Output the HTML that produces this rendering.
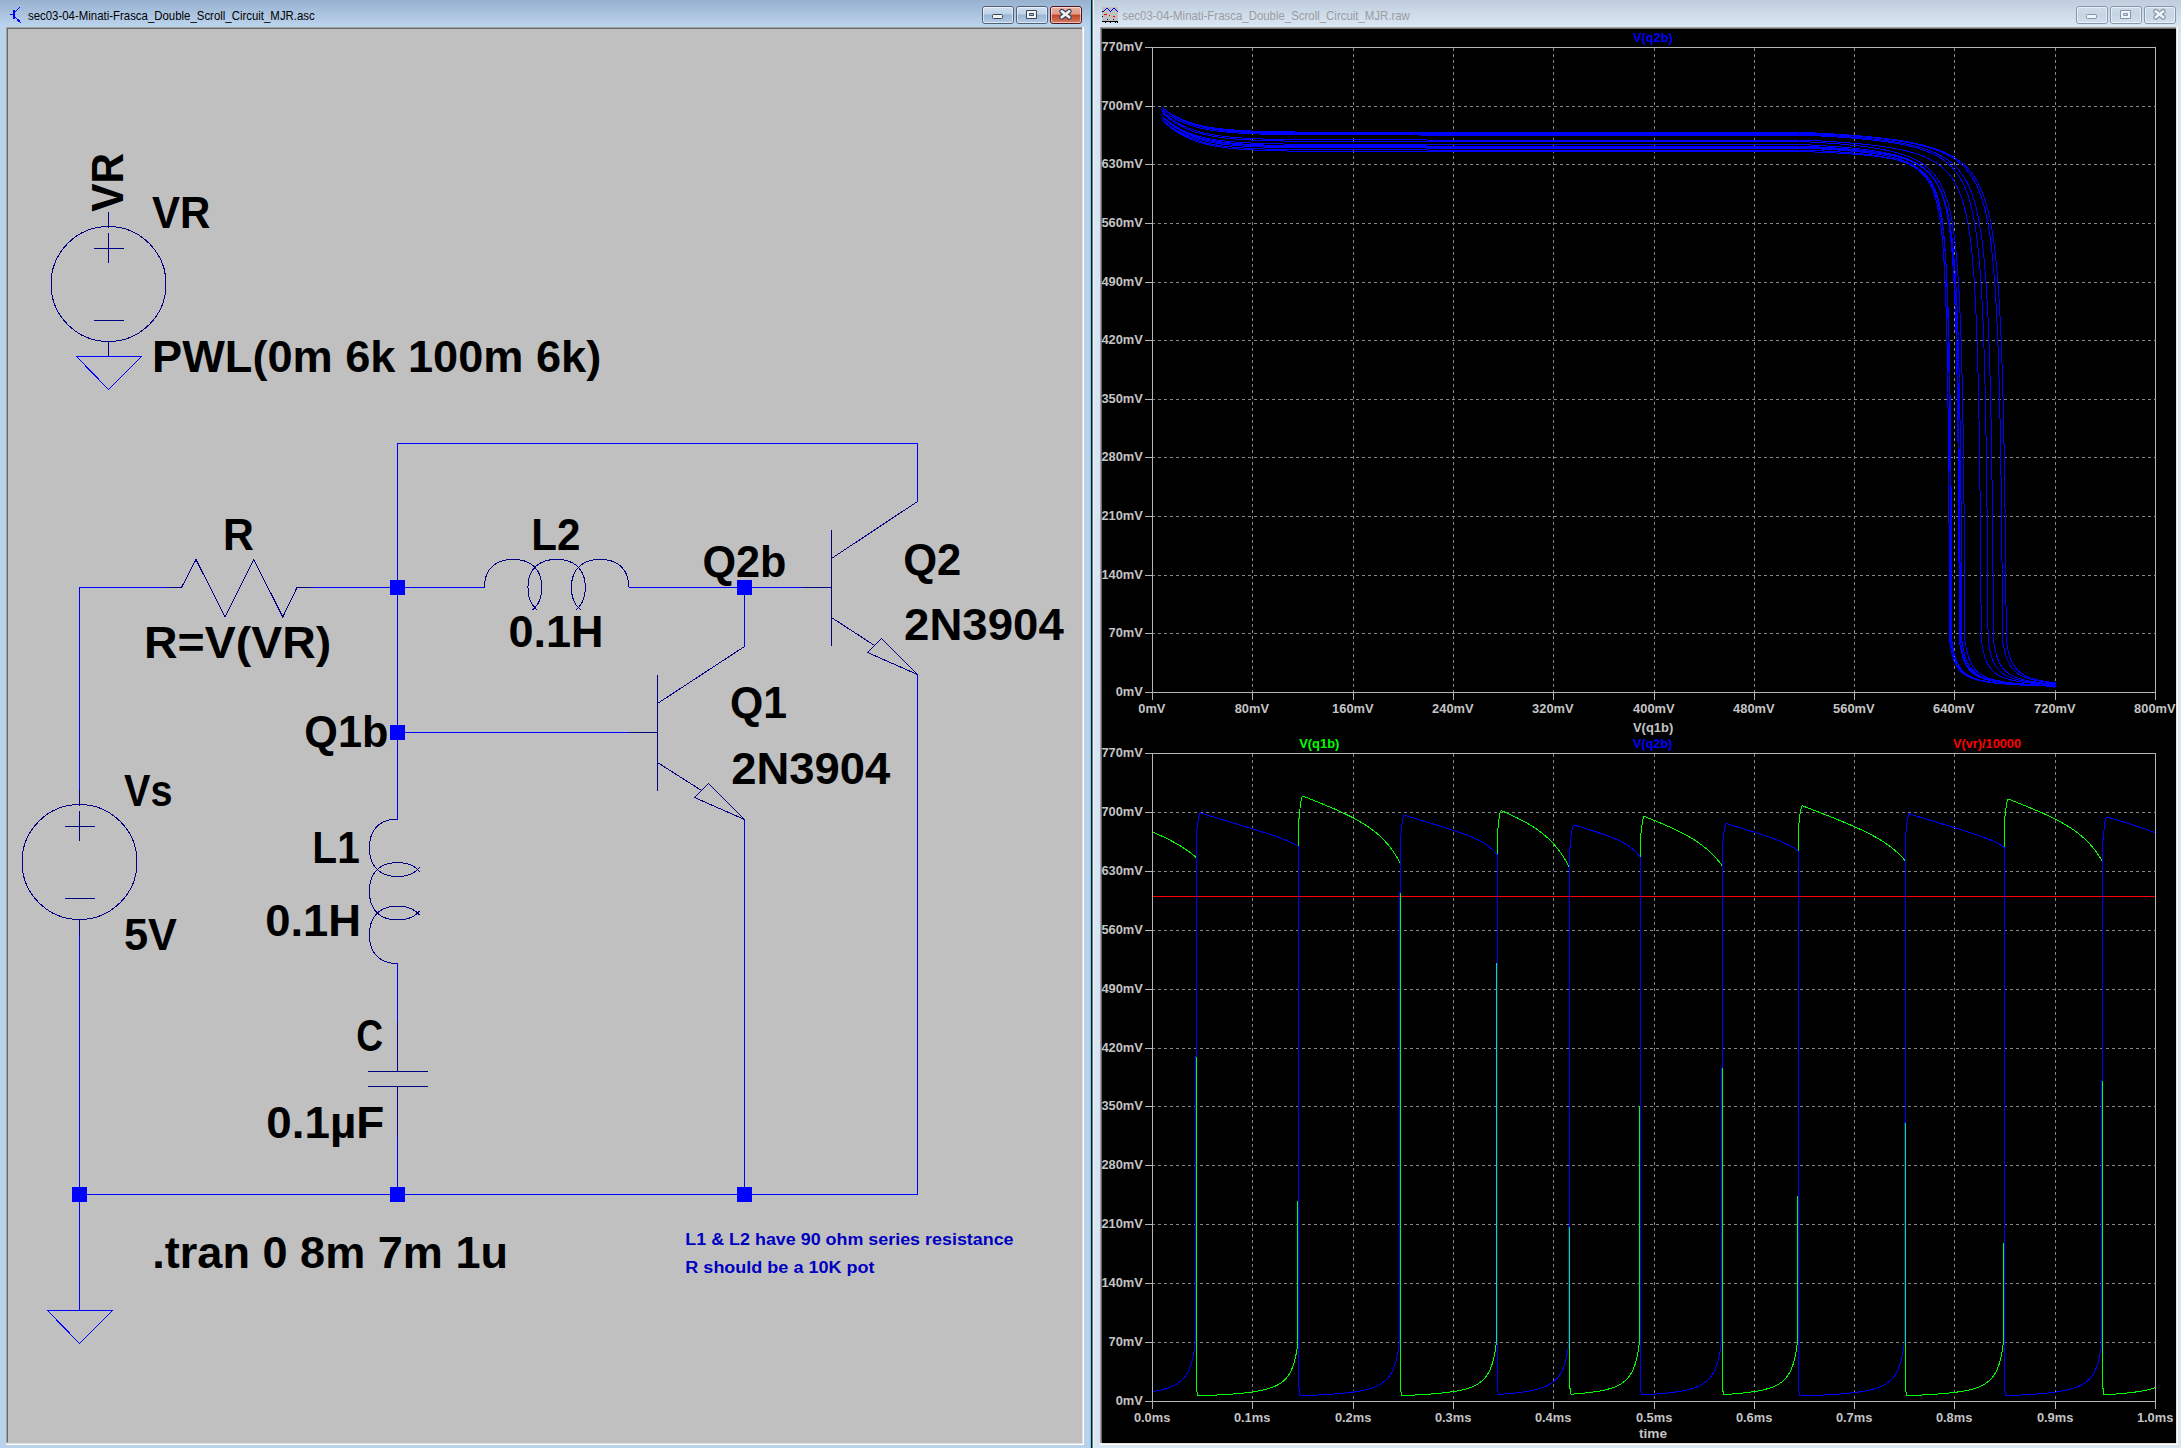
<!DOCTYPE html><html><head><meta charset='utf-8'><style>html,body{margin:0;padding:0;background:#bad2ea;overflow:hidden}svg{display:block}text{font-family:'Liberation Sans',sans-serif}</style></head><body>
<svg width='2181' height='1448' viewBox='0 0 2181 1448'>
<defs>
<linearGradient id='tgA' x1='0' y1='0' x2='0' y2='1'><stop offset='0' stop-color='#97b1cf'/><stop offset='1' stop-color='#bdd4ee'/></linearGradient>
<linearGradient id='tgI' x1='0' y1='0' x2='0' y2='1'><stop offset='0' stop-color='#bfcddc'/><stop offset='1' stop-color='#dbe7f4'/></linearGradient>
<linearGradient id='btnA' x1='0' y1='0' x2='0' y2='1'><stop offset='0' stop-color='#d3e1f1'/><stop offset='0.45' stop-color='#bcd0e7'/><stop offset='0.5' stop-color='#9ab5d3'/><stop offset='1' stop-color='#b5cce6'/></linearGradient>
<linearGradient id='btnC' x1='0' y1='0' x2='0' y2='1'><stop offset='0' stop-color='#eab1a2'/><stop offset='0.45' stop-color='#de9b86'/><stop offset='0.5' stop-color='#c14424'/><stop offset='1' stop-color='#d8806a'/></linearGradient>
<linearGradient id='btnI' x1='0' y1='0' x2='0' y2='1'><stop offset='0' stop-color='#cfdbe8'/><stop offset='0.5' stop-color='#c6d4e4'/><stop offset='1' stop-color='#d3e0ee'/></linearGradient>
</defs>
<rect x='0' y='0' width='1090' height='1448' fill='#bad2ea'/>
<rect x='0' y='0' width='1090' height='27' fill='url(#tgA)'/>
<rect x='1092' y='0' width='1089' height='1448' fill='#d8e5f2'/>
<rect x='1092' y='0' width='1089' height='27' fill='url(#tgI)'/>
<rect x='1093' y='0' width='1' height='1448' fill='#eef4fb'/>
<rect x='1090' y='0' width='1' height='1448' fill='#55d5fb'/>
<rect x='1091' y='0' width='1' height='1448' fill='#151515'/>
<rect x='1092' y='0' width='1' height='1448' fill='#7a7a7a'/>
<rect x='6' y='27' width='1078' height='1418' fill='#ffffff'/>
<rect x='6' y='27' width='1077' height='1417' fill='#e3e3e3'/>
<rect x='6' y='27' width='1076' height='1416' fill='#a0a0a0'/>
<rect x='7' y='28' width='1075' height='1414' fill='#696969'/>
<rect x='8' y='29' width='1074' height='1414' fill='#c0c0c0'/>
<rect x='1100' y='27' width='1078' height='1418' fill='#ffffff'/>
<rect x='1100' y='27' width='1077' height='1417' fill='#e3e3e3'/>
<rect x='1100' y='27' width='1076' height='1416' fill='#a0a0a0'/>
<rect x='1101' y='28' width='1075' height='1414' fill='#696969'/>
<rect x='1102' y='29' width='1074' height='1414' fill='#000000'/>
<rect x='982.5' y='6.5' width='31' height='17' rx='2.5' fill='url(#btnA)' stroke='#4f6078' stroke-width='1'/><rect x='983.5' y='7.5' width='29' height='15' rx='1.5' fill='none' stroke='#ffffff' stroke-opacity='0.55' stroke-width='1'/><rect x='992.5' y='14.5' width='10' height='4' rx='1' fill='#f4f4f4' stroke='#3a4658' stroke-width='1'/>
<rect x='1016.5' y='6.5' width='31' height='17' rx='2.5' fill='url(#btnA)' stroke='#4f6078' stroke-width='1'/><rect x='1017.5' y='7.5' width='29' height='15' rx='1.5' fill='none' stroke='#ffffff' stroke-opacity='0.55' stroke-width='1'/><path d='M1026.5 10.5h10v8h-10z M1029.5 13.5v2h4v-2z' fill='#f4f4f4' fill-rule='evenodd' stroke='#3a4658' stroke-width='1'/>
<rect x='1050.5' y='6.5' width='31' height='17' rx='2.5' fill='url(#btnC)' stroke='#4b1622' stroke-width='1'/><rect x='1051.5' y='7.5' width='29' height='15' rx='1.5' fill='none' stroke='#ffffff' stroke-opacity='0.55' stroke-width='1'/><path d='M1061.7 11.3 L1069.3 17.3 M1069.3 11.3 L1061.7 17.3' stroke='#3a4658' stroke-width='5' stroke-linecap='round'/><path d='M1061.7 11.3 L1069.3 17.3 M1069.3 11.3 L1061.7 17.3' stroke='#f4f4f4' stroke-width='2.6' stroke-linecap='round'/>
<rect x='2076.5' y='6.5' width='31' height='17' rx='2.5' fill='url(#btnI)' stroke='#8797b0' stroke-width='1'/><rect x='2077.5' y='7.5' width='29' height='15' rx='1.5' fill='none' stroke='#ffffff' stroke-opacity='0.55' stroke-width='1'/><rect x='2086.5' y='14.5' width='10' height='4' rx='1' fill='#f0f3f7' stroke='#8794a8' stroke-width='1'/>
<rect x='2110.5' y='6.5' width='31' height='17' rx='2.5' fill='url(#btnI)' stroke='#8797b0' stroke-width='1'/><rect x='2111.5' y='7.5' width='29' height='15' rx='1.5' fill='none' stroke='#ffffff' stroke-opacity='0.55' stroke-width='1'/><path d='M2120.5 10.5h10v8h-10z M2123.5 13.5v2h4v-2z' fill='#f0f3f7' fill-rule='evenodd' stroke='#8794a8' stroke-width='1'/>
<rect x='2144.5' y='6.5' width='31' height='17' rx='2.5' fill='url(#btnI)' stroke='#8797b0' stroke-width='1'/><rect x='2145.5' y='7.5' width='29' height='15' rx='1.5' fill='none' stroke='#ffffff' stroke-opacity='0.55' stroke-width='1'/><path d='M2155.7 11.3 L2163.3 17.3 M2163.3 11.3 L2155.7 17.3' stroke='#8794a8' stroke-width='5' stroke-linecap='round'/><path d='M2155.7 11.3 L2163.3 17.3 M2163.3 11.3 L2155.7 17.3' stroke='#f0f3f7' stroke-width='2.6' stroke-linecap='round'/>
<rect x='10' y='14' width='1' height='1' fill='#0000ff'/><rect x='11' y='14' width='1' height='1' fill='#0000ff'/><rect x='12' y='14' width='1' height='1' fill='#0000ff'/><rect x='13' y='10' width='1' height='1' fill='#0000ff'/><rect x='13' y='11' width='1' height='1' fill='#0000ff'/><rect x='13' y='12' width='1' height='1' fill='#0000ff'/><rect x='13' y='13' width='1' height='1' fill='#0000ff'/><rect x='13' y='14' width='1' height='1' fill='#0000ff'/><rect x='13' y='15' width='1' height='1' fill='#0000ff'/><rect x='13' y='16' width='1' height='1' fill='#0000ff'/><rect x='13' y='17' width='1' height='1' fill='#0000ff'/><rect x='13' y='18' width='1' height='1' fill='#0000ff'/><rect x='14' y='10' width='1' height='1' fill='#0000ff'/><rect x='14' y='11' width='1' height='1' fill='#0000ff'/><rect x='14' y='12' width='1' height='1' fill='#0000ff'/><rect x='14' y='13' width='1' height='1' fill='#0000ff'/><rect x='14' y='14' width='1' height='1' fill='#0000ff'/><rect x='14' y='15' width='1' height='1' fill='#0000ff'/><rect x='14' y='16' width='1' height='1' fill='#0000ff'/><rect x='14' y='17' width='1' height='1' fill='#0000ff'/><rect x='14' y='18' width='1' height='1' fill='#0000ff'/><rect x='15' y='11' width='1' height='1' fill='#0000ff'/><rect x='16' y='10' width='1' height='1' fill='#0000ff'/><rect x='17' y='9' width='1' height='1' fill='#0000ff'/><rect x='18' y='8' width='1' height='1' fill='#0000ff'/><rect x='19' y='7' width='1' height='1' fill='#0000ff'/><rect x='15' y='17' width='1' height='1' fill='#0000ff'/><rect x='16' y='18' width='1' height='1' fill='#0000ff'/><rect x='17' y='19' width='1' height='1' fill='#0000ff'/><rect x='18' y='20' width='1' height='1' fill='#0000ff'/><rect x='19' y='21' width='1' height='1' fill='#0000ff'/><rect x='20' y='22' width='1' height='1' fill='#0000ff'/><rect x='17' y='20' width='1' height='1' fill='#0000ff'/><rect x='18' y='19' width='1' height='1' fill='#0000ff'/><rect x='18' y='21' width='1' height='1' fill='#0000ff'/><rect x='19' y='20' width='1' height='1' fill='#0000ff'/>
<rect x='1102' y='7' width='16' height='14' fill='#c0c0c0'/><rect x='1103' y='11' width='1' height='1' fill='#0000ff'/><rect x='1104' y='10' width='1' height='1' fill='#0000ff'/><rect x='1105' y='9' width='1' height='1' fill='#0000ff'/><rect x='1106' y='8' width='1' height='1' fill='#0000ff'/><rect x='1107' y='8' width='1' height='1' fill='#0000ff'/><rect x='1108' y='9' width='1' height='1' fill='#0000ff'/><rect x='1109' y='10' width='1' height='1' fill='#0000ff'/><rect x='1110' y='11' width='1' height='1' fill='#0000ff'/><rect x='1111' y='10' width='1' height='1' fill='#0000ff'/><rect x='1112' y='9' width='1' height='1' fill='#0000ff'/><rect x='1113' y='8' width='1' height='1' fill='#0000ff'/><rect x='1114' y='8' width='1' height='1' fill='#0000ff'/><rect x='1115' y='9' width='1' height='1' fill='#0000ff'/><rect x='1116' y='10' width='1' height='1' fill='#0000ff'/><rect x='1117' y='11' width='1' height='1' fill='#0000ff'/><rect x='1102' y='11' width='1' height='1' fill='#000000'/><rect x='1102' y='16' width='1' height='1' fill='#000000'/><rect x='1102' y='21' width='1' height='1' fill='#000000'/><rect x='1103' y='21' width='1' height='1' fill='#000000'/><rect x='1104' y='21' width='1' height='1' fill='#000000'/><rect x='1105' y='21' width='1' height='1' fill='#000000'/><rect x='1106' y='21' width='1' height='1' fill='#000000'/><rect x='1107' y='21' width='1' height='1' fill='#000000'/><rect x='1108' y='21' width='1' height='1' fill='#000000'/><rect x='1109' y='21' width='1' height='1' fill='#000000'/><rect x='1110' y='21' width='1' height='1' fill='#000000'/><rect x='1111' y='21' width='1' height='1' fill='#000000'/><rect x='1112' y='21' width='1' height='1' fill='#000000'/><rect x='1113' y='21' width='1' height='1' fill='#000000'/><rect x='1114' y='21' width='1' height='1' fill='#000000'/><rect x='1115' y='21' width='1' height='1' fill='#000000'/><rect x='1116' y='21' width='1' height='1' fill='#000000'/><rect x='1117' y='21' width='1' height='1' fill='#000000'/><rect x='1105' y='22' width='1' height='1' fill='#000000'/><rect x='1110' y='22' width='1' height='1' fill='#000000'/><rect x='1115' y='22' width='1' height='1' fill='#000000'/><rect x='1117' y='22' width='1' height='1' fill='#000000'/><rect x='1104' y='14' width='1' height='1' fill='#ff0000'/><rect x='1105' y='14' width='1' height='1' fill='#ff0000'/><rect x='1106' y='14' width='1' height='1' fill='#ff0000'/><rect x='1109' y='15' width='1' height='1' fill='#ff0000'/><rect x='1113' y='16' width='1' height='1' fill='#ff0000'/><rect x='1114' y='16' width='1' height='1' fill='#ff0000'/><rect x='1107' y='19' width='1' height='1' fill='#000080'/><rect x='1113' y='19' width='1' height='1' fill='#000080'/>
<rect x='397' y='443' width='521' height='1' fill='#0000ff'/>
<rect x='397' y='443' width='1' height='377' fill='#0000ff'/>
<rect x='917' y='443' width='1' height='59' fill='#0000ff'/>
<rect x='79' y='587' width='1' height='205' fill='#0000ff'/>
<rect x='79' y='587' width='89' height='1' fill='#0000ff'/>
<rect x='311' y='587' width='174' height='1' fill='#0000ff'/>
<rect x='629' y='587' width='175' height='1' fill='#0000ff'/>
<rect x='744' y='587' width='1' height='60' fill='#0000ff'/>
<rect x='397' y='732' width='233' height='1' fill='#0000ff'/>
<rect x='79' y='933' width='1' height='378' fill='#0000ff'/>
<rect x='397' y='963' width='1' height='60' fill='#0000ff'/>
<rect x='397' y='1136' width='1' height='59' fill='#0000ff'/>
<rect x='744' y='819' width='1' height='376' fill='#0000ff'/>
<rect x='917' y='674' width='1' height='521' fill='#0000ff'/>
<rect x='79' y='1194' width='839' height='1' fill='#0000ff'/>
<rect x='390' y='580' width='15' height='15' fill='#0000ff'/>
<rect x='737' y='580' width='15' height='15' fill='#0000ff'/>
<rect x='390' y='725' width='15' height='15' fill='#0000ff'/>
<rect x='72' y='1187' width='15' height='15' fill='#0000ff'/>
<rect x='390' y='1187' width='15' height='15' fill='#0000ff'/>
<rect x='737' y='1187' width='15' height='15' fill='#0000ff'/>
<circle cx='108.5' cy='284' r='57.5' stroke='#000080' stroke-width='1' fill='none' shape-rendering='crispEdges'/>
<rect x='108' y='212' width='1' height='16' fill='#000080'/>
<rect x='108' y='341' width='1' height='16' fill='#000080'/>
<rect x='94' y='248' width='30' height='1' fill='#000080'/>
<rect x='108' y='233' width='1' height='30' fill='#000080'/>
<rect x='94' y='320' width='30' height='1' fill='#000080'/>
<circle cx='79.5' cy='862' r='57.5' stroke='#000080' stroke-width='1' fill='none' shape-rendering='crispEdges'/>
<rect x='79' y='790' width='1' height='16' fill='#000080'/>
<rect x='79' y='919' width='1' height='16' fill='#000080'/>
<rect x='65' y='826' width='30' height='1' fill='#000080'/>
<rect x='79' y='811' width='1' height='30' fill='#000080'/>
<rect x='65' y='898' width='30' height='1' fill='#000080'/>
<path d='M76.50 356.50 L141.50 356.50 L108.50 389.50 Z' stroke='#0000ff' stroke-width='1' fill='none' shape-rendering='crispEdges'/>
<path d='M47.50 1310.50 L112.50 1310.50 L79.50 1343.50 Z' stroke='#0000ff' stroke-width='1' fill='none' shape-rendering='crispEdges'/>
<rect x='167' y='587' width='15' height='1' fill='#000080'/>
<path d='M181.50 587.50 L196.00 559.50 L225.00 617.00 L253.80 559.50 L282.80 617.00 L297.00 587.50' stroke='#000080' stroke-width='1' fill='none' shape-rendering='crispEdges'/>
<rect x='296' y='587' width='16' height='1' fill='#000080'/>
<path d='M484.50 587.50 L484.52 585.63 L484.60 584.08 L484.72 582.64 L484.90 581.27 L485.12 579.96 L485.39 578.69 L485.71 577.47 L486.07 576.28 L486.49 575.13 L486.95 574.02 L487.46 572.95 L488.01 571.91 L488.61 570.91 L489.26 569.94 L489.94 569.02 L490.68 568.13 L491.45 567.28 L492.27 566.47 L493.12 565.71 L494.02 564.98 L494.96 564.30 L495.93 563.66 L496.95 563.06 L498.00 562.51 L499.09 562.00 L500.22 561.54 L501.38 561.12 L502.59 560.76 L503.83 560.43 L505.11 560.16 L506.44 559.93 L507.83 559.75 L509.28 559.62 L510.83 559.54 L512.59 559.50 L514.65 559.51 L516.26 559.58 L517.75 559.69 L519.16 559.85 L520.51 560.05 L521.82 560.31 L523.08 560.61 L524.30 560.96 L525.48 561.35 L526.62 561.80 L527.73 562.28 L528.80 562.82 L529.83 563.39 L530.82 564.01 L531.78 564.68 L532.69 565.39 L533.57 566.14 L534.40 566.93 L535.19 567.76 L535.94 568.63 L536.65 569.54 L537.31 570.48 L537.93 571.47 L538.51 572.49 L539.04 573.55 L539.52 574.64 L539.95 575.78 L540.34 576.95 L540.68 578.15 L540.97 579.40 L541.21 580.70 L541.41 582.04 L541.55 583.44 L541.65 584.94 L541.70 586.59 L541.69 588.64 L541.64 590.26 L541.54 591.74 L541.39 593.14 L541.19 594.47 L540.94 595.76 L540.64 597.00 L540.29 598.21 L539.90 599.37 L539.46 600.50 L538.97 601.59 L538.44 602.64 L537.86 603.66 L537.23 604.64 L536.56 605.58 L535.85 606.49 L535.09 607.35 L534.29 608.18 L533.46 608.96 L532.58 609.71 M537.12 609.71 L536.06 608.80 L535.05 607.83 L534.11 606.79 L533.23 605.70 L532.41 604.56 L531.66 603.36 L530.98 602.10 L530.37 600.79 L529.82 599.42 L529.34 598.00 L528.94 596.52 L528.61 594.98 L528.35 593.37 L528.16 591.68 L528.04 589.86 L528.00 587.72 L528.03 585.42 L528.14 583.57 L528.31 581.86 L528.56 580.24 L528.89 578.69 L529.28 577.21 L529.75 575.78 L530.28 574.40 L530.89 573.08 L531.56 571.82 L532.30 570.61 L533.11 569.45 L533.98 568.36 L534.92 567.32 L535.91 566.34 L536.97 565.42 L538.09 564.56 L539.26 563.77 L540.49 563.04 L541.78 562.37 L543.13 561.78 L544.52 561.25 L545.98 560.79 L547.49 560.39 L549.07 560.07 L550.72 559.82 L552.46 559.64 L554.33 559.54 L556.60 559.50 L558.87 559.54 L560.74 559.64 L562.48 559.82 L564.13 560.07 L565.71 560.39 L567.22 560.79 L568.68 561.25 L570.07 561.78 L571.42 562.37 L572.71 563.04 L573.94 563.77 L575.11 564.56 L576.23 565.42 L577.29 566.34 L578.28 567.32 L579.22 568.36 L580.09 569.45 L580.90 570.61 L581.64 571.82 L582.31 573.08 L582.92 574.40 L583.45 575.78 L583.92 577.21 L584.31 578.69 L584.64 580.24 L584.89 581.86 L585.06 583.57 L585.17 585.42 L585.20 587.72 L585.16 589.86 L585.04 591.68 L584.85 593.37 L584.59 594.98 L584.26 596.52 L583.86 598.00 L583.38 599.42 L582.83 600.79 L582.22 602.10 L581.54 603.36 L580.79 604.56 L579.97 605.70 L579.09 606.79 L578.15 607.83 L577.14 608.80 L576.08 609.71 M580.62 609.71 L579.74 608.96 L578.91 608.18 L578.11 607.35 L577.35 606.49 L576.64 605.58 L575.97 604.64 L575.34 603.66 L574.76 602.64 L574.23 601.59 L573.74 600.50 L573.30 599.37 L572.91 598.21 L572.56 597.00 L572.26 595.76 L572.01 594.47 L571.81 593.14 L571.66 591.74 L571.56 590.26 L571.51 588.64 L571.50 586.59 L571.55 584.94 L571.65 583.44 L571.79 582.04 L571.99 580.70 L572.23 579.40 L572.52 578.15 L572.86 576.95 L573.25 575.78 L573.68 574.64 L574.16 573.55 L574.69 572.49 L575.27 571.47 L575.89 570.48 L576.55 569.54 L577.26 568.63 L578.01 567.76 L578.80 566.93 L579.63 566.14 L580.51 565.39 L581.42 564.68 L582.38 564.01 L583.37 563.39 L584.40 562.82 L585.47 562.28 L586.58 561.80 L587.72 561.35 L588.90 560.96 L590.12 560.61 L591.38 560.31 L592.69 560.05 L594.04 559.85 L595.45 559.69 L596.94 559.58 L598.55 559.51 L600.61 559.50 L602.37 559.54 L603.92 559.62 L605.37 559.75 L606.76 559.93 L608.09 560.16 L609.37 560.43 L610.61 560.76 L611.82 561.12 L612.98 561.54 L614.11 562.00 L615.20 562.51 L616.25 563.06 L617.27 563.66 L618.24 564.30 L619.18 564.98 L620.08 565.71 L620.93 566.47 L621.75 567.28 L622.52 568.13 L623.26 569.02 L623.94 569.94 L624.59 570.91 L625.19 571.91 L625.74 572.95 L626.25 574.02 L626.71 575.13 L627.13 576.28 L627.49 577.47 L627.81 578.69 L628.08 579.96 L628.30 581.27 L628.48 582.64 L628.60 584.08 L628.68 585.63 L628.70 587.50 ' stroke='#000080' stroke-width='1' fill='none' shape-rendering='crispEdges'/>
<path d='M397.50 819.20 L395.63 819.22 L394.08 819.30 L392.64 819.42 L391.27 819.60 L389.96 819.82 L388.69 820.09 L387.47 820.41 L386.28 820.77 L385.13 821.19 L384.02 821.65 L382.95 822.16 L381.91 822.71 L380.91 823.31 L379.94 823.96 L379.02 824.64 L378.13 825.38 L377.28 826.15 L376.47 826.97 L375.71 827.82 L374.98 828.72 L374.30 829.66 L373.66 830.63 L373.06 831.65 L372.51 832.70 L372.00 833.79 L371.54 834.92 L371.12 836.08 L370.76 837.29 L370.43 838.53 L370.16 839.81 L369.93 841.14 L369.75 842.53 L369.62 843.98 L369.54 845.53 L369.50 847.29 L369.51 849.35 L369.58 850.96 L369.69 852.45 L369.85 853.86 L370.05 855.21 L370.31 856.52 L370.61 857.78 L370.96 859.00 L371.35 860.18 L371.80 861.32 L372.28 862.43 L372.82 863.50 L373.39 864.53 L374.01 865.52 L374.68 866.48 L375.39 867.39 L376.14 868.27 L376.93 869.10 L377.76 869.89 L378.63 870.64 L379.54 871.35 L380.48 872.01 L381.47 872.63 L382.49 873.21 L383.55 873.74 L384.64 874.22 L385.78 874.65 L386.95 875.04 L388.15 875.38 L389.40 875.67 L390.70 875.91 L392.04 876.11 L393.44 876.25 L394.94 876.35 L396.59 876.40 L398.64 876.39 L400.26 876.34 L401.74 876.24 L403.14 876.09 L404.47 875.89 L405.76 875.64 L407.00 875.34 L408.21 874.99 L409.37 874.60 L410.50 874.16 L411.59 873.67 L412.64 873.14 L413.66 872.56 L414.64 871.93 L415.58 871.26 L416.49 870.55 L417.35 869.79 L418.18 868.99 L418.96 868.16 L419.71 867.28 M419.71 871.82 L418.80 870.76 L417.83 869.75 L416.79 868.81 L415.70 867.93 L414.56 867.11 L413.36 866.36 L412.10 865.68 L410.79 865.07 L409.42 864.52 L408.00 864.04 L406.52 863.64 L404.98 863.31 L403.37 863.05 L401.68 862.86 L399.86 862.74 L397.72 862.70 L395.42 862.73 L393.57 862.84 L391.86 863.01 L390.24 863.26 L388.69 863.59 L387.21 863.98 L385.78 864.45 L384.40 864.98 L383.08 865.59 L381.82 866.26 L380.61 867.00 L379.45 867.81 L378.36 868.68 L377.32 869.62 L376.34 870.61 L375.42 871.67 L374.56 872.79 L373.77 873.96 L373.04 875.19 L372.37 876.48 L371.78 877.83 L371.25 879.22 L370.79 880.68 L370.39 882.19 L370.07 883.77 L369.82 885.42 L369.64 887.16 L369.54 889.03 L369.50 891.30 L369.54 893.57 L369.64 895.44 L369.82 897.18 L370.07 898.83 L370.39 900.41 L370.79 901.92 L371.25 903.38 L371.78 904.77 L372.37 906.12 L373.04 907.41 L373.77 908.64 L374.56 909.81 L375.42 910.93 L376.34 911.99 L377.32 912.98 L378.36 913.92 L379.45 914.79 L380.61 915.60 L381.82 916.34 L383.08 917.01 L384.40 917.62 L385.78 918.15 L387.21 918.62 L388.69 919.01 L390.24 919.34 L391.86 919.59 L393.57 919.76 L395.42 919.87 L397.72 919.90 L399.86 919.86 L401.68 919.74 L403.37 919.55 L404.98 919.29 L406.52 918.96 L408.00 918.56 L409.42 918.08 L410.79 917.53 L412.10 916.92 L413.36 916.24 L414.56 915.49 L415.70 914.67 L416.79 913.79 L417.83 912.85 L418.80 911.84 L419.71 910.78 M419.71 915.32 L418.96 914.44 L418.18 913.61 L417.35 912.81 L416.49 912.05 L415.58 911.34 L414.64 910.67 L413.66 910.04 L412.64 909.46 L411.59 908.93 L410.50 908.44 L409.37 908.00 L408.21 907.61 L407.00 907.26 L405.76 906.96 L404.47 906.71 L403.14 906.51 L401.74 906.36 L400.26 906.26 L398.64 906.21 L396.59 906.20 L394.94 906.25 L393.44 906.35 L392.04 906.49 L390.70 906.69 L389.40 906.93 L388.15 907.22 L386.95 907.56 L385.78 907.95 L384.64 908.38 L383.55 908.86 L382.49 909.39 L381.47 909.97 L380.48 910.59 L379.54 911.25 L378.63 911.96 L377.76 912.71 L376.93 913.50 L376.14 914.33 L375.39 915.21 L374.68 916.12 L374.01 917.08 L373.39 918.07 L372.82 919.10 L372.28 920.17 L371.80 921.28 L371.35 922.42 L370.96 923.60 L370.61 924.82 L370.31 926.08 L370.05 927.39 L369.85 928.74 L369.69 930.15 L369.58 931.64 L369.51 933.25 L369.50 935.31 L369.54 937.07 L369.62 938.62 L369.75 940.07 L369.93 941.46 L370.16 942.79 L370.43 944.07 L370.76 945.31 L371.12 946.52 L371.54 947.68 L372.00 948.81 L372.51 949.90 L373.06 950.95 L373.66 951.97 L374.30 952.94 L374.98 953.88 L375.71 954.78 L376.47 955.63 L377.28 956.45 L378.13 957.22 L379.02 957.96 L379.94 958.64 L380.91 959.29 L381.91 959.89 L382.95 960.44 L384.02 960.95 L385.13 961.41 L386.28 961.83 L387.47 962.19 L388.69 962.51 L389.96 962.78 L391.27 963.00 L392.64 963.18 L394.08 963.30 L395.63 963.38 L397.50 963.40 ' stroke='#000080' stroke-width='1' fill='none' shape-rendering='crispEdges'/>
<rect x='397' y='1022' width='1' height='50' fill='#000080'/>
<rect x='368' y='1071' width='60' height='1' fill='#000080'/>
<rect x='368' y='1086' width='60' height='1' fill='#000080'/>
<rect x='397' y='1086' width='1' height='51' fill='#000080'/>
<rect x='831' y='530' width='1' height='116' fill='#000080'/>
<rect x='802' y='587' width='30' height='1' fill='#000080'/>
<line x1='831.5' y1='558.5' x2='917.5' y2='501.5' stroke='#000080' stroke-width='1' shape-rendering='crispEdges'/>
<line x1='831.5' y1='617.5' x2='874.5' y2='645.5' stroke='#000080' stroke-width='1' shape-rendering='crispEdges'/>
<path d='M881.50 638.50 L867.50 652.50 L917.50 674.50 Z' stroke='#000080' stroke-width='1' fill='none' shape-rendering='crispEdges'/>
<rect x='657' y='675' width='1' height='116' fill='#000080'/>
<rect x='629' y='732' width='29' height='1' fill='#000080'/>
<line x1='657.5' y1='703.5' x2='744.5' y2='646.5' stroke='#000080' stroke-width='1' shape-rendering='crispEdges'/>
<line x1='657.5' y1='762.5' x2='701.5' y2='790.5' stroke='#000080' stroke-width='1' shape-rendering='crispEdges'/>
<path d='M708.50 783.50 L694.50 797.50 L744.50 819.50 Z' stroke='#000080' stroke-width='1' fill='none' shape-rendering='crispEdges'/>
<line x1='1252.5' y1='48' x2='1252.5' y2='692' stroke='#858585' stroke-width='1' stroke-dasharray='3 3'/>
<line x1='1353.5' y1='48' x2='1353.5' y2='692' stroke='#858585' stroke-width='1' stroke-dasharray='3 3'/>
<line x1='1453.5' y1='48' x2='1453.5' y2='692' stroke='#858585' stroke-width='1' stroke-dasharray='3 3'/>
<line x1='1553.5' y1='48' x2='1553.5' y2='692' stroke='#858585' stroke-width='1' stroke-dasharray='3 3'/>
<line x1='1654.5' y1='48' x2='1654.5' y2='692' stroke='#858585' stroke-width='1' stroke-dasharray='3 3'/>
<line x1='1754.5' y1='48' x2='1754.5' y2='692' stroke='#858585' stroke-width='1' stroke-dasharray='3 3'/>
<line x1='1854.5' y1='48' x2='1854.5' y2='692' stroke='#858585' stroke-width='1' stroke-dasharray='3 3'/>
<line x1='1954.5' y1='48' x2='1954.5' y2='692' stroke='#858585' stroke-width='1' stroke-dasharray='3 3'/>
<line x1='2055.5' y1='48' x2='2055.5' y2='692' stroke='#858585' stroke-width='1' stroke-dasharray='3 3'/>
<line x1='1152' y1='106.5' x2='2155' y2='106.5' stroke='#858585' stroke-width='1' stroke-dasharray='3 3'/>
<line x1='1152' y1='164.5' x2='2155' y2='164.5' stroke='#858585' stroke-width='1' stroke-dasharray='3 3'/>
<line x1='1152' y1='223.5' x2='2155' y2='223.5' stroke='#858585' stroke-width='1' stroke-dasharray='3 3'/>
<line x1='1152' y1='282.5' x2='2155' y2='282.5' stroke='#858585' stroke-width='1' stroke-dasharray='3 3'/>
<line x1='1152' y1='340.5' x2='2155' y2='340.5' stroke='#858585' stroke-width='1' stroke-dasharray='3 3'/>
<line x1='1152' y1='399.5' x2='2155' y2='399.5' stroke='#858585' stroke-width='1' stroke-dasharray='3 3'/>
<line x1='1152' y1='457.5' x2='2155' y2='457.5' stroke='#858585' stroke-width='1' stroke-dasharray='3 3'/>
<line x1='1152' y1='516.5' x2='2155' y2='516.5' stroke='#858585' stroke-width='1' stroke-dasharray='3 3'/>
<line x1='1152' y1='575.5' x2='2155' y2='575.5' stroke='#858585' stroke-width='1' stroke-dasharray='3 3'/>
<line x1='1152' y1='633.5' x2='2155' y2='633.5' stroke='#858585' stroke-width='1' stroke-dasharray='3 3'/>
<rect x='1152' y='47' width='1004' height='1' fill='#b4b4b4'/>
<rect x='1152' y='692' width='1004' height='1' fill='#b4b4b4'/>
<rect x='1152' y='47' width='1' height='646' fill='#b4b4b4'/>
<rect x='2155' y='47' width='1' height='646' fill='#b4b4b4'/>
<rect x='1145' y='47' width='7' height='1' fill='#b4b4b4'/>
<rect x='1145' y='106' width='7' height='1' fill='#b4b4b4'/>
<rect x='1145' y='164' width='7' height='1' fill='#b4b4b4'/>
<rect x='1145' y='223' width='7' height='1' fill='#b4b4b4'/>
<rect x='1145' y='282' width='7' height='1' fill='#b4b4b4'/>
<rect x='1145' y='340' width='7' height='1' fill='#b4b4b4'/>
<rect x='1145' y='399' width='7' height='1' fill='#b4b4b4'/>
<rect x='1145' y='457' width='7' height='1' fill='#b4b4b4'/>
<rect x='1145' y='516' width='7' height='1' fill='#b4b4b4'/>
<rect x='1145' y='575' width='7' height='1' fill='#b4b4b4'/>
<rect x='1145' y='633' width='7' height='1' fill='#b4b4b4'/>
<rect x='1145' y='692' width='7' height='1' fill='#b4b4b4'/>
<rect x='1152' y='692' width='1' height='8' fill='#b4b4b4'/>
<rect x='1252' y='692' width='1' height='8' fill='#b4b4b4'/>
<rect x='1353' y='692' width='1' height='8' fill='#b4b4b4'/>
<rect x='1453' y='692' width='1' height='8' fill='#b4b4b4'/>
<rect x='1553' y='692' width='1' height='8' fill='#b4b4b4'/>
<rect x='1654' y='692' width='1' height='8' fill='#b4b4b4'/>
<rect x='1754' y='692' width='1' height='8' fill='#b4b4b4'/>
<rect x='1854' y='692' width='1' height='8' fill='#b4b4b4'/>
<rect x='1954' y='692' width='1' height='8' fill='#b4b4b4'/>
<rect x='2055' y='692' width='1' height='8' fill='#b4b4b4'/>
<rect x='2155' y='692' width='1' height='8' fill='#b4b4b4'/>
<line x1='1252.5' y1='754' x2='1252.5' y2='1401' stroke='#858585' stroke-width='1' stroke-dasharray='3 3'/>
<line x1='1353.5' y1='754' x2='1353.5' y2='1401' stroke='#858585' stroke-width='1' stroke-dasharray='3 3'/>
<line x1='1453.5' y1='754' x2='1453.5' y2='1401' stroke='#858585' stroke-width='1' stroke-dasharray='3 3'/>
<line x1='1553.5' y1='754' x2='1553.5' y2='1401' stroke='#858585' stroke-width='1' stroke-dasharray='3 3'/>
<line x1='1654.5' y1='754' x2='1654.5' y2='1401' stroke='#858585' stroke-width='1' stroke-dasharray='3 3'/>
<line x1='1754.5' y1='754' x2='1754.5' y2='1401' stroke='#858585' stroke-width='1' stroke-dasharray='3 3'/>
<line x1='1854.5' y1='754' x2='1854.5' y2='1401' stroke='#858585' stroke-width='1' stroke-dasharray='3 3'/>
<line x1='1954.5' y1='754' x2='1954.5' y2='1401' stroke='#858585' stroke-width='1' stroke-dasharray='3 3'/>
<line x1='2055.5' y1='754' x2='2055.5' y2='1401' stroke='#858585' stroke-width='1' stroke-dasharray='3 3'/>
<line x1='1152' y1='812.5' x2='2155' y2='812.5' stroke='#858585' stroke-width='1' stroke-dasharray='3 3'/>
<line x1='1152' y1='871.5' x2='2155' y2='871.5' stroke='#858585' stroke-width='1' stroke-dasharray='3 3'/>
<line x1='1152' y1='930.5' x2='2155' y2='930.5' stroke='#858585' stroke-width='1' stroke-dasharray='3 3'/>
<line x1='1152' y1='989.5' x2='2155' y2='989.5' stroke='#858585' stroke-width='1' stroke-dasharray='3 3'/>
<line x1='1152' y1='1048.5' x2='2155' y2='1048.5' stroke='#858585' stroke-width='1' stroke-dasharray='3 3'/>
<line x1='1152' y1='1106.5' x2='2155' y2='1106.5' stroke='#858585' stroke-width='1' stroke-dasharray='3 3'/>
<line x1='1152' y1='1165.5' x2='2155' y2='1165.5' stroke='#858585' stroke-width='1' stroke-dasharray='3 3'/>
<line x1='1152' y1='1224.5' x2='2155' y2='1224.5' stroke='#858585' stroke-width='1' stroke-dasharray='3 3'/>
<line x1='1152' y1='1283.5' x2='2155' y2='1283.5' stroke='#858585' stroke-width='1' stroke-dasharray='3 3'/>
<line x1='1152' y1='1342.5' x2='2155' y2='1342.5' stroke='#858585' stroke-width='1' stroke-dasharray='3 3'/>
<rect x='1152' y='753' width='1004' height='1' fill='#b4b4b4'/>
<rect x='1152' y='1401' width='1004' height='1' fill='#b4b4b4'/>
<rect x='1152' y='753' width='1' height='649' fill='#b4b4b4'/>
<rect x='2155' y='753' width='1' height='649' fill='#b4b4b4'/>
<rect x='1145' y='753' width='7' height='1' fill='#b4b4b4'/>
<rect x='1145' y='812' width='7' height='1' fill='#b4b4b4'/>
<rect x='1145' y='871' width='7' height='1' fill='#b4b4b4'/>
<rect x='1145' y='930' width='7' height='1' fill='#b4b4b4'/>
<rect x='1145' y='989' width='7' height='1' fill='#b4b4b4'/>
<rect x='1145' y='1048' width='7' height='1' fill='#b4b4b4'/>
<rect x='1145' y='1106' width='7' height='1' fill='#b4b4b4'/>
<rect x='1145' y='1165' width='7' height='1' fill='#b4b4b4'/>
<rect x='1145' y='1224' width='7' height='1' fill='#b4b4b4'/>
<rect x='1145' y='1283' width='7' height='1' fill='#b4b4b4'/>
<rect x='1145' y='1342' width='7' height='1' fill='#b4b4b4'/>
<rect x='1145' y='1401' width='7' height='1' fill='#b4b4b4'/>
<rect x='1152' y='1401' width='1' height='8' fill='#b4b4b4'/>
<rect x='1252' y='1401' width='1' height='8' fill='#b4b4b4'/>
<rect x='1353' y='1401' width='1' height='8' fill='#b4b4b4'/>
<rect x='1453' y='1401' width='1' height='8' fill='#b4b4b4'/>
<rect x='1553' y='1401' width='1' height='8' fill='#b4b4b4'/>
<rect x='1654' y='1401' width='1' height='8' fill='#b4b4b4'/>
<rect x='1754' y='1401' width='1' height='8' fill='#b4b4b4'/>
<rect x='1854' y='1401' width='1' height='8' fill='#b4b4b4'/>
<rect x='1954' y='1401' width='1' height='8' fill='#b4b4b4'/>
<rect x='2055' y='1401' width='1' height='8' fill='#b4b4b4'/>
<rect x='2155' y='1401' width='1' height='8' fill='#b4b4b4'/>
<rect x='1153' y='896' width='1002' height='1' fill='#ff0000'/>
<rect x='1196' y='857' width='1' height='532' fill='#00ff00'/>
<rect x='1297' y='1201' width='1' height='141' fill='#00ff00'/>
<rect x='1298' y='818' width='1' height='384' fill='#00ff00'/>
<rect x='1400' y='863' width='1' height='526' fill='#00ff00'/>
<rect x='1496' y='963' width='1' height='379' fill='#00ff00'/>
<rect x='1497' y='833' width='1' height='131' fill='#00ff00'/>
<rect x='1569' y='868' width='1' height='521' fill='#00ff00'/>
<rect x='1639' y='1106' width='1' height='236' fill='#00ff00'/>
<rect x='1640' y='839' width='1' height='268' fill='#00ff00'/>
<rect x='1722' y='866' width='1' height='523' fill='#00ff00'/>
<rect x='1797' y='1196' width='1' height='146' fill='#00ff00'/>
<rect x='1798' y='828' width='1' height='369' fill='#00ff00'/>
<rect x='1905' y='861' width='1' height='528' fill='#00ff00'/>
<rect x='2003' y='1243' width='1' height='99' fill='#00ff00'/>
<rect x='2004' y='821' width='1' height='423' fill='#00ff00'/>
<rect x='2102' y='862' width='1' height='527' fill='#00ff00'/>
<path d='M1153.00 832.15 L1153.50 832.37 L1154.00 832.59 L1154.50 832.81 L1155.00 833.03 L1155.50 833.26 L1156.00 833.48 L1156.50 833.70 L1157.00 833.93 L1157.50 834.15 L1158.00 834.38 L1158.50 834.61 L1159.00 834.84 L1159.50 835.07 L1160.00 835.30 L1160.50 835.53 L1161.00 835.76 L1161.50 835.99 L1162.00 836.23 L1162.50 836.47 L1163.00 836.70 L1163.50 836.94 L1164.00 837.18 L1164.50 837.42 L1165.00 837.66 L1165.50 837.91 L1166.00 838.15 L1166.50 838.40 L1167.00 838.65 L1167.50 838.90 L1168.00 839.15 L1168.50 839.40 L1169.00 839.65 L1169.50 839.91 L1170.00 840.16 L1170.50 840.42 L1171.00 840.68 L1171.50 840.95 L1172.00 841.21 L1172.50 841.48 L1173.00 841.75 L1173.50 842.02 L1174.00 842.29 L1174.50 842.56 L1175.00 842.84 L1175.50 843.12 L1176.00 843.40 L1176.50 843.68 L1177.00 843.97 L1177.50 844.25 L1178.00 844.55 L1178.50 844.84 L1179.00 845.13 L1179.50 845.43 L1180.00 845.73 L1180.50 846.04 L1181.00 846.34 L1181.50 846.65 L1182.00 846.97 L1182.50 847.28 L1183.00 847.60 L1183.50 847.92 L1184.00 848.25 L1184.50 848.58 L1185.00 848.91 L1185.50 849.25 L1186.00 849.59 L1186.50 849.93 L1187.00 850.28 L1187.50 850.63 L1188.00 850.99 L1188.50 851.35 L1189.00 851.71 L1189.50 852.08 L1190.00 852.46 L1190.50 852.84 L1191.00 853.22 L1191.50 853.61 L1192.00 854.00 L1192.50 854.40 L1193.00 854.80 L1193.50 855.21 L1194.00 855.62 L1194.50 856.05 L1195.00 856.47 L1195.50 856.90 L1196.00 857.34 L1196.50 857.79' stroke='#00ff00' stroke-width='1' fill='none' shape-rendering='crispEdges'/>
<path d='M1196.50 1388.13 L1197.50 1395.81 L1198.00 1395.79 L1198.49 1395.77 L1198.99 1395.76 L1199.48 1395.74 L1199.98 1395.72 L1200.47 1395.70 L1200.97 1395.69 L1201.46 1395.67 L1201.96 1395.65 L1202.45 1395.63 L1202.95 1395.61 L1203.44 1395.59 L1203.94 1395.57 L1204.43 1395.55 L1204.93 1395.53 L1205.42 1395.51 L1205.92 1395.49 L1206.41 1395.47 L1206.91 1395.45 L1207.40 1395.43 L1207.90 1395.41 L1208.39 1395.39 L1208.89 1395.37 L1209.38 1395.35 L1209.88 1395.33 L1210.37 1395.31 L1210.87 1395.28 L1211.36 1395.26 L1211.86 1395.24 L1212.35 1395.22 L1212.85 1395.19 L1213.34 1395.17 L1213.84 1395.15 L1214.33 1395.12 L1214.83 1395.10 L1215.32 1395.07 L1215.82 1395.05 L1216.31 1395.02 L1216.81 1395.00 L1217.30 1394.97 L1217.80 1394.95 L1218.29 1394.92 L1218.79 1394.90 L1219.28 1394.87 L1219.78 1394.84 L1220.27 1394.81 L1220.77 1394.79 L1221.26 1394.76 L1221.76 1394.73 L1222.25 1394.70 L1222.75 1394.67 L1223.24 1394.64 L1223.74 1394.61 L1224.23 1394.58 L1224.73 1394.55 L1225.22 1394.52 L1225.72 1394.49 L1226.21 1394.46 L1226.71 1394.43 L1227.20 1394.40 L1227.70 1394.36 L1228.19 1394.33 L1228.69 1394.30 L1229.18 1394.26 L1229.68 1394.23 L1230.17 1394.19 L1230.67 1394.16 L1231.17 1394.12 L1231.66 1394.09 L1232.16 1394.05 L1232.65 1394.01 L1233.15 1393.97 L1233.64 1393.94 L1234.14 1393.90 L1234.63 1393.86 L1235.13 1393.82 L1235.62 1393.78 L1236.12 1393.73 L1236.61 1393.69 L1237.11 1393.65 L1237.60 1393.61 L1238.10 1393.56 L1238.59 1393.52 L1239.09 1393.47 L1239.58 1393.43 L1240.08 1393.38 L1240.57 1393.34 L1241.07 1393.29 L1241.56 1393.24 L1242.06 1393.19 L1242.55 1393.14 L1243.05 1393.09 L1243.54 1393.04 L1244.04 1392.98 L1244.53 1392.93 L1245.03 1392.88 L1245.52 1392.82 L1246.02 1392.76 L1246.51 1392.71 L1247.01 1392.65 L1247.50 1392.59 L1248.00 1392.53 L1248.49 1392.47 L1248.99 1392.41 L1249.48 1392.34 L1249.98 1392.28 L1250.47 1392.21 L1250.97 1392.15 L1251.46 1392.08 L1251.96 1392.01 L1252.45 1391.94 L1252.95 1391.86 L1253.44 1391.79 L1253.94 1391.72 L1254.43 1391.64 L1254.93 1391.56 L1255.42 1391.48 L1255.92 1391.40 L1256.41 1391.32 L1256.91 1391.23 L1257.40 1391.15 L1257.90 1391.06 L1258.39 1390.97 L1258.89 1390.88 L1259.38 1390.78 L1259.88 1390.69 L1260.37 1390.59 L1260.87 1390.49 L1261.36 1390.39 L1261.86 1390.28 L1262.35 1390.17 L1262.85 1390.06 L1263.34 1389.95 L1263.84 1389.84 L1264.33 1389.72 L1264.83 1389.60 L1265.33 1389.47 L1265.82 1389.35 L1266.32 1389.21 L1266.81 1389.08 L1267.31 1388.94 L1267.80 1388.80 L1268.30 1388.66 L1268.79 1388.51 L1269.29 1388.35 L1269.78 1388.20 L1270.28 1388.04 L1270.77 1387.87 L1271.27 1387.70 L1271.76 1387.52 L1272.26 1387.34 L1272.75 1387.15 L1273.25 1386.96 L1273.74 1386.76 L1274.24 1386.55 L1274.73 1386.34 L1275.23 1386.12 L1275.72 1385.89 L1276.22 1385.65 L1276.71 1385.41 L1277.21 1385.16 L1277.70 1384.89 L1278.20 1384.62 L1278.69 1384.34 L1279.19 1384.05 L1279.68 1383.74 L1280.18 1383.43 L1280.67 1383.10 L1281.17 1382.75 L1281.66 1382.40 L1282.16 1382.02 L1282.65 1381.63 L1283.15 1381.22 L1283.64 1380.79 L1284.14 1380.35 L1284.63 1379.88 L1285.13 1379.38 L1285.62 1378.86 L1286.12 1378.32 L1286.61 1377.74 L1287.11 1377.13 L1287.60 1376.49 L1288.10 1375.81 L1288.59 1375.08 L1289.09 1374.31 L1289.58 1373.49 L1290.08 1372.62 L1290.57 1371.68 L1291.07 1370.68 L1291.56 1369.60 L1292.06 1368.44 L1292.55 1367.19 L1293.05 1365.82 L1293.54 1364.34 L1294.04 1362.73 L1294.53 1360.95 L1295.03 1359.00 L1295.52 1356.84 L1296.02 1354.43 L1296.51 1351.74 L1297.01 1348.71 L1297.50 1345.26 L1298.00 1341.31' stroke='#00ff00' stroke-width='1' fill='none' shape-rendering='crispEdges'/>
<path d='M1298.00 1201.25 L1299.00 1201.25' stroke='#00ff00' stroke-width='1' fill='none' shape-rendering='crispEdges'/>
<path d='M1299.00 818.89 L1299.50 813.41 L1300.00 808.68 L1300.50 804.70 L1301.00 801.49 L1301.50 799.03 L1302.00 797.33 L1302.50 796.39 L1303.00 796.21 L1303.50 796.40 L1304.00 796.60 L1304.50 796.79 L1305.00 796.99 L1305.50 797.19 L1306.00 797.38 L1306.50 797.58 L1307.00 797.77 L1307.50 797.97 L1308.00 798.17 L1308.50 798.36 L1309.00 798.56 L1309.50 798.76 L1310.00 798.96 L1310.50 799.15 L1311.00 799.35 L1311.50 799.55 L1312.00 799.75 L1312.50 799.95 L1313.00 800.15 L1313.50 800.35 L1314.00 800.55 L1314.50 800.75 L1315.00 800.95 L1315.50 801.15 L1316.00 801.35 L1316.50 801.55 L1317.00 801.75 L1317.50 801.95 L1318.00 802.15 L1318.50 802.35 L1319.00 802.56 L1319.50 802.76 L1320.00 802.96 L1320.50 803.16 L1321.00 803.37 L1321.50 803.57 L1322.00 803.78 L1322.50 803.98 L1323.00 804.19 L1323.50 804.39 L1324.00 804.60 L1324.50 804.80 L1325.00 805.01 L1325.50 805.22 L1326.00 805.43 L1326.50 805.64 L1327.00 805.84 L1327.50 806.05 L1328.00 806.26 L1328.50 806.47 L1329.00 806.68 L1329.50 806.89 L1330.00 807.11 L1330.50 807.32 L1331.00 807.53 L1331.50 807.75 L1332.00 807.96 L1332.50 808.17 L1333.00 808.39 L1333.50 808.61 L1334.00 808.82 L1334.50 809.04 L1335.00 809.26 L1335.50 809.48 L1336.00 809.70 L1336.50 809.92 L1337.00 810.14 L1337.50 810.36 L1338.00 810.58 L1338.50 810.81 L1339.00 811.03 L1339.50 811.26 L1340.00 811.48 L1340.50 811.71 L1341.00 811.94 L1341.50 812.17 L1342.00 812.40 L1342.50 812.63 L1343.00 812.86 L1343.50 813.09 L1344.00 813.33 L1344.50 813.56 L1345.00 813.80 L1345.50 814.04 L1346.00 814.28 L1346.50 814.52 L1347.00 814.76 L1347.50 815.00 L1348.00 815.25 L1348.50 815.49 L1349.00 815.74 L1349.50 815.99 L1350.00 816.24 L1350.50 816.49 L1351.00 816.75 L1351.50 817.00 L1352.00 817.26 L1352.50 817.52 L1353.00 817.78 L1353.50 818.04 L1354.00 818.30 L1354.50 818.57 L1355.00 818.83 L1355.50 819.10 L1356.00 819.37 L1356.50 819.65 L1357.00 819.92 L1357.50 820.20 L1358.00 820.48 L1358.50 820.76 L1359.00 821.05 L1359.50 821.34 L1360.00 821.63 L1360.50 821.92 L1361.00 822.21 L1361.50 822.51 L1362.00 822.81 L1362.50 823.11 L1363.00 823.42 L1363.50 823.73 L1364.00 824.04 L1364.50 824.36 L1365.00 824.67 L1365.50 825.00 L1366.00 825.32 L1366.50 825.65 L1367.00 825.98 L1367.50 826.32 L1368.00 826.65 L1368.50 827.00 L1369.00 827.34 L1369.50 827.69 L1370.00 828.05 L1370.50 828.41 L1371.00 828.77 L1371.50 829.14 L1372.00 829.51 L1372.50 829.89 L1373.00 830.27 L1373.50 830.66 L1374.00 831.05 L1374.50 831.44 L1375.00 831.85 L1375.50 832.25 L1376.00 832.67 L1376.50 833.08 L1377.00 833.51 L1377.50 833.94 L1378.00 834.37 L1378.50 834.82 L1379.00 835.26 L1379.50 835.72 L1380.00 836.18 L1380.50 836.65 L1381.00 837.13 L1381.50 837.61 L1382.00 838.10 L1382.50 838.60 L1383.00 839.10 L1383.50 839.62 L1384.00 840.14 L1384.50 840.67 L1385.00 841.21 L1385.50 841.76 L1386.00 842.32 L1386.50 842.88 L1387.00 843.46 L1387.50 844.05 L1388.00 844.64 L1388.50 845.25 L1389.00 845.87 L1389.50 846.49 L1390.00 847.13 L1390.50 847.78 L1391.00 848.44 L1391.50 849.12 L1392.00 849.80 L1392.50 850.50 L1393.00 851.21 L1393.50 851.94 L1394.00 852.68 L1394.50 853.43 L1395.00 854.20 L1395.50 854.98 L1396.00 855.77 L1396.50 856.59 L1397.00 857.41 L1397.50 858.26 L1398.00 859.12 L1398.50 859.99 L1399.00 860.89 L1399.50 861.80 L1400.00 862.73 L1400.50 863.68' stroke='#00ff00' stroke-width='1' fill='none' shape-rendering='crispEdges'/>
<path d='M1400.50 1388.13 L1401.50 1395.61 L1401.99 1395.59 L1402.49 1395.57 L1402.98 1395.55 L1403.48 1395.53 L1403.97 1395.51 L1404.47 1395.49 L1404.96 1395.47 L1405.46 1395.45 L1405.95 1395.43 L1406.45 1395.41 L1406.94 1395.39 L1407.44 1395.37 L1407.93 1395.35 L1408.43 1395.33 L1408.92 1395.30 L1409.42 1395.28 L1409.91 1395.26 L1410.41 1395.24 L1410.90 1395.21 L1411.40 1395.19 L1411.89 1395.17 L1412.39 1395.14 L1412.88 1395.12 L1413.38 1395.10 L1413.87 1395.07 L1414.36 1395.05 L1414.86 1395.02 L1415.35 1395.00 L1415.85 1394.97 L1416.34 1394.95 L1416.84 1394.92 L1417.33 1394.89 L1417.83 1394.87 L1418.32 1394.84 L1418.82 1394.81 L1419.31 1394.78 L1419.81 1394.76 L1420.30 1394.73 L1420.80 1394.70 L1421.29 1394.67 L1421.79 1394.64 L1422.28 1394.61 L1422.78 1394.58 L1423.27 1394.55 L1423.77 1394.52 L1424.26 1394.49 L1424.76 1394.46 L1425.25 1394.43 L1425.74 1394.39 L1426.24 1394.36 L1426.73 1394.33 L1427.23 1394.29 L1427.72 1394.26 L1428.22 1394.23 L1428.71 1394.19 L1429.21 1394.16 L1429.70 1394.12 L1430.20 1394.08 L1430.69 1394.05 L1431.19 1394.01 L1431.68 1393.97 L1432.18 1393.93 L1432.67 1393.89 L1433.17 1393.85 L1433.66 1393.81 L1434.16 1393.77 L1434.65 1393.73 L1435.15 1393.69 L1435.64 1393.65 L1436.14 1393.60 L1436.63 1393.56 L1437.12 1393.52 L1437.62 1393.47 L1438.11 1393.43 L1438.61 1393.38 L1439.10 1393.33 L1439.60 1393.28 L1440.09 1393.24 L1440.59 1393.19 L1441.08 1393.14 L1441.58 1393.09 L1442.07 1393.03 L1442.57 1392.98 L1443.06 1392.93 L1443.56 1392.87 L1444.05 1392.82 L1444.55 1392.76 L1445.04 1392.70 L1445.54 1392.65 L1446.03 1392.59 L1446.53 1392.53 L1447.02 1392.47 L1447.52 1392.40 L1448.01 1392.34 L1448.51 1392.27 L1449.00 1392.21 L1449.49 1392.14 L1449.99 1392.07 L1450.48 1392.00 L1450.98 1391.93 L1451.47 1391.86 L1451.97 1391.79 L1452.46 1391.71 L1452.96 1391.64 L1453.45 1391.56 L1453.95 1391.48 L1454.44 1391.40 L1454.94 1391.31 L1455.43 1391.23 L1455.93 1391.14 L1456.42 1391.06 L1456.92 1390.97 L1457.41 1390.87 L1457.91 1390.78 L1458.40 1390.68 L1458.90 1390.59 L1459.39 1390.48 L1459.89 1390.38 L1460.38 1390.28 L1460.88 1390.17 L1461.37 1390.06 L1461.86 1389.95 L1462.36 1389.83 L1462.85 1389.71 L1463.35 1389.59 L1463.84 1389.47 L1464.34 1389.34 L1464.83 1389.21 L1465.33 1389.08 L1465.82 1388.94 L1466.32 1388.80 L1466.81 1388.65 L1467.31 1388.50 L1467.80 1388.35 L1468.30 1388.19 L1468.79 1388.03 L1469.29 1387.86 L1469.78 1387.69 L1470.28 1387.51 L1470.77 1387.33 L1471.27 1387.14 L1471.76 1386.95 L1472.26 1386.75 L1472.75 1386.54 L1473.24 1386.33 L1473.74 1386.11 L1474.23 1385.88 L1474.73 1385.65 L1475.22 1385.40 L1475.72 1385.15 L1476.21 1384.89 L1476.71 1384.62 L1477.20 1384.33 L1477.70 1384.04 L1478.19 1383.74 L1478.69 1383.42 L1479.18 1383.09 L1479.68 1382.75 L1480.17 1382.39 L1480.67 1382.01 L1481.16 1381.62 L1481.66 1381.22 L1482.15 1380.79 L1482.65 1380.34 L1483.14 1379.87 L1483.64 1379.38 L1484.13 1378.86 L1484.62 1378.31 L1485.12 1377.73 L1485.61 1377.12 L1486.11 1376.48 L1486.60 1375.80 L1487.10 1375.07 L1487.59 1374.30 L1488.09 1373.49 L1488.58 1372.61 L1489.08 1371.68 L1489.57 1370.67 L1490.07 1369.59 L1490.56 1368.43 L1491.06 1367.18 L1491.55 1365.82 L1492.05 1364.34 L1492.54 1362.72 L1493.04 1360.95 L1493.53 1358.99 L1494.03 1356.83 L1494.52 1354.43 L1495.02 1351.74 L1495.51 1348.70 L1496.01 1345.26 L1496.50 1341.31' stroke='#00ff00' stroke-width='1' fill='none' shape-rendering='crispEdges'/>
<path d='M1496.50 963.01 L1497.50 963.01' stroke='#00ff00' stroke-width='1' fill='none' shape-rendering='crispEdges'/>
<path d='M1497.50 833.20 L1498.00 827.73 L1498.50 823.02 L1499.00 819.07 L1499.50 815.87 L1500.00 813.43 L1500.50 811.75 L1501.00 810.83 L1501.50 810.67 L1502.00 810.89 L1502.50 811.11 L1503.00 811.32 L1503.50 811.54 L1504.00 811.76 L1504.50 811.98 L1505.00 812.20 L1505.50 812.43 L1506.00 812.65 L1506.50 812.87 L1507.00 813.10 L1507.50 813.32 L1508.00 813.55 L1508.50 813.78 L1509.00 814.00 L1509.50 814.23 L1510.00 814.46 L1510.50 814.69 L1511.00 814.93 L1511.50 815.16 L1512.00 815.39 L1512.50 815.63 L1513.00 815.87 L1513.50 816.11 L1514.00 816.34 L1514.50 816.58 L1515.00 816.83 L1515.50 817.07 L1516.00 817.31 L1516.50 817.56 L1517.00 817.81 L1517.50 818.06 L1518.00 818.31 L1518.50 818.56 L1519.00 818.81 L1519.50 819.07 L1520.00 819.32 L1520.50 819.58 L1521.00 819.84 L1521.50 820.10 L1522.00 820.37 L1522.50 820.63 L1523.00 820.90 L1523.50 821.17 L1524.00 821.44 L1524.50 821.72 L1525.00 821.99 L1525.50 822.27 L1526.00 822.55 L1526.50 822.83 L1527.00 823.12 L1527.50 823.40 L1528.00 823.69 L1528.50 823.99 L1529.00 824.28 L1529.50 824.58 L1530.00 824.88 L1530.50 825.18 L1531.00 825.49 L1531.50 825.80 L1532.00 826.11 L1532.50 826.42 L1533.00 826.74 L1533.50 827.06 L1534.00 827.39 L1534.50 827.72 L1535.00 828.05 L1535.50 828.38 L1536.00 828.72 L1536.50 829.07 L1537.00 829.41 L1537.50 829.76 L1538.00 830.12 L1538.50 830.48 L1539.00 830.84 L1539.50 831.21 L1540.00 831.58 L1540.50 831.96 L1541.00 832.34 L1541.50 832.73 L1542.00 833.12 L1542.50 833.51 L1543.00 833.92 L1543.50 834.32 L1544.00 834.74 L1544.50 835.15 L1545.00 835.58 L1545.50 836.01 L1546.00 836.44 L1546.50 836.89 L1547.00 837.34 L1547.50 837.79 L1548.00 838.25 L1548.50 838.72 L1549.00 839.20 L1549.50 839.68 L1550.00 840.17 L1550.50 840.67 L1551.00 841.18 L1551.50 841.69 L1552.00 842.21 L1552.50 842.75 L1553.00 843.29 L1553.50 843.83 L1554.00 844.39 L1554.50 844.96 L1555.00 845.54 L1555.50 846.12 L1556.00 846.72 L1556.50 847.32 L1557.00 847.94 L1557.50 848.57 L1558.00 849.21 L1558.50 849.86 L1559.00 850.52 L1559.50 851.20 L1560.00 851.88 L1560.50 852.58 L1561.00 853.29 L1561.50 854.02 L1562.00 854.76 L1562.50 855.51 L1563.00 856.28 L1563.50 857.06 L1564.00 857.85 L1564.50 858.67 L1565.00 859.49 L1565.50 860.34 L1566.00 861.20 L1566.50 862.07 L1567.00 862.97 L1567.50 863.88 L1568.00 864.81 L1568.50 865.76 L1569.00 866.73 L1569.50 867.72 L1570.00 868.73' stroke='#00ff00' stroke-width='1' fill='none' shape-rendering='crispEdges'/>
<path d='M1570.00 1388.13 L1571.00 1394.24 L1571.49 1394.21 L1571.99 1394.17 L1572.48 1394.14 L1572.97 1394.10 L1573.46 1394.06 L1573.96 1394.03 L1574.45 1393.99 L1574.94 1393.95 L1575.44 1393.91 L1575.93 1393.87 L1576.42 1393.83 L1576.91 1393.79 L1577.41 1393.75 L1577.90 1393.71 L1578.39 1393.67 L1578.88 1393.63 L1579.38 1393.58 L1579.87 1393.54 L1580.36 1393.49 L1580.86 1393.45 L1581.35 1393.40 L1581.84 1393.36 L1582.33 1393.31 L1582.83 1393.26 L1583.32 1393.21 L1583.81 1393.16 L1584.31 1393.11 L1584.80 1393.06 L1585.29 1393.01 L1585.78 1392.96 L1586.28 1392.90 L1586.77 1392.85 L1587.26 1392.79 L1587.76 1392.74 L1588.25 1392.68 L1588.74 1392.62 L1589.23 1392.56 L1589.73 1392.50 L1590.22 1392.44 L1590.71 1392.38 L1591.21 1392.31 L1591.70 1392.25 L1592.19 1392.18 L1592.68 1392.12 L1593.18 1392.05 L1593.67 1391.98 L1594.16 1391.91 L1594.65 1391.83 L1595.15 1391.76 L1595.64 1391.69 L1596.13 1391.61 L1596.63 1391.53 L1597.12 1391.45 L1597.61 1391.37 L1598.10 1391.29 L1598.60 1391.20 L1599.09 1391.11 L1599.58 1391.03 L1600.08 1390.94 L1600.57 1390.84 L1601.06 1390.75 L1601.55 1390.65 L1602.05 1390.55 L1602.54 1390.45 L1603.03 1390.35 L1603.53 1390.25 L1604.02 1390.14 L1604.51 1390.03 L1605.00 1389.91 L1605.50 1389.80 L1605.99 1389.68 L1606.48 1389.56 L1606.97 1389.43 L1607.47 1389.31 L1607.96 1389.18 L1608.45 1389.04 L1608.95 1388.90 L1609.44 1388.76 L1609.93 1388.62 L1610.42 1388.47 L1610.92 1388.31 L1611.41 1388.16 L1611.90 1387.99 L1612.40 1387.83 L1612.89 1387.65 L1613.38 1387.48 L1613.87 1387.29 L1614.37 1387.11 L1614.86 1386.91 L1615.35 1386.71 L1615.85 1386.50 L1616.34 1386.29 L1616.83 1386.07 L1617.32 1385.84 L1617.82 1385.60 L1618.31 1385.36 L1618.80 1385.11 L1619.29 1384.84 L1619.79 1384.57 L1620.28 1384.29 L1620.77 1384.00 L1621.27 1383.69 L1621.76 1383.37 L1622.25 1383.04 L1622.74 1382.70 L1623.24 1382.34 L1623.73 1381.97 L1624.22 1381.57 L1624.72 1381.16 L1625.21 1380.74 L1625.70 1380.29 L1626.19 1379.82 L1626.69 1379.32 L1627.18 1378.80 L1627.67 1378.25 L1628.17 1377.68 L1628.66 1377.07 L1629.15 1376.42 L1629.64 1375.74 L1630.14 1375.02 L1630.63 1374.25 L1631.12 1373.43 L1631.62 1372.55 L1632.11 1371.62 L1632.60 1370.61 L1633.09 1369.54 L1633.59 1368.38 L1634.08 1367.12 L1634.57 1365.76 L1635.06 1364.28 L1635.56 1362.66 L1636.05 1360.89 L1636.54 1358.94 L1637.04 1356.79 L1637.53 1354.39 L1638.02 1351.70 L1638.51 1348.68 L1639.01 1345.24 L1639.50 1341.31' stroke='#00ff00' stroke-width='1' fill='none' shape-rendering='crispEdges'/>
<path d='M1639.50 1106.96 L1640.50 1106.96' stroke='#00ff00' stroke-width='1' fill='none' shape-rendering='crispEdges'/>
<path d='M1640.50 839.10 L1641.00 833.61 L1641.50 828.89 L1642.00 824.92 L1642.50 821.71 L1643.00 819.25 L1643.50 817.56 L1644.00 816.62 L1644.50 816.44 L1645.00 816.64 L1645.50 816.84 L1646.00 817.04 L1646.50 817.25 L1647.00 817.45 L1647.50 817.65 L1648.00 817.85 L1648.50 818.05 L1649.00 818.25 L1649.50 818.46 L1650.00 818.66 L1650.50 818.86 L1651.00 819.07 L1651.50 819.27 L1652.00 819.47 L1652.50 819.68 L1653.00 819.88 L1653.50 820.09 L1654.00 820.30 L1654.50 820.50 L1655.00 820.71 L1655.50 820.92 L1656.00 821.12 L1656.50 821.33 L1657.00 821.54 L1657.50 821.75 L1658.00 821.96 L1658.50 822.17 L1659.00 822.38 L1659.50 822.59 L1660.00 822.80 L1660.50 823.02 L1661.00 823.23 L1661.50 823.44 L1662.00 823.66 L1662.50 823.87 L1663.00 824.09 L1663.50 824.30 L1664.00 824.52 L1664.50 824.74 L1665.00 824.96 L1665.50 825.17 L1666.00 825.39 L1666.50 825.61 L1667.00 825.84 L1667.50 826.06 L1668.00 826.28 L1668.50 826.50 L1669.00 826.73 L1669.50 826.95 L1670.00 827.18 L1670.50 827.41 L1671.00 827.64 L1671.50 827.87 L1672.00 828.10 L1672.50 828.33 L1673.00 828.56 L1673.50 828.79 L1674.00 829.03 L1674.50 829.26 L1675.00 829.50 L1675.50 829.74 L1676.00 829.98 L1676.50 830.22 L1677.00 830.46 L1677.50 830.70 L1678.00 830.95 L1678.50 831.19 L1679.00 831.44 L1679.50 831.69 L1680.00 831.94 L1680.50 832.19 L1681.00 832.44 L1681.50 832.70 L1682.00 832.95 L1682.50 833.21 L1683.00 833.47 L1683.50 833.74 L1684.00 834.00 L1684.50 834.26 L1685.00 834.53 L1685.50 834.80 L1686.00 835.07 L1686.50 835.35 L1687.00 835.62 L1687.50 835.90 L1688.00 836.18 L1688.50 836.46 L1689.00 836.75 L1689.50 837.03 L1690.00 837.32 L1690.50 837.62 L1691.00 837.91 L1691.50 838.21 L1692.00 838.51 L1692.50 838.81 L1693.00 839.12 L1693.50 839.43 L1694.00 839.74 L1694.50 840.05 L1695.00 840.37 L1695.50 840.69 L1696.00 841.02 L1696.50 841.35 L1697.00 841.68 L1697.50 842.01 L1698.00 842.35 L1698.50 842.70 L1699.00 843.04 L1699.50 843.39 L1700.00 843.75 L1700.50 844.11 L1701.00 844.47 L1701.50 844.84 L1702.00 845.21 L1702.50 845.59 L1703.00 845.97 L1703.50 846.35 L1704.00 846.75 L1704.50 847.14 L1705.00 847.54 L1705.50 847.95 L1706.00 848.36 L1706.50 848.78 L1707.00 849.21 L1707.50 849.64 L1708.00 850.07 L1708.50 850.51 L1709.00 850.96 L1709.50 851.42 L1710.00 851.88 L1710.50 852.35 L1711.00 852.83 L1711.50 853.31 L1712.00 853.80 L1712.50 854.30 L1713.00 854.80 L1713.50 855.32 L1714.00 855.84 L1714.50 856.37 L1715.00 856.91 L1715.50 857.46 L1716.00 858.02 L1716.50 858.58 L1717.00 859.16 L1717.50 859.75 L1718.00 860.34 L1718.50 860.95 L1719.00 861.57 L1719.50 862.19 L1720.00 862.83 L1720.50 863.48 L1721.00 864.14 L1721.50 864.82 L1722.00 865.50 L1722.50 866.20' stroke='#00ff00' stroke-width='1' fill='none' shape-rendering='crispEdges'/>
<path d='M1722.50 1388.13 L1723.50 1394.60 L1723.99 1394.57 L1724.49 1394.54 L1724.98 1394.51 L1725.47 1394.48 L1725.97 1394.44 L1726.46 1394.41 L1726.95 1394.38 L1727.45 1394.35 L1727.94 1394.31 L1728.43 1394.28 L1728.93 1394.25 L1729.42 1394.21 L1729.91 1394.18 L1730.41 1394.14 L1730.90 1394.11 L1731.39 1394.07 L1731.89 1394.03 L1732.38 1393.99 L1732.87 1393.96 L1733.37 1393.92 L1733.86 1393.88 L1734.35 1393.84 L1734.85 1393.80 L1735.34 1393.76 L1735.83 1393.72 L1736.33 1393.67 L1736.82 1393.63 L1737.31 1393.59 L1737.81 1393.55 L1738.30 1393.50 L1738.79 1393.46 L1739.29 1393.41 L1739.78 1393.36 L1740.27 1393.32 L1740.77 1393.27 L1741.26 1393.22 L1741.75 1393.17 L1742.25 1393.12 L1742.74 1393.07 L1743.23 1393.02 L1743.73 1392.96 L1744.22 1392.91 L1744.71 1392.86 L1745.21 1392.80 L1745.70 1392.74 L1746.19 1392.69 L1746.69 1392.63 L1747.18 1392.57 L1747.67 1392.51 L1748.17 1392.45 L1748.66 1392.38 L1749.15 1392.32 L1749.65 1392.26 L1750.14 1392.19 L1750.63 1392.12 L1751.13 1392.05 L1751.62 1391.98 L1752.11 1391.91 L1752.61 1391.84 L1753.10 1391.77 L1753.59 1391.69 L1754.09 1391.62 L1754.58 1391.54 L1755.07 1391.46 L1755.57 1391.38 L1756.06 1391.29 L1756.55 1391.21 L1757.05 1391.12 L1757.54 1391.03 L1758.03 1390.94 L1758.53 1390.85 L1759.02 1390.76 L1759.51 1390.66 L1760.01 1390.56 L1760.50 1390.46 L1760.99 1390.36 L1761.49 1390.25 L1761.98 1390.15 L1762.47 1390.04 L1762.97 1389.92 L1763.46 1389.81 L1763.95 1389.69 L1764.45 1389.57 L1764.94 1389.44 L1765.43 1389.32 L1765.93 1389.18 L1766.42 1389.05 L1766.91 1388.91 L1767.41 1388.77 L1767.90 1388.63 L1768.39 1388.48 L1768.89 1388.32 L1769.38 1388.17 L1769.87 1388.00 L1770.37 1387.84 L1770.86 1387.66 L1771.35 1387.49 L1771.85 1387.30 L1772.34 1387.12 L1772.83 1386.92 L1773.33 1386.72 L1773.82 1386.51 L1774.31 1386.30 L1774.81 1386.08 L1775.30 1385.85 L1775.79 1385.62 L1776.29 1385.37 L1776.78 1385.12 L1777.27 1384.86 L1777.77 1384.58 L1778.26 1384.30 L1778.75 1384.01 L1779.25 1383.70 L1779.74 1383.39 L1780.23 1383.06 L1780.73 1382.71 L1781.22 1382.35 L1781.71 1381.98 L1782.21 1381.59 L1782.70 1381.18 L1783.19 1380.75 L1783.69 1380.30 L1784.18 1379.83 L1784.67 1379.34 L1785.17 1378.82 L1785.66 1378.27 L1786.15 1377.69 L1786.65 1377.08 L1787.14 1376.44 L1787.63 1375.76 L1788.13 1375.03 L1788.62 1374.26 L1789.11 1373.44 L1789.61 1372.57 L1790.10 1371.63 L1790.59 1370.63 L1791.09 1369.55 L1791.58 1368.39 L1792.07 1367.14 L1792.57 1365.77 L1793.06 1364.29 L1793.55 1362.68 L1794.05 1360.91 L1794.54 1358.96 L1795.03 1356.80 L1795.53 1354.40 L1796.02 1351.71 L1796.51 1348.68 L1797.01 1345.25 L1797.50 1341.31' stroke='#00ff00' stroke-width='1' fill='none' shape-rendering='crispEdges'/>
<path d='M1797.50 1196.20 L1798.50 1196.20' stroke='#00ff00' stroke-width='1' fill='none' shape-rendering='crispEdges'/>
<path d='M1798.50 828.57 L1799.00 823.08 L1799.50 818.35 L1800.00 814.37 L1800.50 811.16 L1801.00 808.70 L1801.50 806.99 L1802.00 806.05 L1802.50 805.86 L1803.00 806.05 L1803.50 806.25 L1804.00 806.44 L1804.50 806.63 L1805.00 806.82 L1805.50 807.01 L1806.00 807.21 L1806.50 807.40 L1807.00 807.59 L1807.50 807.78 L1808.00 807.98 L1808.50 808.17 L1809.00 808.36 L1809.50 808.55 L1810.00 808.75 L1810.50 808.94 L1811.00 809.13 L1811.50 809.33 L1812.00 809.52 L1812.50 809.71 L1813.00 809.91 L1813.50 810.10 L1814.00 810.29 L1814.50 810.49 L1815.00 810.68 L1815.50 810.87 L1816.00 811.07 L1816.50 811.26 L1817.00 811.46 L1817.50 811.65 L1818.00 811.85 L1818.50 812.04 L1819.00 812.23 L1819.50 812.43 L1820.00 812.62 L1820.50 812.82 L1821.00 813.02 L1821.50 813.21 L1822.00 813.41 L1822.50 813.60 L1823.00 813.80 L1823.50 813.99 L1824.00 814.19 L1824.50 814.39 L1825.00 814.58 L1825.50 814.78 L1826.00 814.98 L1826.50 815.17 L1827.00 815.37 L1827.50 815.57 L1828.00 815.77 L1828.50 815.97 L1829.00 816.16 L1829.50 816.36 L1830.00 816.56 L1830.50 816.76 L1831.00 816.96 L1831.50 817.16 L1832.00 817.36 L1832.50 817.56 L1833.00 817.76 L1833.50 817.96 L1834.00 818.16 L1834.50 818.36 L1835.00 818.56 L1835.50 818.76 L1836.00 818.96 L1836.50 819.17 L1837.00 819.37 L1837.50 819.57 L1838.00 819.78 L1838.50 819.98 L1839.00 820.18 L1839.50 820.39 L1840.00 820.59 L1840.50 820.80 L1841.00 821.00 L1841.50 821.21 L1842.00 821.41 L1842.50 821.62 L1843.00 821.83 L1843.50 822.04 L1844.00 822.24 L1844.50 822.45 L1845.00 822.66 L1845.50 822.87 L1846.00 823.08 L1846.50 823.29 L1847.00 823.50 L1847.50 823.71 L1848.00 823.93 L1848.50 824.14 L1849.00 824.35 L1849.50 824.57 L1850.00 824.78 L1850.50 825.00 L1851.00 825.21 L1851.50 825.43 L1852.00 825.65 L1852.50 825.86 L1853.00 826.08 L1853.50 826.30 L1854.00 826.52 L1854.50 826.74 L1855.00 826.97 L1855.50 827.19 L1856.00 827.41 L1856.50 827.64 L1857.00 827.86 L1857.50 828.09 L1858.00 828.31 L1858.50 828.54 L1859.00 828.77 L1859.50 829.00 L1860.00 829.23 L1860.50 829.46 L1861.00 829.70 L1861.50 829.93 L1862.00 830.17 L1862.50 830.40 L1863.00 830.64 L1863.50 830.88 L1864.00 831.12 L1864.50 831.36 L1865.00 831.60 L1865.50 831.85 L1866.00 832.09 L1866.50 832.34 L1867.00 832.59 L1867.50 832.84 L1868.00 833.09 L1868.50 833.34 L1869.00 833.60 L1869.50 833.85 L1870.00 834.11 L1870.50 834.37 L1871.00 834.63 L1871.50 834.90 L1872.00 835.16 L1872.50 835.43 L1873.00 835.70 L1873.50 835.97 L1874.00 836.24 L1874.50 836.52 L1875.00 836.79 L1875.50 837.07 L1876.00 837.36 L1876.50 837.64 L1877.00 837.93 L1877.50 838.21 L1878.00 838.51 L1878.50 838.80 L1879.00 839.10 L1879.50 839.40 L1880.00 839.70 L1880.50 840.00 L1881.00 840.31 L1881.50 840.62 L1882.00 840.94 L1882.50 841.26 L1883.00 841.58 L1883.50 841.90 L1884.00 842.23 L1884.50 842.56 L1885.00 842.89 L1885.50 843.23 L1886.00 843.57 L1886.50 843.92 L1887.00 844.27 L1887.50 844.62 L1888.00 844.98 L1888.50 845.34 L1889.00 845.71 L1889.50 846.08 L1890.00 846.45 L1890.50 846.83 L1891.00 847.22 L1891.50 847.61 L1892.00 848.01 L1892.50 848.41 L1893.00 848.81 L1893.50 849.22 L1894.00 849.64 L1894.50 850.06 L1895.00 850.49 L1895.50 850.92 L1896.00 851.37 L1896.50 851.81 L1897.00 852.27 L1897.50 852.73 L1898.00 853.19 L1898.50 853.67 L1899.00 854.15 L1899.50 854.64 L1900.00 855.13 L1900.50 855.64 L1901.00 856.15 L1901.50 856.67 L1902.00 857.20 L1902.50 857.74 L1903.00 858.28 L1903.50 858.84 L1904.00 859.40 L1904.50 859.98 L1905.00 860.56 L1905.50 861.15' stroke='#00ff00' stroke-width='1' fill='none' shape-rendering='crispEdges'/>
<path d='M1905.50 1388.13 L1906.50 1395.68 L1906.99 1395.67 L1907.49 1395.65 L1907.98 1395.63 L1908.48 1395.61 L1908.97 1395.59 L1909.47 1395.57 L1909.96 1395.55 L1910.46 1395.53 L1910.95 1395.51 L1911.45 1395.49 L1911.94 1395.47 L1912.44 1395.45 L1912.93 1395.43 L1913.43 1395.41 L1913.92 1395.39 L1914.42 1395.37 L1914.91 1395.35 L1915.41 1395.33 L1915.90 1395.30 L1916.40 1395.28 L1916.89 1395.26 L1917.39 1395.24 L1917.88 1395.21 L1918.38 1395.19 L1918.87 1395.17 L1919.37 1395.14 L1919.86 1395.12 L1920.36 1395.10 L1920.85 1395.07 L1921.35 1395.05 L1921.84 1395.02 L1922.34 1395.00 L1922.83 1394.97 L1923.33 1394.95 L1923.82 1394.92 L1924.32 1394.89 L1924.81 1394.87 L1925.31 1394.84 L1925.80 1394.81 L1926.30 1394.79 L1926.79 1394.76 L1927.29 1394.73 L1927.78 1394.70 L1928.28 1394.67 L1928.77 1394.64 L1929.27 1394.61 L1929.76 1394.58 L1930.26 1394.55 L1930.75 1394.52 L1931.24 1394.49 L1931.74 1394.46 L1932.23 1394.43 L1932.73 1394.39 L1933.22 1394.36 L1933.72 1394.33 L1934.21 1394.30 L1934.71 1394.26 L1935.20 1394.23 L1935.70 1394.19 L1936.19 1394.16 L1936.69 1394.12 L1937.18 1394.08 L1937.68 1394.05 L1938.17 1394.01 L1938.67 1393.97 L1939.16 1393.93 L1939.66 1393.89 L1940.15 1393.86 L1940.65 1393.82 L1941.14 1393.77 L1941.64 1393.73 L1942.13 1393.69 L1942.63 1393.65 L1943.12 1393.61 L1943.62 1393.56 L1944.11 1393.52 L1944.61 1393.47 L1945.10 1393.43 L1945.60 1393.38 L1946.09 1393.33 L1946.59 1393.29 L1947.08 1393.24 L1947.58 1393.19 L1948.07 1393.14 L1948.57 1393.09 L1949.06 1393.03 L1949.56 1392.98 L1950.05 1392.93 L1950.55 1392.87 L1951.04 1392.82 L1951.54 1392.76 L1952.03 1392.71 L1952.53 1392.65 L1953.02 1392.59 L1953.52 1392.53 L1954.01 1392.47 L1954.51 1392.40 L1955.00 1392.34 L1955.49 1392.28 L1955.99 1392.21 L1956.48 1392.14 L1956.98 1392.08 L1957.47 1392.01 L1957.97 1391.93 L1958.46 1391.86 L1958.96 1391.79 L1959.45 1391.71 L1959.95 1391.64 L1960.44 1391.56 L1960.94 1391.48 L1961.43 1391.40 L1961.93 1391.32 L1962.42 1391.23 L1962.92 1391.15 L1963.41 1391.06 L1963.91 1390.97 L1964.40 1390.87 L1964.90 1390.78 L1965.39 1390.68 L1965.89 1390.59 L1966.38 1390.49 L1966.88 1390.38 L1967.37 1390.28 L1967.87 1390.17 L1968.36 1390.06 L1968.86 1389.95 L1969.35 1389.83 L1969.85 1389.71 L1970.34 1389.59 L1970.84 1389.47 L1971.33 1389.34 L1971.83 1389.21 L1972.32 1389.08 L1972.82 1388.94 L1973.31 1388.80 L1973.81 1388.65 L1974.30 1388.50 L1974.80 1388.35 L1975.29 1388.19 L1975.79 1388.03 L1976.28 1387.87 L1976.78 1387.69 L1977.27 1387.52 L1977.77 1387.33 L1978.26 1387.15 L1978.76 1386.95 L1979.25 1386.75 L1979.74 1386.55 L1980.24 1386.33 L1980.73 1386.11 L1981.23 1385.89 L1981.72 1385.65 L1982.22 1385.41 L1982.71 1385.15 L1983.21 1384.89 L1983.70 1384.62 L1984.20 1384.34 L1984.69 1384.04 L1985.19 1383.74 L1985.68 1383.42 L1986.18 1383.09 L1986.67 1382.75 L1987.17 1382.39 L1987.66 1382.02 L1988.16 1381.63 L1988.65 1381.22 L1989.15 1380.79 L1989.64 1380.34 L1990.14 1379.87 L1990.63 1379.38 L1991.13 1378.86 L1991.62 1378.31 L1992.12 1377.74 L1992.61 1377.13 L1993.11 1376.48 L1993.60 1375.80 L1994.10 1375.08 L1994.59 1374.31 L1995.09 1373.49 L1995.58 1372.61 L1996.08 1371.68 L1996.57 1370.68 L1997.07 1369.60 L1997.56 1368.44 L1998.06 1367.18 L1998.55 1365.82 L1999.05 1364.34 L1999.54 1362.72 L2000.04 1360.95 L2000.53 1359.00 L2001.03 1356.83 L2001.52 1354.43 L2002.02 1351.74 L2002.51 1348.70 L2003.01 1345.26 L2003.50 1341.31' stroke='#00ff00' stroke-width='1' fill='none' shape-rendering='crispEdges'/>
<path d='M2003.50 1243.34 L2004.50 1243.34' stroke='#00ff00' stroke-width='1' fill='none' shape-rendering='crispEdges'/>
<path d='M2004.50 821.84 L2005.00 816.35 L2005.50 811.62 L2006.00 807.65 L2006.50 804.44 L2007.00 801.98 L2007.50 800.28 L2008.00 799.34 L2008.50 799.16 L2009.00 799.35 L2009.50 799.55 L2010.00 799.74 L2010.50 799.94 L2011.00 800.14 L2011.50 800.33 L2012.00 800.53 L2012.50 800.72 L2013.00 800.92 L2013.50 801.12 L2014.00 801.32 L2014.50 801.51 L2015.00 801.71 L2015.50 801.91 L2016.00 802.11 L2016.50 802.31 L2017.00 802.51 L2017.50 802.70 L2018.00 802.90 L2018.50 803.10 L2019.00 803.30 L2019.50 803.50 L2020.00 803.70 L2020.50 803.90 L2021.00 804.10 L2021.50 804.30 L2022.00 804.51 L2022.50 804.71 L2023.00 804.91 L2023.50 805.11 L2024.00 805.31 L2024.50 805.52 L2025.00 805.72 L2025.50 805.92 L2026.00 806.13 L2026.50 806.33 L2027.00 806.54 L2027.50 806.74 L2028.00 806.95 L2028.50 807.15 L2029.00 807.36 L2029.50 807.57 L2030.00 807.77 L2030.50 807.98 L2031.00 808.19 L2031.50 808.40 L2032.00 808.61 L2032.50 808.82 L2033.00 809.03 L2033.50 809.24 L2034.00 809.45 L2034.50 809.66 L2035.00 809.87 L2035.50 810.09 L2036.00 810.30 L2036.50 810.51 L2037.00 810.73 L2037.50 810.94 L2038.00 811.16 L2038.50 811.38 L2039.00 811.59 L2039.50 811.81 L2040.00 812.03 L2040.50 812.25 L2041.00 812.47 L2041.50 812.69 L2042.00 812.91 L2042.50 813.13 L2043.00 813.36 L2043.50 813.58 L2044.00 813.81 L2044.50 814.03 L2045.00 814.26 L2045.50 814.49 L2046.00 814.72 L2046.50 814.95 L2047.00 815.18 L2047.50 815.41 L2048.00 815.64 L2048.50 815.88 L2049.00 816.11 L2049.50 816.35 L2050.00 816.59 L2050.50 816.83 L2051.00 817.07 L2051.50 817.31 L2052.00 817.55 L2052.50 817.80 L2053.00 818.04 L2053.50 818.29 L2054.00 818.54 L2054.50 818.79 L2055.00 819.04 L2055.50 819.29 L2056.00 819.55 L2056.50 819.80 L2057.00 820.06 L2057.50 820.32 L2058.00 820.58 L2058.50 820.84 L2059.00 821.11 L2059.50 821.38 L2060.00 821.65 L2060.50 821.92 L2061.00 822.19 L2061.50 822.47 L2062.00 822.74 L2062.50 823.02 L2063.00 823.30 L2063.50 823.59 L2064.00 823.88 L2064.50 824.17 L2065.00 824.46 L2065.50 824.75 L2066.00 825.05 L2066.50 825.35 L2067.00 825.65 L2067.50 825.96 L2068.00 826.26 L2068.50 826.58 L2069.00 826.89 L2069.50 827.21 L2070.00 827.53 L2070.50 827.85 L2071.00 828.18 L2071.50 828.51 L2072.00 828.85 L2072.50 829.18 L2073.00 829.53 L2073.50 829.87 L2074.00 830.22 L2074.50 830.58 L2075.00 830.93 L2075.50 831.30 L2076.00 831.66 L2076.50 832.03 L2077.00 832.41 L2077.50 832.79 L2078.00 833.18 L2078.50 833.57 L2079.00 833.96 L2079.50 834.36 L2080.00 834.77 L2080.50 835.18 L2081.00 835.60 L2081.50 836.02 L2082.00 836.45 L2082.50 836.88 L2083.00 837.32 L2083.50 837.77 L2084.00 838.23 L2084.50 838.69 L2085.00 839.15 L2085.50 839.63 L2086.00 840.11 L2086.50 840.60 L2087.00 841.10 L2087.50 841.60 L2088.00 842.11 L2088.50 842.63 L2089.00 843.16 L2089.50 843.70 L2090.00 844.25 L2090.50 844.80 L2091.00 845.37 L2091.50 845.94 L2092.00 846.53 L2092.50 847.12 L2093.00 847.73 L2093.50 848.34 L2094.00 848.97 L2094.50 849.60 L2095.00 850.25 L2095.50 850.91 L2096.00 851.58 L2096.50 852.27 L2097.00 852.96 L2097.50 853.67 L2098.00 854.39 L2098.50 855.13 L2099.00 855.88 L2099.50 856.64 L2100.00 857.42 L2100.50 858.21 L2101.00 859.02 L2101.50 859.85 L2102.00 860.69 L2102.50 861.54 L2103.00 862.42' stroke='#00ff00' stroke-width='1' fill='none' shape-rendering='crispEdges'/>
<path d='M2103.00 1388.13 L2104.00 1394.80 L2104.49 1394.77 L2104.99 1394.75 L2105.48 1394.72 L2105.97 1394.69 L2106.47 1394.66 L2106.96 1394.63 L2107.46 1394.60 L2107.95 1394.57 L2108.44 1394.54 L2108.94 1394.51 L2109.43 1394.48 L2109.92 1394.45 L2110.42 1394.42 L2110.91 1394.38 L2111.40 1394.35 L2111.90 1394.32 L2112.39 1394.28 L2112.89 1394.25 L2113.38 1394.21 L2113.87 1394.18 L2114.37 1394.14 L2114.86 1394.11 L2115.35 1394.07 L2115.85 1394.03 L2116.34 1394.00 L2116.83 1393.96 L2117.33 1393.92 L2117.82 1393.88 L2118.32 1393.84 L2118.81 1393.80 L2119.30 1393.76 L2119.80 1393.72 L2120.29 1393.68 L2120.78 1393.64 L2121.28 1393.59 L2121.77 1393.55 L2122.26 1393.50 L2122.76 1393.46 L2123.25 1393.41 L2123.75 1393.37 L2124.24 1393.32 L2124.73 1393.27 L2125.23 1393.22 L2125.72 1393.17 L2126.21 1393.12 L2126.71 1393.07 L2127.20 1393.02 L2127.69 1392.97 L2128.19 1392.91 L2128.68 1392.86 L2129.18 1392.80 L2129.67 1392.75 L2130.16 1392.69 L2130.66 1392.63 L2131.15 1392.57 L2131.64 1392.51 L2132.14 1392.45 L2132.63 1392.39 L2133.12 1392.32 L2133.62 1392.26 L2134.11 1392.19 L2134.61 1392.13 L2135.10 1392.06 L2135.59 1391.99 L2136.09 1391.92 L2136.58 1391.85 L2137.07 1391.77 L2137.57 1391.70 L2138.06 1391.62 L2138.55 1391.54 L2139.05 1391.46 L2139.54 1391.38 L2140.04 1391.30 L2140.53 1391.21 L2141.02 1391.13 L2141.52 1391.04 L2142.01 1390.95 L2142.50 1390.86 L2143.00 1390.76 L2143.49 1390.67 L2143.98 1390.57 L2144.48 1390.47 L2144.97 1390.36 L2145.46 1390.26 L2145.96 1390.15 L2146.45 1390.04 L2146.95 1389.93 L2147.44 1389.81 L2147.93 1389.69 L2148.43 1389.57 L2148.92 1389.45 L2149.41 1389.32 L2149.91 1389.19 L2150.40 1389.06 L2150.89 1388.92 L2151.39 1388.78 L2151.88 1388.63 L2152.38 1388.48 L2152.87 1388.33 L2153.36 1388.17 L2153.86 1388.01 L2154.35 1387.84 L2154.84 1387.67' stroke='#00ff00' stroke-width='1' fill='none' shape-rendering='crispEdges'/>
<rect x='1195' y='1056' width='1' height='286' fill='#0000ff'/>
<rect x='1196' y='836' width='1' height='221' fill='#0000ff'/>
<rect x='1298' y='846' width='1' height='543' fill='#0000ff'/>
<rect x='1399' y='892' width='1' height='450' fill='#0000ff'/>
<rect x='1400' y='838' width='1' height='55' fill='#0000ff'/>
<rect x='1497' y='855' width='1' height='534' fill='#0000ff'/>
<rect x='1568' y='1226' width='1' height='116' fill='#0000ff'/>
<rect x='1569' y='847' width='1' height='380' fill='#0000ff'/>
<rect x='1640' y='857' width='1' height='532' fill='#0000ff'/>
<rect x='1721' y='1067' width='1' height='275' fill='#0000ff'/>
<rect x='1722' y='846' width='1' height='222' fill='#0000ff'/>
<rect x='1798' y='851' width='1' height='538' fill='#0000ff'/>
<rect x='1904' y='1122' width='1' height='220' fill='#0000ff'/>
<rect x='1905' y='836' width='1' height='287' fill='#0000ff'/>
<rect x='2004' y='847' width='1' height='542' fill='#0000ff'/>
<rect x='2101' y='1080' width='1' height='262' fill='#0000ff'/>
<rect x='2102' y='839' width='1' height='242' fill='#0000ff'/>
<path d='M1153.41 1391.40 L1153.91 1391.32 L1154.40 1391.23 L1154.90 1391.15 L1155.39 1391.06 L1155.89 1390.97 L1156.38 1390.88 L1156.88 1390.78 L1157.37 1390.69 L1157.87 1390.59 L1158.36 1390.49 L1158.86 1390.39 L1159.35 1390.28 L1159.85 1390.18 L1160.34 1390.07 L1160.84 1389.95 L1161.33 1389.84 L1161.83 1389.72 L1162.33 1389.60 L1162.82 1389.47 L1163.32 1389.35 L1163.81 1389.22 L1164.31 1389.08 L1164.80 1388.94 L1165.30 1388.80 L1165.79 1388.66 L1166.29 1388.51 L1166.78 1388.36 L1167.28 1388.20 L1167.77 1388.04 L1168.27 1387.87 L1168.76 1387.70 L1169.26 1387.52 L1169.75 1387.34 L1170.25 1387.15 L1170.74 1386.96 L1171.24 1386.76 L1171.73 1386.55 L1172.23 1386.34 L1172.72 1386.12 L1173.22 1385.89 L1173.71 1385.65 L1174.21 1385.41 L1174.70 1385.16 L1175.20 1384.90 L1175.69 1384.62 L1176.19 1384.34 L1176.68 1384.05 L1177.18 1383.75 L1177.67 1383.43 L1178.17 1383.10 L1178.67 1382.76 L1179.16 1382.40 L1179.66 1382.02 L1180.15 1381.63 L1180.65 1381.22 L1181.14 1380.80 L1181.64 1380.35 L1182.13 1379.88 L1182.63 1379.38 L1183.12 1378.87 L1183.62 1378.32 L1184.11 1377.74 L1184.61 1377.13 L1185.10 1376.49 L1185.60 1375.81 L1186.09 1375.08 L1186.59 1374.31 L1187.08 1373.50 L1187.58 1372.62 L1188.07 1371.69 L1188.57 1370.68 L1189.06 1369.61 L1189.56 1368.44 L1190.05 1367.19 L1190.55 1365.83 L1191.04 1364.35 L1191.54 1362.73 L1192.03 1360.96 L1192.53 1359.00 L1193.02 1356.84 L1193.52 1354.44 L1194.01 1351.74 L1194.51 1348.71 L1195.00 1345.26 L1195.50 1341.31' stroke='#0000ff' stroke-width='1' fill='none' shape-rendering='crispEdges'/>
<path d='M1195.50 1056.45 L1196.50 1056.45' stroke='#0000ff' stroke-width='1' fill='none' shape-rendering='crispEdges'/>
<path d='M1196.50 836.07 L1197.00 830.54 L1197.50 825.76 L1198.00 821.75 L1198.50 818.49 L1199.00 815.99 L1199.50 814.25 L1200.00 813.26 L1200.50 813.03 L1201.00 813.19 L1201.50 813.34 L1202.00 813.49 L1202.50 813.64 L1203.00 813.79 L1203.50 813.94 L1204.00 814.10 L1204.50 814.25 L1205.00 814.40 L1205.50 814.55 L1206.00 814.70 L1206.50 814.85 L1207.00 815.01 L1207.50 815.16 L1208.00 815.31 L1208.50 815.46 L1209.00 815.61 L1209.50 815.76 L1210.00 815.91 L1210.50 816.07 L1211.00 816.22 L1211.50 816.37 L1212.00 816.52 L1212.50 816.67 L1213.00 816.82 L1213.50 816.98 L1214.00 817.13 L1214.50 817.28 L1215.00 817.43 L1215.50 817.58 L1216.00 817.73 L1216.50 817.89 L1217.00 818.04 L1217.50 818.19 L1218.00 818.34 L1218.50 818.49 L1219.00 818.64 L1219.50 818.80 L1220.00 818.95 L1220.50 819.10 L1221.00 819.25 L1221.50 819.40 L1222.00 819.56 L1222.50 819.71 L1223.00 819.86 L1223.50 820.01 L1224.00 820.16 L1224.50 820.31 L1225.00 820.47 L1225.50 820.62 L1226.00 820.77 L1226.50 820.92 L1227.00 821.07 L1227.50 821.23 L1228.00 821.38 L1228.50 821.53 L1229.00 821.68 L1229.50 821.83 L1230.00 821.99 L1230.50 822.14 L1231.00 822.29 L1231.50 822.44 L1232.00 822.59 L1232.50 822.75 L1233.00 822.90 L1233.50 823.05 L1234.00 823.20 L1234.50 823.35 L1235.00 823.51 L1235.50 823.66 L1236.00 823.81 L1236.50 823.96 L1237.00 824.12 L1237.50 824.27 L1238.00 824.42 L1238.50 824.57 L1239.00 824.73 L1239.50 824.88 L1240.00 825.03 L1240.50 825.18 L1241.00 825.34 L1241.50 825.49 L1242.00 825.64 L1242.50 825.80 L1243.00 825.95 L1243.50 826.10 L1244.00 826.25 L1244.50 826.41 L1245.00 826.56 L1245.50 826.71 L1246.00 826.87 L1246.50 827.02 L1247.00 827.17 L1247.50 827.33 L1248.00 827.48 L1248.50 827.64 L1249.00 827.79 L1249.50 827.94 L1250.00 828.10 L1250.50 828.25 L1251.00 828.41 L1251.50 828.56 L1252.00 828.71 L1252.50 828.87 L1253.00 829.02 L1253.50 829.18 L1254.00 829.33 L1254.50 829.49 L1255.00 829.64 L1255.50 829.80 L1256.00 829.96 L1256.50 830.11 L1257.00 830.27 L1257.50 830.42 L1258.00 830.58 L1258.50 830.74 L1259.00 830.89 L1259.50 831.05 L1260.00 831.21 L1260.50 831.37 L1261.00 831.52 L1261.50 831.68 L1262.00 831.84 L1262.50 832.00 L1263.00 832.16 L1263.50 832.32 L1264.00 832.48 L1264.50 832.64 L1265.00 832.80 L1265.50 832.96 L1266.00 833.12 L1266.50 833.28 L1267.00 833.44 L1267.50 833.61 L1268.00 833.77 L1268.50 833.93 L1269.00 834.10 L1269.50 834.26 L1270.00 834.43 L1270.50 834.59 L1271.00 834.76 L1271.50 834.93 L1272.00 835.09 L1272.50 835.26 L1273.00 835.43 L1273.50 835.60 L1274.00 835.77 L1274.50 835.94 L1275.00 836.11 L1275.50 836.29 L1276.00 836.46 L1276.50 836.63 L1277.00 836.81 L1277.50 836.99 L1278.00 837.16 L1278.50 837.34 L1279.00 837.52 L1279.50 837.70 L1280.00 837.89 L1280.50 838.07 L1281.00 838.26 L1281.50 838.44 L1282.00 838.63 L1282.50 838.82 L1283.00 839.01 L1283.50 839.21 L1284.00 839.40 L1284.50 839.60 L1285.00 839.80 L1285.50 840.00 L1286.00 840.20 L1286.50 840.40 L1287.00 840.61 L1287.50 840.82 L1288.00 841.03 L1288.50 841.25 L1289.00 841.46 L1289.50 841.68 L1290.00 841.91 L1290.50 842.13 L1291.00 842.36 L1291.50 842.59 L1292.00 842.83 L1292.50 843.07 L1293.00 843.31 L1293.50 843.56 L1294.00 843.81 L1294.50 844.07 L1295.00 844.33 L1295.50 844.59 L1296.00 844.86 L1296.50 845.13 L1297.00 845.41 L1297.50 845.70 L1298.00 845.99 L1298.50 846.29 L1299.00 846.59' stroke='#0000ff' stroke-width='1' fill='none' shape-rendering='crispEdges'/>
<path d='M1299.00 1388.13 L1300.00 1395.77 L1300.50 1395.76 L1300.99 1395.74 L1301.49 1395.72 L1301.98 1395.70 L1302.48 1395.68 L1302.97 1395.67 L1303.47 1395.65 L1303.96 1395.63 L1304.46 1395.61 L1304.95 1395.59 L1305.45 1395.57 L1305.94 1395.55 L1306.44 1395.53 L1306.93 1395.51 L1307.43 1395.49 L1307.92 1395.47 L1308.42 1395.45 L1308.91 1395.43 L1309.41 1395.41 L1309.90 1395.39 L1310.40 1395.37 L1310.89 1395.35 L1311.39 1395.33 L1311.88 1395.31 L1312.38 1395.28 L1312.87 1395.26 L1313.37 1395.24 L1313.86 1395.22 L1314.36 1395.19 L1314.85 1395.17 L1315.35 1395.15 L1315.84 1395.12 L1316.34 1395.10 L1316.83 1395.07 L1317.33 1395.05 L1317.82 1395.02 L1318.32 1395.00 L1318.81 1394.97 L1319.31 1394.95 L1319.80 1394.92 L1320.30 1394.90 L1320.79 1394.87 L1321.29 1394.84 L1321.78 1394.81 L1322.28 1394.79 L1322.77 1394.76 L1323.27 1394.73 L1323.76 1394.70 L1324.26 1394.67 L1324.75 1394.64 L1325.25 1394.61 L1325.74 1394.58 L1326.24 1394.55 L1326.73 1394.52 L1327.23 1394.49 L1327.72 1394.46 L1328.22 1394.43 L1328.71 1394.40 L1329.21 1394.36 L1329.70 1394.33 L1330.20 1394.30 L1330.69 1394.26 L1331.19 1394.23 L1331.68 1394.19 L1332.18 1394.16 L1332.67 1394.12 L1333.17 1394.09 L1333.66 1394.05 L1334.16 1394.01 L1334.65 1393.97 L1335.15 1393.93 L1335.64 1393.90 L1336.14 1393.86 L1336.63 1393.82 L1337.13 1393.78 L1337.62 1393.73 L1338.12 1393.69 L1338.61 1393.65 L1339.11 1393.61 L1339.60 1393.56 L1340.10 1393.52 L1340.59 1393.47 L1341.09 1393.43 L1341.58 1393.38 L1342.08 1393.33 L1342.57 1393.29 L1343.07 1393.24 L1343.56 1393.19 L1344.06 1393.14 L1344.55 1393.09 L1345.05 1393.04 L1345.54 1392.98 L1346.04 1392.93 L1346.53 1392.88 L1347.03 1392.82 L1347.52 1392.76 L1348.02 1392.71 L1348.51 1392.65 L1349.01 1392.59 L1349.50 1392.53 L1350.00 1392.47 L1350.49 1392.41 L1350.99 1392.34 L1351.48 1392.28 L1351.98 1392.21 L1352.47 1392.15 L1352.97 1392.08 L1353.46 1392.01 L1353.96 1391.94 L1354.45 1391.86 L1354.95 1391.79 L1355.44 1391.72 L1355.94 1391.64 L1356.43 1391.56 L1356.93 1391.48 L1357.42 1391.40 L1357.92 1391.32 L1358.41 1391.23 L1358.91 1391.15 L1359.40 1391.06 L1359.90 1390.97 L1360.39 1390.88 L1360.89 1390.78 L1361.38 1390.69 L1361.88 1390.59 L1362.37 1390.49 L1362.87 1390.39 L1363.36 1390.28 L1363.86 1390.17 L1364.35 1390.06 L1364.85 1389.95 L1365.34 1389.84 L1365.84 1389.72 L1366.33 1389.60 L1366.83 1389.47 L1367.32 1389.34 L1367.82 1389.21 L1368.31 1389.08 L1368.81 1388.94 L1369.30 1388.80 L1369.80 1388.66 L1370.29 1388.51 L1370.79 1388.35 L1371.28 1388.20 L1371.78 1388.03 L1372.27 1387.87 L1372.77 1387.70 L1373.26 1387.52 L1373.76 1387.34 L1374.25 1387.15 L1374.75 1386.96 L1375.24 1386.76 L1375.74 1386.55 L1376.23 1386.34 L1376.73 1386.12 L1377.22 1385.89 L1377.72 1385.65 L1378.21 1385.41 L1378.71 1385.16 L1379.20 1384.89 L1379.70 1384.62 L1380.19 1384.34 L1380.69 1384.05 L1381.18 1383.74 L1381.68 1383.43 L1382.17 1383.10 L1382.67 1382.75 L1383.16 1382.39 L1383.66 1382.02 L1384.15 1381.63 L1384.65 1381.22 L1385.14 1380.79 L1385.64 1380.35 L1386.13 1379.88 L1386.63 1379.38 L1387.12 1378.86 L1387.62 1378.32 L1388.11 1377.74 L1388.61 1377.13 L1389.10 1376.49 L1389.60 1375.80 L1390.09 1375.08 L1390.59 1374.31 L1391.08 1373.49 L1391.58 1372.62 L1392.07 1371.68 L1392.57 1370.68 L1393.06 1369.60 L1393.56 1368.44 L1394.05 1367.18 L1394.55 1365.82 L1395.04 1364.34 L1395.54 1362.73 L1396.03 1360.95 L1396.53 1359.00 L1397.02 1356.84 L1397.52 1354.43 L1398.01 1351.74 L1398.51 1348.71 L1399.00 1345.26 L1399.50 1341.31' stroke='#0000ff' stroke-width='1' fill='none' shape-rendering='crispEdges'/>
<path d='M1399.50 892.30 L1400.50 892.30' stroke='#0000ff' stroke-width='1' fill='none' shape-rendering='crispEdges'/>
<path d='M1400.50 838.26 L1401.00 832.72 L1401.50 827.95 L1402.00 823.94 L1402.50 820.68 L1403.00 818.18 L1403.50 816.44 L1404.00 815.45 L1404.50 815.22 L1405.00 815.38 L1405.50 815.53 L1406.00 815.68 L1406.50 815.83 L1407.00 815.98 L1407.50 816.14 L1408.00 816.29 L1408.50 816.44 L1409.00 816.59 L1409.50 816.74 L1410.00 816.89 L1410.50 817.05 L1411.00 817.20 L1411.50 817.35 L1412.00 817.50 L1412.50 817.65 L1413.00 817.81 L1413.50 817.96 L1414.00 818.11 L1414.50 818.26 L1415.00 818.41 L1415.50 818.57 L1416.00 818.72 L1416.50 818.87 L1417.00 819.02 L1417.50 819.17 L1418.00 819.33 L1418.50 819.48 L1419.00 819.63 L1419.50 819.78 L1420.00 819.94 L1420.50 820.09 L1421.00 820.24 L1421.50 820.39 L1422.00 820.54 L1422.50 820.70 L1423.00 820.85 L1423.50 821.00 L1424.00 821.15 L1424.50 821.31 L1425.00 821.46 L1425.50 821.61 L1426.00 821.77 L1426.50 821.92 L1427.00 822.07 L1427.50 822.22 L1428.00 822.38 L1428.50 822.53 L1429.00 822.68 L1429.50 822.84 L1430.00 822.99 L1430.50 823.14 L1431.00 823.30 L1431.50 823.45 L1432.00 823.60 L1432.50 823.76 L1433.00 823.91 L1433.50 824.07 L1434.00 824.22 L1434.50 824.37 L1435.00 824.53 L1435.50 824.68 L1436.00 824.84 L1436.50 824.99 L1437.00 825.15 L1437.50 825.30 L1438.00 825.46 L1438.50 825.61 L1439.00 825.77 L1439.50 825.92 L1440.00 826.08 L1440.50 826.23 L1441.00 826.39 L1441.50 826.54 L1442.00 826.70 L1442.50 826.86 L1443.00 827.01 L1443.50 827.17 L1444.00 827.33 L1444.50 827.48 L1445.00 827.64 L1445.50 827.80 L1446.00 827.96 L1446.50 828.12 L1447.00 828.28 L1447.50 828.43 L1448.00 828.59 L1448.50 828.75 L1449.00 828.91 L1449.50 829.07 L1450.00 829.23 L1450.50 829.40 L1451.00 829.56 L1451.50 829.72 L1452.00 829.88 L1452.50 830.04 L1453.00 830.21 L1453.50 830.37 L1454.00 830.54 L1454.50 830.70 L1455.00 830.87 L1455.50 831.03 L1456.00 831.20 L1456.50 831.37 L1457.00 831.54 L1457.50 831.70 L1458.00 831.87 L1458.50 832.04 L1459.00 832.22 L1459.50 832.39 L1460.00 832.56 L1460.50 832.73 L1461.00 832.91 L1461.50 833.08 L1462.00 833.26 L1462.50 833.44 L1463.00 833.62 L1463.50 833.80 L1464.00 833.98 L1464.50 834.16 L1465.00 834.34 L1465.50 834.53 L1466.00 834.72 L1466.50 834.90 L1467.00 835.09 L1467.50 835.29 L1468.00 835.48 L1468.50 835.67 L1469.00 835.87 L1469.50 836.07 L1470.00 836.27 L1470.50 836.47 L1471.00 836.68 L1471.50 836.88 L1472.00 837.09 L1472.50 837.30 L1473.00 837.52 L1473.50 837.73 L1474.00 837.95 L1474.50 838.18 L1475.00 838.40 L1475.50 838.63 L1476.00 838.86 L1476.50 839.10 L1477.00 839.34 L1477.50 839.58 L1478.00 839.83 L1478.50 840.08 L1479.00 840.33 L1479.50 840.59 L1480.00 840.86 L1480.50 841.13 L1481.00 841.40 L1481.50 841.68 L1482.00 841.96 L1482.50 842.25 L1483.00 842.55 L1483.50 842.85 L1484.00 843.16 L1484.50 843.48 L1485.00 843.80 L1485.50 844.13 L1486.00 844.47 L1486.50 844.81 L1487.00 845.16 L1487.50 845.53 L1488.00 845.90 L1488.50 846.28 L1489.00 846.67 L1489.50 847.07 L1490.00 847.48 L1490.50 847.90 L1491.00 848.33 L1491.50 848.78 L1492.00 849.23 L1492.50 849.70 L1493.00 850.19 L1493.50 850.69 L1494.00 851.20 L1494.50 851.73 L1495.00 852.27 L1495.50 852.83 L1496.00 853.41 L1496.50 854.01 L1497.00 854.62 L1497.50 855.26' stroke='#0000ff' stroke-width='1' fill='none' shape-rendering='crispEdges'/>
<path d='M1497.50 1388.13 L1498.50 1394.38 L1498.99 1394.34 L1499.49 1394.31 L1499.98 1394.28 L1500.47 1394.24 L1500.97 1394.21 L1501.46 1394.17 L1501.95 1394.14 L1502.44 1394.10 L1502.94 1394.07 L1503.43 1394.03 L1503.92 1393.99 L1504.42 1393.95 L1504.91 1393.91 L1505.40 1393.88 L1505.90 1393.84 L1506.39 1393.80 L1506.88 1393.75 L1507.37 1393.71 L1507.87 1393.67 L1508.36 1393.63 L1508.85 1393.59 L1509.35 1393.54 L1509.84 1393.50 L1510.33 1393.45 L1510.83 1393.41 L1511.32 1393.36 L1511.81 1393.31 L1512.30 1393.26 L1512.80 1393.22 L1513.29 1393.17 L1513.78 1393.12 L1514.28 1393.06 L1514.77 1393.01 L1515.26 1392.96 L1515.76 1392.91 L1516.25 1392.85 L1516.74 1392.80 L1517.23 1392.74 L1517.73 1392.68 L1518.22 1392.62 L1518.71 1392.56 L1519.21 1392.50 L1519.70 1392.44 L1520.19 1392.38 L1520.69 1392.32 L1521.18 1392.25 L1521.67 1392.19 L1522.16 1392.12 L1522.66 1392.05 L1523.15 1391.98 L1523.64 1391.91 L1524.14 1391.84 L1524.63 1391.76 L1525.12 1391.69 L1525.62 1391.61 L1526.11 1391.53 L1526.60 1391.45 L1527.09 1391.37 L1527.59 1391.29 L1528.08 1391.20 L1528.57 1391.12 L1529.07 1391.03 L1529.56 1390.94 L1530.05 1390.85 L1530.55 1390.75 L1531.04 1390.66 L1531.53 1390.56 L1532.02 1390.46 L1532.52 1390.35 L1533.01 1390.25 L1533.50 1390.14 L1534.00 1390.03 L1534.49 1389.92 L1534.98 1389.80 L1535.48 1389.68 L1535.97 1389.56 L1536.46 1389.44 L1536.95 1389.31 L1537.45 1389.18 L1537.94 1389.04 L1538.43 1388.91 L1538.93 1388.77 L1539.42 1388.62 L1539.91 1388.47 L1540.41 1388.32 L1540.90 1388.16 L1541.39 1388.00 L1541.88 1387.83 L1542.38 1387.66 L1542.87 1387.48 L1543.36 1387.30 L1543.86 1387.11 L1544.35 1386.92 L1544.84 1386.71 L1545.34 1386.51 L1545.83 1386.29 L1546.32 1386.07 L1546.81 1385.85 L1547.31 1385.61 L1547.80 1385.36 L1548.29 1385.11 L1548.79 1384.85 L1549.28 1384.58 L1549.77 1384.29 L1550.27 1384.00 L1550.76 1383.70 L1551.25 1383.38 L1551.74 1383.05 L1552.24 1382.70 L1552.73 1382.34 L1553.22 1381.97 L1553.72 1381.58 L1554.21 1381.17 L1554.70 1380.74 L1555.20 1380.29 L1555.69 1379.82 L1556.18 1379.33 L1556.67 1378.81 L1557.17 1378.26 L1557.66 1377.68 L1558.15 1377.07 L1558.65 1376.43 L1559.14 1375.75 L1559.63 1375.02 L1560.13 1374.25 L1560.62 1373.43 L1561.11 1372.56 L1561.60 1371.62 L1562.10 1370.62 L1562.59 1369.54 L1563.08 1368.38 L1563.58 1367.13 L1564.07 1365.77 L1564.56 1364.29 L1565.06 1362.67 L1565.55 1360.90 L1566.04 1358.95 L1566.53 1356.79 L1567.03 1354.39 L1567.52 1351.71 L1568.01 1348.68 L1568.51 1345.24 L1569.00 1341.31' stroke='#0000ff' stroke-width='1' fill='none' shape-rendering='crispEdges'/>
<path d='M1569.00 1226.50 L1570.00 1226.50' stroke='#0000ff' stroke-width='1' fill='none' shape-rendering='crispEdges'/>
<path d='M1570.00 847.94 L1570.50 842.41 L1571.00 837.64 L1571.50 833.62 L1572.00 830.37 L1572.50 827.87 L1573.00 826.13 L1573.50 825.14 L1574.00 824.92 L1574.50 825.07 L1575.00 825.23 L1575.50 825.38 L1576.00 825.53 L1576.50 825.69 L1577.00 825.84 L1577.50 826.00 L1578.00 826.15 L1578.50 826.30 L1579.00 826.46 L1579.50 826.61 L1580.00 826.77 L1580.50 826.92 L1581.00 827.08 L1581.50 827.23 L1582.00 827.39 L1582.50 827.54 L1583.00 827.70 L1583.50 827.86 L1584.00 828.01 L1584.50 828.17 L1585.00 828.32 L1585.50 828.48 L1586.00 828.64 L1586.50 828.80 L1587.00 828.95 L1587.50 829.11 L1588.00 829.27 L1588.50 829.43 L1589.00 829.58 L1589.50 829.74 L1590.00 829.90 L1590.50 830.06 L1591.00 830.22 L1591.50 830.38 L1592.00 830.54 L1592.50 830.70 L1593.00 830.86 L1593.50 831.03 L1594.00 831.19 L1594.50 831.35 L1595.00 831.51 L1595.50 831.68 L1596.00 831.84 L1596.50 832.01 L1597.00 832.17 L1597.50 832.34 L1598.00 832.50 L1598.50 832.67 L1599.00 832.84 L1599.50 833.00 L1600.00 833.17 L1600.50 833.34 L1601.00 833.51 L1601.50 833.68 L1602.00 833.86 L1602.50 834.03 L1603.00 834.20 L1603.50 834.38 L1604.00 834.55 L1604.50 834.73 L1605.00 834.91 L1605.50 835.09 L1606.00 835.27 L1606.50 835.45 L1607.00 835.63 L1607.50 835.82 L1608.00 836.00 L1608.50 836.19 L1609.00 836.38 L1609.50 836.57 L1610.00 836.76 L1610.50 836.95 L1611.00 837.15 L1611.50 837.34 L1612.00 837.54 L1612.50 837.74 L1613.00 837.94 L1613.50 838.15 L1614.00 838.36 L1614.50 838.57 L1615.00 838.78 L1615.50 838.99 L1616.00 839.21 L1616.50 839.43 L1617.00 839.65 L1617.50 839.88 L1618.00 840.11 L1618.50 840.34 L1619.00 840.58 L1619.50 840.82 L1620.00 841.06 L1620.50 841.31 L1621.00 841.56 L1621.50 841.82 L1622.00 842.08 L1622.50 842.34 L1623.00 842.61 L1623.50 842.88 L1624.00 843.16 L1624.50 843.45 L1625.00 843.74 L1625.50 844.04 L1626.00 844.34 L1626.50 844.65 L1627.00 844.97 L1627.50 845.29 L1628.00 845.62 L1628.50 845.96 L1629.00 846.30 L1629.50 846.66 L1630.00 847.02 L1630.50 847.39 L1631.00 847.77 L1631.50 848.16 L1632.00 848.57 L1632.50 848.98 L1633.00 849.40 L1633.50 849.84 L1634.00 850.28 L1634.50 850.74 L1635.00 851.21 L1635.50 851.70 L1636.00 852.20 L1636.50 852.71 L1637.00 853.24 L1637.50 853.79 L1638.00 854.35 L1638.50 854.93 L1639.00 855.53 L1639.50 856.15 L1640.00 856.79 L1640.50 857.45' stroke='#0000ff' stroke-width='1' fill='none' shape-rendering='crispEdges'/>
<path d='M1640.50 1388.13 L1641.50 1394.94 L1641.99 1394.91 L1642.49 1394.88 L1642.98 1394.86 L1643.48 1394.83 L1643.97 1394.80 L1644.46 1394.78 L1644.96 1394.75 L1645.45 1394.72 L1645.94 1394.69 L1646.44 1394.66 L1646.93 1394.63 L1647.43 1394.60 L1647.92 1394.57 L1648.41 1394.54 L1648.91 1394.51 L1649.40 1394.48 L1649.90 1394.45 L1650.39 1394.42 L1650.88 1394.38 L1651.38 1394.35 L1651.87 1394.32 L1652.36 1394.29 L1652.86 1394.25 L1653.35 1394.22 L1653.85 1394.18 L1654.34 1394.15 L1654.83 1394.11 L1655.33 1394.07 L1655.82 1394.04 L1656.31 1394.00 L1656.81 1393.96 L1657.30 1393.92 L1657.80 1393.88 L1658.29 1393.84 L1658.78 1393.80 L1659.28 1393.76 L1659.77 1393.72 L1660.27 1393.68 L1660.76 1393.64 L1661.25 1393.59 L1661.75 1393.55 L1662.24 1393.51 L1662.73 1393.46 L1663.23 1393.42 L1663.72 1393.37 L1664.22 1393.32 L1664.71 1393.27 L1665.20 1393.22 L1665.70 1393.18 L1666.19 1393.13 L1666.69 1393.07 L1667.18 1393.02 L1667.67 1392.97 L1668.17 1392.92 L1668.66 1392.86 L1669.15 1392.81 L1669.65 1392.75 L1670.14 1392.69 L1670.64 1392.63 L1671.13 1392.57 L1671.62 1392.51 L1672.12 1392.45 L1672.61 1392.39 L1673.10 1392.33 L1673.60 1392.26 L1674.09 1392.20 L1674.59 1392.13 L1675.08 1392.06 L1675.57 1391.99 L1676.07 1391.92 L1676.56 1391.85 L1677.06 1391.77 L1677.55 1391.70 L1678.04 1391.62 L1678.54 1391.54 L1679.03 1391.46 L1679.52 1391.38 L1680.02 1391.30 L1680.51 1391.22 L1681.01 1391.13 L1681.50 1391.04 L1681.99 1390.95 L1682.49 1390.86 L1682.98 1390.76 L1683.48 1390.67 L1683.97 1390.57 L1684.46 1390.47 L1684.96 1390.37 L1685.45 1390.26 L1685.94 1390.15 L1686.44 1390.04 L1686.93 1389.93 L1687.43 1389.82 L1687.92 1389.70 L1688.41 1389.58 L1688.91 1389.45 L1689.40 1389.32 L1689.90 1389.19 L1690.39 1389.06 L1690.88 1388.92 L1691.38 1388.78 L1691.87 1388.63 L1692.36 1388.49 L1692.86 1388.33 L1693.35 1388.17 L1693.85 1388.01 L1694.34 1387.85 L1694.83 1387.67 L1695.33 1387.50 L1695.82 1387.31 L1696.31 1387.13 L1696.81 1386.93 L1697.30 1386.73 L1697.80 1386.52 L1698.29 1386.31 L1698.78 1386.09 L1699.28 1385.86 L1699.77 1385.63 L1700.27 1385.38 L1700.76 1385.13 L1701.25 1384.87 L1701.75 1384.59 L1702.24 1384.31 L1702.73 1384.02 L1703.23 1383.71 L1703.72 1383.40 L1704.22 1383.07 L1704.71 1382.72 L1705.20 1382.36 L1705.70 1381.99 L1706.19 1381.60 L1706.69 1381.19 L1707.18 1380.76 L1707.67 1380.31 L1708.17 1379.84 L1708.66 1379.35 L1709.15 1378.83 L1709.65 1378.28 L1710.14 1377.71 L1710.64 1377.10 L1711.13 1376.45 L1711.62 1375.77 L1712.12 1375.05 L1712.61 1374.28 L1713.10 1373.46 L1713.60 1372.58 L1714.09 1371.65 L1714.59 1370.64 L1715.08 1369.57 L1715.57 1368.41 L1716.07 1367.15 L1716.56 1365.79 L1717.06 1364.31 L1717.55 1362.69 L1718.04 1360.92 L1718.54 1358.97 L1719.03 1356.81 L1719.52 1354.41 L1720.02 1351.72 L1720.51 1348.69 L1721.01 1345.25 L1721.50 1341.31' stroke='#0000ff' stroke-width='1' fill='none' shape-rendering='crispEdges'/>
<path d='M1721.50 1067.40 L1722.50 1067.40' stroke='#0000ff' stroke-width='1' fill='none' shape-rendering='crispEdges'/>
<path d='M1722.50 846.67 L1723.00 841.14 L1723.50 836.37 L1724.00 832.36 L1724.50 829.10 L1725.00 826.60 L1725.50 824.86 L1726.00 823.87 L1726.50 823.65 L1727.00 823.80 L1727.50 823.95 L1728.00 824.10 L1728.50 824.25 L1729.00 824.41 L1729.50 824.56 L1730.00 824.71 L1730.50 824.86 L1731.00 825.02 L1731.50 825.17 L1732.00 825.32 L1732.50 825.47 L1733.00 825.63 L1733.50 825.78 L1734.00 825.93 L1734.50 826.08 L1735.00 826.24 L1735.50 826.39 L1736.00 826.54 L1736.50 826.70 L1737.00 826.85 L1737.50 827.00 L1738.00 827.15 L1738.50 827.31 L1739.00 827.46 L1739.50 827.61 L1740.00 827.77 L1740.50 827.92 L1741.00 828.07 L1741.50 828.23 L1742.00 828.38 L1742.50 828.54 L1743.00 828.69 L1743.50 828.84 L1744.00 829.00 L1744.50 829.15 L1745.00 829.31 L1745.50 829.46 L1746.00 829.62 L1746.50 829.77 L1747.00 829.93 L1747.50 830.08 L1748.00 830.24 L1748.50 830.39 L1749.00 830.55 L1749.50 830.70 L1750.00 830.86 L1750.50 831.01 L1751.00 831.17 L1751.50 831.33 L1752.00 831.48 L1752.50 831.64 L1753.00 831.80 L1753.50 831.95 L1754.00 832.11 L1754.50 832.27 L1755.00 832.43 L1755.50 832.59 L1756.00 832.75 L1756.50 832.90 L1757.00 833.06 L1757.50 833.22 L1758.00 833.38 L1758.50 833.54 L1759.00 833.70 L1759.50 833.86 L1760.00 834.03 L1760.50 834.19 L1761.00 834.35 L1761.50 834.51 L1762.00 834.68 L1762.50 834.84 L1763.00 835.00 L1763.50 835.17 L1764.00 835.33 L1764.50 835.50 L1765.00 835.67 L1765.50 835.83 L1766.00 836.00 L1766.50 836.17 L1767.00 836.34 L1767.50 836.51 L1768.00 836.68 L1768.50 836.85 L1769.00 837.03 L1769.50 837.20 L1770.00 837.37 L1770.50 837.55 L1771.00 837.73 L1771.50 837.90 L1772.00 838.08 L1772.50 838.26 L1773.00 838.44 L1773.50 838.62 L1774.00 838.81 L1774.50 838.99 L1775.00 839.18 L1775.50 839.37 L1776.00 839.56 L1776.50 839.75 L1777.00 839.94 L1777.50 840.13 L1778.00 840.33 L1778.50 840.53 L1779.00 840.73 L1779.50 840.93 L1780.00 841.13 L1780.50 841.34 L1781.00 841.55 L1781.50 841.76 L1782.00 841.97 L1782.50 842.19 L1783.00 842.41 L1783.50 842.63 L1784.00 842.85 L1784.50 843.08 L1785.00 843.31 L1785.50 843.55 L1786.00 843.79 L1786.50 844.03 L1787.00 844.27 L1787.50 844.52 L1788.00 844.78 L1788.50 845.04 L1789.00 845.30 L1789.50 845.57 L1790.00 845.84 L1790.50 846.12 L1791.00 846.40 L1791.50 846.69 L1792.00 846.98 L1792.50 847.28 L1793.00 847.59 L1793.50 847.90 L1794.00 848.23 L1794.50 848.55 L1795.00 848.89 L1795.50 849.23 L1796.00 849.58 L1796.50 849.94 L1797.00 850.31 L1797.50 850.69 L1798.00 851.07 L1798.50 851.47' stroke='#0000ff' stroke-width='1' fill='none' shape-rendering='crispEdges'/>
<path d='M1798.50 1388.13 L1799.50 1395.96 L1800.00 1395.94 L1800.49 1395.92 L1800.99 1395.91 L1801.48 1395.89 L1801.98 1395.88 L1802.47 1395.86 L1802.97 1395.84 L1803.46 1395.83 L1803.96 1395.81 L1804.45 1395.79 L1804.95 1395.78 L1805.44 1395.76 L1805.94 1395.74 L1806.43 1395.72 L1806.93 1395.70 L1807.42 1395.69 L1807.92 1395.67 L1808.42 1395.65 L1808.91 1395.63 L1809.41 1395.61 L1809.90 1395.59 L1810.40 1395.57 L1810.89 1395.56 L1811.39 1395.54 L1811.88 1395.52 L1812.38 1395.50 L1812.87 1395.48 L1813.37 1395.46 L1813.86 1395.43 L1814.36 1395.41 L1814.85 1395.39 L1815.35 1395.37 L1815.84 1395.35 L1816.34 1395.33 L1816.83 1395.31 L1817.33 1395.29 L1817.83 1395.26 L1818.32 1395.24 L1818.82 1395.22 L1819.31 1395.19 L1819.81 1395.17 L1820.30 1395.15 L1820.80 1395.12 L1821.29 1395.10 L1821.79 1395.08 L1822.28 1395.05 L1822.78 1395.03 L1823.27 1395.00 L1823.77 1394.98 L1824.26 1394.95 L1824.76 1394.92 L1825.25 1394.90 L1825.75 1394.87 L1826.25 1394.84 L1826.74 1394.82 L1827.24 1394.79 L1827.73 1394.76 L1828.23 1394.73 L1828.72 1394.70 L1829.22 1394.68 L1829.71 1394.65 L1830.21 1394.62 L1830.70 1394.59 L1831.20 1394.56 L1831.69 1394.53 L1832.19 1394.49 L1832.68 1394.46 L1833.18 1394.43 L1833.67 1394.40 L1834.17 1394.37 L1834.67 1394.33 L1835.16 1394.30 L1835.66 1394.26 L1836.15 1394.23 L1836.65 1394.20 L1837.14 1394.16 L1837.64 1394.12 L1838.13 1394.09 L1838.63 1394.05 L1839.12 1394.01 L1839.62 1393.98 L1840.11 1393.94 L1840.61 1393.90 L1841.10 1393.86 L1841.60 1393.82 L1842.09 1393.78 L1842.59 1393.74 L1843.08 1393.70 L1843.58 1393.65 L1844.08 1393.61 L1844.57 1393.57 L1845.07 1393.52 L1845.56 1393.48 L1846.06 1393.43 L1846.55 1393.38 L1847.05 1393.34 L1847.54 1393.29 L1848.04 1393.24 L1848.53 1393.19 L1849.03 1393.14 L1849.52 1393.09 L1850.02 1393.04 L1850.51 1392.99 L1851.01 1392.93 L1851.50 1392.88 L1852.00 1392.82 L1852.50 1392.77 L1852.99 1392.71 L1853.49 1392.65 L1853.98 1392.59 L1854.48 1392.53 L1854.97 1392.47 L1855.47 1392.41 L1855.96 1392.35 L1856.46 1392.28 L1856.95 1392.22 L1857.45 1392.15 L1857.94 1392.08 L1858.44 1392.01 L1858.93 1391.94 L1859.43 1391.87 L1859.92 1391.79 L1860.42 1391.72 L1860.92 1391.64 L1861.41 1391.56 L1861.91 1391.49 L1862.40 1391.40 L1862.90 1391.32 L1863.39 1391.24 L1863.89 1391.15 L1864.38 1391.06 L1864.88 1390.97 L1865.37 1390.88 L1865.87 1390.79 L1866.36 1390.69 L1866.86 1390.59 L1867.35 1390.49 L1867.85 1390.39 L1868.34 1390.28 L1868.84 1390.18 L1869.33 1390.07 L1869.83 1389.95 L1870.33 1389.84 L1870.82 1389.72 L1871.32 1389.60 L1871.81 1389.48 L1872.31 1389.35 L1872.80 1389.22 L1873.30 1389.08 L1873.79 1388.95 L1874.29 1388.81 L1874.78 1388.66 L1875.28 1388.51 L1875.77 1388.36 L1876.27 1388.20 L1876.76 1388.04 L1877.26 1387.87 L1877.75 1387.70 L1878.25 1387.52 L1878.75 1387.34 L1879.24 1387.15 L1879.74 1386.96 L1880.23 1386.76 L1880.73 1386.55 L1881.22 1386.34 L1881.72 1386.12 L1882.21 1385.89 L1882.71 1385.66 L1883.20 1385.41 L1883.70 1385.16 L1884.19 1384.90 L1884.69 1384.63 L1885.18 1384.35 L1885.68 1384.05 L1886.17 1383.75 L1886.67 1383.43 L1887.17 1383.10 L1887.66 1382.76 L1888.16 1382.40 L1888.65 1382.03 L1889.15 1381.64 L1889.64 1381.23 L1890.14 1380.80 L1890.63 1380.35 L1891.13 1379.88 L1891.62 1379.39 L1892.12 1378.87 L1892.61 1378.32 L1893.11 1377.75 L1893.60 1377.14 L1894.10 1376.49 L1894.59 1375.81 L1895.09 1375.09 L1895.58 1374.32 L1896.08 1373.50 L1896.58 1372.63 L1897.07 1371.69 L1897.57 1370.69 L1898.06 1369.61 L1898.56 1368.45 L1899.05 1367.19 L1899.55 1365.83 L1900.04 1364.35 L1900.54 1362.73 L1901.03 1360.96 L1901.53 1359.01 L1902.02 1356.84 L1902.52 1354.44 L1903.01 1351.74 L1903.51 1348.71 L1904.00 1345.26 L1904.50 1341.31' stroke='#0000ff' stroke-width='1' fill='none' shape-rendering='crispEdges'/>
<path d='M1904.50 1122.12 L1905.50 1122.12' stroke='#0000ff' stroke-width='1' fill='none' shape-rendering='crispEdges'/>
<path d='M1905.50 836.99 L1906.00 831.46 L1906.50 826.69 L1907.00 822.67 L1907.50 819.42 L1908.00 816.92 L1908.50 815.17 L1909.00 814.19 L1909.50 813.96 L1910.00 814.11 L1910.50 814.26 L1911.00 814.42 L1911.50 814.57 L1912.00 814.72 L1912.50 814.87 L1913.00 815.02 L1913.50 815.17 L1914.00 815.33 L1914.50 815.48 L1915.00 815.63 L1915.50 815.78 L1916.00 815.93 L1916.50 816.08 L1917.00 816.24 L1917.50 816.39 L1918.00 816.54 L1918.50 816.69 L1919.00 816.84 L1919.50 816.99 L1920.00 817.15 L1920.50 817.30 L1921.00 817.45 L1921.50 817.60 L1922.00 817.75 L1922.50 817.90 L1923.00 818.06 L1923.50 818.21 L1924.00 818.36 L1924.50 818.51 L1925.00 818.66 L1925.50 818.81 L1926.00 818.97 L1926.50 819.12 L1927.00 819.27 L1927.50 819.42 L1928.00 819.57 L1928.50 819.73 L1929.00 819.88 L1929.50 820.03 L1930.00 820.18 L1930.50 820.33 L1931.00 820.49 L1931.50 820.64 L1932.00 820.79 L1932.50 820.94 L1933.00 821.09 L1933.50 821.25 L1934.00 821.40 L1934.50 821.55 L1935.00 821.70 L1935.50 821.85 L1936.00 822.01 L1936.50 822.16 L1937.00 822.31 L1937.50 822.46 L1938.00 822.62 L1938.50 822.77 L1939.00 822.92 L1939.50 823.07 L1940.00 823.23 L1940.50 823.38 L1941.00 823.53 L1941.50 823.68 L1942.00 823.84 L1942.50 823.99 L1943.00 824.14 L1943.50 824.29 L1944.00 824.45 L1944.50 824.60 L1945.00 824.75 L1945.50 824.91 L1946.00 825.06 L1946.50 825.21 L1947.00 825.36 L1947.50 825.52 L1948.00 825.67 L1948.50 825.82 L1949.00 825.98 L1949.50 826.13 L1950.00 826.29 L1950.50 826.44 L1951.00 826.59 L1951.50 826.75 L1952.00 826.90 L1952.50 827.06 L1953.00 827.21 L1953.50 827.36 L1954.00 827.52 L1954.50 827.67 L1955.00 827.83 L1955.50 827.98 L1956.00 828.14 L1956.50 828.29 L1957.00 828.45 L1957.50 828.60 L1958.00 828.76 L1958.50 828.92 L1959.00 829.07 L1959.50 829.23 L1960.00 829.38 L1960.50 829.54 L1961.00 829.70 L1961.50 829.86 L1962.00 830.01 L1962.50 830.17 L1963.00 830.33 L1963.50 830.49 L1964.00 830.64 L1964.50 830.80 L1965.00 830.96 L1965.50 831.12 L1966.00 831.28 L1966.50 831.44 L1967.00 831.60 L1967.50 831.76 L1968.00 831.92 L1968.50 832.08 L1969.00 832.25 L1969.50 832.41 L1970.00 832.57 L1970.50 832.74 L1971.00 832.90 L1971.50 833.06 L1972.00 833.23 L1972.50 833.39 L1973.00 833.56 L1973.50 833.73 L1974.00 833.89 L1974.50 834.06 L1975.00 834.23 L1975.50 834.40 L1976.00 834.57 L1976.50 834.74 L1977.00 834.91 L1977.50 835.09 L1978.00 835.26 L1978.50 835.44 L1979.00 835.61 L1979.50 835.79 L1980.00 835.96 L1980.50 836.14 L1981.00 836.32 L1981.50 836.50 L1982.00 836.69 L1982.50 836.87 L1983.00 837.06 L1983.50 837.24 L1984.00 837.43 L1984.50 837.62 L1985.00 837.81 L1985.50 838.00 L1986.00 838.20 L1986.50 838.40 L1987.00 838.59 L1987.50 838.79 L1988.00 839.00 L1988.50 839.20 L1989.00 839.41 L1989.50 839.62 L1990.00 839.83 L1990.50 840.04 L1991.00 840.26 L1991.50 840.48 L1992.00 840.70 L1992.50 840.93 L1993.00 841.16 L1993.50 841.39 L1994.00 841.62 L1994.50 841.86 L1995.00 842.11 L1995.50 842.35 L1996.00 842.60 L1996.50 842.86 L1997.00 843.12 L1997.50 843.38 L1998.00 843.65 L1998.50 843.92 L1999.00 844.20 L1999.50 844.49 L2000.00 844.78 L2000.50 845.07 L2001.00 845.37 L2001.50 845.68 L2002.00 846.00 L2002.50 846.32 L2003.00 846.65 L2003.50 846.99 L2004.00 847.33 L2004.50 847.68' stroke='#0000ff' stroke-width='1' fill='none' shape-rendering='crispEdges'/>
<path d='M2004.50 1388.13 L2005.50 1395.67 L2005.99 1395.65 L2006.49 1395.63 L2006.98 1395.61 L2007.48 1395.59 L2007.97 1395.57 L2008.47 1395.55 L2008.96 1395.53 L2009.46 1395.51 L2009.95 1395.49 L2010.45 1395.47 L2010.94 1395.45 L2011.44 1395.43 L2011.93 1395.41 L2012.43 1395.39 L2012.92 1395.37 L2013.42 1395.35 L2013.91 1395.33 L2014.41 1395.30 L2014.90 1395.28 L2015.40 1395.26 L2015.89 1395.24 L2016.39 1395.21 L2016.88 1395.19 L2017.38 1395.17 L2017.87 1395.14 L2018.37 1395.12 L2018.86 1395.10 L2019.36 1395.07 L2019.85 1395.05 L2020.35 1395.02 L2020.84 1395.00 L2021.34 1394.97 L2021.83 1394.95 L2022.33 1394.92 L2022.82 1394.89 L2023.32 1394.87 L2023.81 1394.84 L2024.31 1394.81 L2024.80 1394.79 L2025.29 1394.76 L2025.79 1394.73 L2026.28 1394.70 L2026.78 1394.67 L2027.27 1394.64 L2027.77 1394.61 L2028.26 1394.58 L2028.76 1394.55 L2029.25 1394.52 L2029.75 1394.49 L2030.24 1394.46 L2030.74 1394.43 L2031.23 1394.39 L2031.73 1394.36 L2032.22 1394.33 L2032.72 1394.30 L2033.21 1394.26 L2033.71 1394.23 L2034.20 1394.19 L2034.70 1394.16 L2035.19 1394.12 L2035.69 1394.08 L2036.18 1394.05 L2036.68 1394.01 L2037.17 1393.97 L2037.67 1393.93 L2038.16 1393.89 L2038.66 1393.85 L2039.15 1393.81 L2039.65 1393.77 L2040.14 1393.73 L2040.64 1393.69 L2041.13 1393.65 L2041.63 1393.61 L2042.12 1393.56 L2042.62 1393.52 L2043.11 1393.47 L2043.61 1393.43 L2044.10 1393.38 L2044.59 1393.33 L2045.09 1393.29 L2045.58 1393.24 L2046.08 1393.19 L2046.57 1393.14 L2047.07 1393.09 L2047.56 1393.03 L2048.06 1392.98 L2048.55 1392.93 L2049.05 1392.87 L2049.54 1392.82 L2050.04 1392.76 L2050.53 1392.71 L2051.03 1392.65 L2051.52 1392.59 L2052.02 1392.53 L2052.51 1392.47 L2053.01 1392.40 L2053.50 1392.34 L2054.00 1392.28 L2054.49 1392.21 L2054.99 1392.14 L2055.48 1392.07 L2055.98 1392.01 L2056.47 1391.93 L2056.97 1391.86 L2057.46 1391.79 L2057.96 1391.71 L2058.45 1391.64 L2058.95 1391.56 L2059.44 1391.48 L2059.94 1391.40 L2060.43 1391.32 L2060.93 1391.23 L2061.42 1391.14 L2061.92 1391.06 L2062.41 1390.97 L2062.91 1390.87 L2063.40 1390.78 L2063.89 1390.68 L2064.39 1390.59 L2064.88 1390.49 L2065.38 1390.38 L2065.87 1390.28 L2066.37 1390.17 L2066.86 1390.06 L2067.36 1389.95 L2067.85 1389.83 L2068.35 1389.71 L2068.84 1389.59 L2069.34 1389.47 L2069.83 1389.34 L2070.33 1389.21 L2070.82 1389.08 L2071.32 1388.94 L2071.81 1388.80 L2072.31 1388.65 L2072.80 1388.50 L2073.30 1388.35 L2073.79 1388.19 L2074.29 1388.03 L2074.78 1387.86 L2075.28 1387.69 L2075.77 1387.52 L2076.27 1387.33 L2076.76 1387.15 L2077.26 1386.95 L2077.75 1386.75 L2078.25 1386.55 L2078.74 1386.33 L2079.24 1386.11 L2079.73 1385.88 L2080.23 1385.65 L2080.72 1385.40 L2081.22 1385.15 L2081.71 1384.89 L2082.21 1384.62 L2082.70 1384.34 L2083.19 1384.04 L2083.69 1383.74 L2084.18 1383.42 L2084.68 1383.09 L2085.17 1382.75 L2085.67 1382.39 L2086.16 1382.02 L2086.66 1381.63 L2087.15 1381.22 L2087.65 1380.79 L2088.14 1380.34 L2088.64 1379.87 L2089.13 1379.38 L2089.63 1378.86 L2090.12 1378.31 L2090.62 1377.73 L2091.11 1377.13 L2091.61 1376.48 L2092.10 1375.80 L2092.60 1375.08 L2093.09 1374.31 L2093.59 1373.49 L2094.08 1372.61 L2094.58 1371.68 L2095.07 1370.67 L2095.57 1369.60 L2096.06 1368.44 L2096.56 1367.18 L2097.05 1365.82 L2097.55 1364.34 L2098.04 1362.72 L2098.54 1360.95 L2099.03 1359.00 L2099.53 1356.83 L2100.02 1354.43 L2100.52 1351.74 L2101.01 1348.70 L2101.51 1345.26 L2102.00 1341.31' stroke='#0000ff' stroke-width='1' fill='none' shape-rendering='crispEdges'/>
<path d='M2102.00 1080.03 L2103.00 1080.03' stroke='#0000ff' stroke-width='1' fill='none' shape-rendering='crispEdges'/>
<path d='M2103.00 839.94 L2103.50 834.41 L2104.00 829.64 L2104.50 825.62 L2105.00 822.37 L2105.50 819.87 L2106.00 818.12 L2106.50 817.14 L2107.00 816.91 L2107.50 817.07 L2108.00 817.22 L2108.50 817.37 L2109.00 817.53 L2109.50 817.68 L2110.00 817.83 L2110.50 817.98 L2111.00 818.14 L2111.50 818.29 L2112.00 818.44 L2112.50 818.60 L2113.00 818.75 L2113.50 818.90 L2114.00 819.06 L2114.50 819.21 L2115.00 819.36 L2115.50 819.52 L2116.00 819.67 L2116.50 819.83 L2117.00 819.98 L2117.50 820.13 L2118.00 820.29 L2118.50 820.44 L2119.00 820.60 L2119.50 820.75 L2120.00 820.91 L2120.50 821.06 L2121.00 821.22 L2121.50 821.37 L2122.00 821.53 L2122.50 821.68 L2123.00 821.84 L2123.50 822.00 L2124.00 822.15 L2124.50 822.31 L2125.00 822.46 L2125.50 822.62 L2126.00 822.78 L2126.50 822.93 L2127.00 823.09 L2127.50 823.25 L2128.00 823.41 L2128.50 823.57 L2129.00 823.72 L2129.50 823.88 L2130.00 824.04 L2130.50 824.20 L2131.00 824.36 L2131.50 824.52 L2132.00 824.68 L2132.50 824.84 L2133.00 825.00 L2133.50 825.17 L2134.00 825.33 L2134.50 825.49 L2135.00 825.65 L2135.50 825.82 L2136.00 825.98 L2136.50 826.14 L2137.00 826.31 L2137.50 826.48 L2138.00 826.64 L2138.50 826.81 L2139.00 826.98 L2139.50 827.14 L2140.00 827.31 L2140.50 827.48 L2141.00 827.65 L2141.50 827.82 L2142.00 828.00 L2142.50 828.17 L2143.00 828.34 L2143.50 828.52 L2144.00 828.69 L2144.50 828.87 L2145.00 829.05 L2145.50 829.23 L2146.00 829.41 L2146.50 829.59 L2147.00 829.77 L2147.50 829.95 L2148.00 830.14 L2148.50 830.33 L2149.00 830.51 L2149.50 830.70 L2150.00 830.90 L2150.50 831.09 L2151.00 831.28 L2151.50 831.48 L2152.00 831.68 L2152.50 831.88 L2153.00 832.08 L2153.50 832.29 L2154.00 832.49 L2154.50 832.70 L2155.00 832.92' stroke='#0000ff' stroke-width='1' fill='none' shape-rendering='crispEdges'/>
<path d='M1161.50 107.00 L1162.50 107.83 L1163.50 108.63 L1164.50 109.41 L1165.50 110.16 L1166.50 110.88 L1167.50 111.59 L1168.50 112.27 L1169.50 112.92 L1170.50 113.56 L1171.50 114.17 L1172.50 114.77 L1173.50 115.34 L1174.50 115.90 L1175.50 116.43 L1176.50 116.95 L1177.50 117.46 L1178.50 117.94 L1179.50 118.42 L1180.50 118.87 L1181.50 119.31 L1182.50 119.74 L1183.50 120.15 L1184.50 120.55 L1185.50 120.93 L1186.50 121.30 L1187.50 121.67 L1188.50 122.01 L1189.50 122.35 L1190.50 122.68 L1191.50 122.99 L1192.50 123.30 L1193.50 123.59 L1194.50 123.88 L1195.50 124.15 L1196.50 124.42 L1197.50 124.68 L1198.50 124.93 L1199.50 125.17 L1200.50 125.40 L1201.50 125.63 L1202.50 125.85 L1203.50 126.06 L1204.50 126.27 L1205.50 126.46 L1206.50 126.65 L1207.50 126.84 L1208.50 127.02 L1209.50 127.19 L1210.50 127.36 L1211.50 127.52 L1212.50 127.68 L1213.50 127.83 L1214.50 127.98 L1215.50 128.12 L1216.50 128.26 L1217.50 128.39 L1218.50 128.52 L1219.50 128.64 L1220.50 128.76 L1221.50 128.88 L1222.50 128.99 L1223.50 129.10 L1224.50 129.20 L1225.50 129.30 L1226.50 129.40 L1227.50 129.50 L1228.50 129.59 L1229.50 129.68 L1230.50 129.76 L1231.50 129.85 L1232.50 129.93 L1233.50 130.00 L1234.50 130.08 L1235.50 130.15 L1236.50 130.22 L1237.50 130.29 L1238.50 130.36 L1239.50 130.42 L1240.50 130.48 L1241.50 130.54 L1242.50 130.60 L1243.50 130.66 L1244.50 130.71 L1245.50 130.76 L1246.50 130.81 L1247.50 130.86 L1248.50 130.91 L1249.50 130.95 L1250.50 131.00 L1251.50 131.04 L1252.50 131.08 L1253.50 131.12 L1254.50 131.16 L1255.50 131.20 L1256.50 131.23 L1257.50 131.27 L1258.50 131.30 L1259.50 131.34 L1260.50 131.37 L1261.50 131.40 L1262.50 131.43 L1263.50 131.46 L1264.50 131.48 L1265.50 131.51 L1266.50 131.54 L1267.50 131.56 L1268.50 131.59 L1269.50 131.61 L1270.50 131.63 L1271.50 131.65 L1272.50 131.67 L1273.50 131.70 L1274.50 131.71 L1275.50 131.73 L1276.50 131.75 L1277.50 131.77 L1278.50 131.79 L1279.50 131.80 L1280.50 131.82 L1281.50 131.84 L1282.50 131.85 L1283.50 131.87 L1284.50 131.88 L1285.50 131.89 L1286.50 131.91 L1287.50 131.92 L1288.50 131.93 L1289.50 131.95 L1290.50 131.96 L1291.50 131.97 L1292.50 131.98 L1293.50 131.99 L1294.50 132.00 L1295.50 132.01 L1296.50 132.02 L1297.50 132.03 L1298.50 132.04 L1299.50 132.05 L1300.50 132.05 L1306.50 132.10 L1312.50 132.14 L1318.50 132.17 L1324.50 132.19 L1330.50 132.21 L1336.50 132.23 L1342.50 132.24 L1348.50 132.25 L1354.50 132.26 L1360.50 132.27 L1366.50 132.27 L1372.50 132.28 L1378.50 132.28 L1384.50 132.29 L1390.50 132.29 L1396.50 132.29 L1402.50 132.29 L1408.50 132.29 L1414.50 132.29 L1420.50 132.30 L1426.50 132.30 L1432.50 132.30 L1438.50 132.30 L1444.50 132.30 L1450.50 132.30 L1456.50 132.30 L1462.50 132.30 L1468.50 132.30 L1474.50 132.30 L1480.50 132.30 L1486.50 132.30 L1492.50 132.30 L1498.50 132.30 L1504.50 132.30 L1510.50 132.30 L1516.50 132.30 L1522.50 132.30 L1528.50 132.30 L1534.50 132.30 L1540.50 132.30 L1546.50 132.30 L1552.50 132.30 L1558.50 132.30 L1564.50 132.30 L1570.50 132.30 L1576.50 132.30 L1582.50 132.30 L1588.50 132.30 L1594.50 132.30 L1600.50 132.30 L1606.50 132.30 L1612.50 132.30 L1618.50 132.30 L1624.50 132.30 L1630.50 132.30 L1636.50 132.30 L1642.50 132.30 L1648.50 132.30 L1654.50 132.30 L1660.50 132.30 L1666.50 132.30 L1672.50 132.30 L1678.50 132.30 L1684.50 132.30 L1690.50 132.30 L1696.50 132.30 L1702.50 132.30 L1708.50 132.30 L1714.50 132.30 L1720.50 132.30 L1726.50 132.30 L1732.50 132.30 L1738.50 132.30 L1744.50 132.30 L1750.50 132.30 L1756.50 132.30 L1762.50 132.30 L1768.50 132.30 L1774.50 132.30 L1780.50 132.30 L1786.50 132.30 L1792.50 132.30 L1798.50 132.30 L1804.50 132.48 L1808.50 132.66 L1812.50 132.85 L1816.50 133.05 L1820.50 133.26 L1824.50 133.48 L1828.50 133.70 L1832.50 133.94 L1836.50 134.19 L1840.50 134.45 L1844.50 134.72 L1848.50 135.01 L1852.50 135.31 L1856.50 135.62 L1860.50 135.95 L1864.50 136.30 L1868.50 136.67 L1872.50 137.07 L1876.50 137.48 L1880.50 137.92 L1884.50 138.39 L1888.50 138.89 L1892.50 139.43 L1896.50 140.00 L1900.50 140.61 L1904.50 141.27 L1908.50 141.99 L1912.50 142.76 L1916.50 143.59 L1920.50 144.51 L1924.50 145.50 L1928.50 146.60 L1932.50 147.81 L1936.50 149.15 L1940.50 150.64 L1944.50 152.32 L1948.50 154.21 L1952.50 156.37 L1956.50 158.85 L1960.50 161.74 L1964.50 165.13 L1968.50 169.17 L1972.50 174.08 L1976.50 180.17 L1980.50 187.90 L1984.50 198.07 L1988.32 211.28 L1991.56 226.82 L1994.32 245.11 L1996.67 266.62 L1998.66 291.93 L2000.36 321.71 L2000.55 325.71 L2000.73 329.71 L2000.90 333.71 L2001.07 337.71 L2001.24 341.71 L2001.39 345.71 L2001.54 349.71 L2001.69 353.71 L2001.83 357.71 L2001.97 361.71 L2002.10 365.71 L2002.23 369.71 L2002.35 373.71 L2002.47 377.71 L2002.59 381.71 L2002.70 385.71 L2002.81 389.71 L2002.91 393.71 L2003.02 397.71 L2003.11 401.71 L2003.21 405.71 L2003.31 409.71 L2003.40 413.71 L2003.49 417.71 L2003.57 421.71 L2003.66 425.71 L2003.74 429.71 L2003.82 433.71 L2003.90 437.71 L2003.97 441.71 L2004.05 445.71 L2004.12 449.71 L2004.19 453.71 L2004.26 457.71 L2004.33 461.71 L2004.39 465.71 L2004.46 469.71 L2004.52 473.71 L2004.58 477.71 L2004.64 481.71 L2004.70 485.71 L2004.76 489.71 L2004.81 493.71 L2004.87 497.71 L2004.92 501.71 L2004.98 505.71 L2005.03 509.71 L2005.08 513.71 L2005.13 517.71 L2005.18 521.71 L2005.22 525.71 L2005.27 529.71 L2005.32 533.71 L2005.36 537.71 L2005.40 541.71 L2005.45 545.71 L2005.49 549.71 L2005.53 553.71 L2005.57 557.71 L2005.61 561.71 L2005.65 565.71 L2005.69 569.71 L2005.73 573.71 L2005.77 577.71 L2005.80 581.71 L2005.84 585.71 L2005.87 589.71 L2005.91 593.71 L2005.94 597.71 L2005.98 601.71 L2006.01 605.71 L2006.04 609.71 L2006.07 613.71 L2006.10 617.71 L2006.14 621.71 L2006.17 625.71 L2006.20 629.71 L2006.23 633.71 L2006.25 637.71 L2006.28 641.71 L2006.43 641.50 L2006.59 642.50 L2006.76 643.50 L2006.93 644.50 L2007.11 645.50 L2007.30 646.50 L2007.50 647.50 L2007.71 648.50 L2007.93 649.50 L2008.16 650.50 L2008.40 651.50 L2008.66 652.50 L2008.93 653.50 L2009.21 654.50 L2009.51 655.50 L2009.84 656.50 L2010.18 657.50 L2010.54 658.50 L2010.93 659.50 L2011.35 660.50 L2011.79 661.50 L2012.27 662.50 L2012.79 663.50 L2013.35 664.50 L2013.96 665.50 L2014.62 666.50 L2015.35 667.50 L2016.14 668.50 L2017.01 669.50 L2017.99 670.50 L2019.07 671.50 L2020.28 672.50 L2021.65 673.50 L2023.20 674.50 L2024.99 675.50 L2027.07 676.50 L2029.50 677.50 L2032.40 678.50 L2035.91 679.50 L2040.24 680.50 L2045.73 681.50 L2052.91 682.50 L2055.07 682.75 L2055.50 687.50' stroke='#0000ff' stroke-width='1' fill='none' shape-rendering='crispEdges'/>
<path d='M1162.20 107.30 L1163.20 108.14 L1164.20 108.96 L1165.20 109.75 L1166.20 110.51 L1167.20 111.25 L1168.20 111.96 L1169.20 112.65 L1170.20 113.32 L1171.20 113.96 L1172.20 114.59 L1173.20 115.19 L1174.20 115.77 L1175.20 116.34 L1176.20 116.88 L1177.20 117.41 L1178.20 117.92 L1179.20 118.42 L1180.20 118.90 L1181.20 119.36 L1182.20 119.81 L1183.20 120.24 L1184.20 120.66 L1185.20 121.06 L1186.20 121.45 L1187.20 121.83 L1188.20 122.20 L1189.20 122.55 L1190.20 122.89 L1191.20 123.23 L1192.20 123.55 L1193.20 123.86 L1194.20 124.16 L1195.20 124.45 L1196.20 124.73 L1197.20 125.00 L1198.20 125.26 L1199.20 125.51 L1200.20 125.76 L1201.20 126.00 L1202.20 126.23 L1203.20 126.45 L1204.20 126.66 L1205.20 126.87 L1206.20 127.07 L1207.20 127.27 L1208.20 127.45 L1209.20 127.64 L1210.20 127.81 L1211.20 127.98 L1212.20 128.15 L1213.20 128.31 L1214.20 128.46 L1215.20 128.61 L1216.20 128.75 L1217.20 128.89 L1218.20 129.03 L1219.20 129.16 L1220.20 129.28 L1221.20 129.40 L1222.20 129.52 L1223.20 129.64 L1224.20 129.75 L1225.20 129.85 L1226.20 129.96 L1227.20 130.06 L1228.20 130.15 L1229.20 130.25 L1230.20 130.34 L1231.20 130.42 L1232.20 130.51 L1233.20 130.59 L1234.20 130.67 L1235.20 130.74 L1236.20 130.82 L1237.20 130.89 L1238.20 130.96 L1239.20 131.03 L1240.20 131.09 L1241.20 131.15 L1242.20 131.21 L1243.20 131.27 L1244.20 131.33 L1245.20 131.38 L1246.20 131.44 L1247.20 131.49 L1248.20 131.54 L1249.20 131.59 L1250.20 131.63 L1251.20 131.68 L1252.20 131.72 L1253.20 131.76 L1254.20 131.80 L1255.20 131.84 L1256.20 131.88 L1257.20 131.92 L1258.20 131.95 L1259.20 131.99 L1260.20 132.02 L1261.20 132.05 L1262.20 132.08 L1263.20 132.11 L1264.20 132.14 L1265.20 132.17 L1266.20 132.20 L1267.20 132.22 L1268.20 132.25 L1269.20 132.27 L1270.20 132.30 L1271.20 132.32 L1272.20 132.34 L1273.20 132.36 L1274.20 132.39 L1275.20 132.41 L1276.20 132.43 L1277.20 132.44 L1278.20 132.46 L1279.20 132.48 L1280.20 132.50 L1281.20 132.51 L1282.20 132.53 L1283.20 132.54 L1284.20 132.56 L1285.20 132.57 L1286.20 132.59 L1287.20 132.60 L1288.20 132.61 L1289.20 132.63 L1290.20 132.64 L1291.20 132.65 L1292.20 132.66 L1293.20 132.67 L1294.20 132.68 L1295.20 132.69 L1296.20 132.70 L1297.20 132.71 L1298.20 132.72 L1299.20 132.73 L1300.20 132.74 L1301.20 132.75 L1307.20 132.80 L1313.20 132.83 L1319.20 132.86 L1325.20 132.89 L1331.20 132.91 L1337.20 132.92 L1343.20 132.94 L1349.20 132.95 L1355.20 132.96 L1361.20 132.97 L1367.20 132.97 L1373.20 132.98 L1379.20 132.98 L1385.20 132.98 L1391.20 132.99 L1397.20 132.99 L1403.20 132.99 L1409.20 132.99 L1415.20 132.99 L1421.20 133.00 L1427.20 133.00 L1433.20 133.00 L1439.20 133.00 L1445.20 133.00 L1451.20 133.00 L1457.20 133.00 L1463.20 133.00 L1469.20 133.00 L1475.20 133.00 L1481.20 133.00 L1487.20 133.00 L1493.20 133.00 L1499.20 133.00 L1505.20 133.00 L1511.20 133.00 L1517.20 133.00 L1523.20 133.00 L1529.20 133.00 L1535.20 133.00 L1541.20 133.00 L1547.20 133.00 L1553.20 133.00 L1559.20 133.00 L1565.20 133.00 L1571.20 133.00 L1577.20 133.00 L1583.20 133.00 L1589.20 133.00 L1595.20 133.00 L1601.20 133.00 L1607.20 133.00 L1613.20 133.00 L1619.20 133.00 L1625.20 133.00 L1631.20 133.00 L1637.20 133.00 L1643.20 133.00 L1649.20 133.00 L1655.20 133.00 L1661.20 133.00 L1667.20 133.00 L1673.20 133.00 L1679.20 133.00 L1685.20 133.00 L1691.20 133.00 L1697.20 133.00 L1703.20 133.00 L1709.20 133.00 L1715.20 133.00 L1721.20 133.00 L1727.20 133.00 L1733.20 133.00 L1739.20 133.00 L1745.20 133.00 L1751.20 133.00 L1757.20 133.00 L1763.20 133.00 L1769.20 133.00 L1775.20 133.00 L1781.20 133.00 L1787.20 133.00 L1793.20 133.00 L1799.20 133.00 L1805.20 133.20 L1809.20 133.39 L1813.20 133.58 L1817.20 133.77 L1821.20 133.98 L1825.20 134.19 L1829.20 134.42 L1833.20 134.65 L1837.20 134.90 L1841.20 135.16 L1845.20 135.43 L1849.20 135.72 L1853.20 136.02 L1857.20 136.33 L1861.20 136.67 L1865.20 137.02 L1869.20 137.39 L1873.20 137.79 L1877.20 138.21 L1881.20 138.65 L1885.20 139.13 L1889.20 139.64 L1893.20 140.18 L1897.20 140.77 L1901.20 141.40 L1905.20 142.08 L1909.20 142.82 L1913.20 143.61 L1917.20 144.49 L1921.20 145.44 L1925.20 146.49 L1929.20 147.64 L1933.20 148.93 L1937.20 150.36 L1941.20 151.97 L1945.20 153.79 L1949.20 155.86 L1953.20 158.25 L1957.20 161.03 L1961.20 164.31 L1965.20 168.22 L1969.20 172.99 L1973.20 178.91 L1977.20 186.46 L1981.20 196.45 L1984.94 209.19 L1988.12 224.18 L1990.82 241.82 L1993.11 262.56 L1995.07 286.97 L1996.72 315.69 L1996.92 319.69 L1997.10 323.69 L1997.28 327.69 L1997.45 331.69 L1997.61 335.69 L1997.77 339.69 L1997.92 343.69 L1998.07 347.69 L1998.21 351.69 L1998.35 355.69 L1998.48 359.69 L1998.61 363.69 L1998.73 367.69 L1998.85 371.69 L1998.97 375.69 L1999.08 379.69 L1999.19 383.69 L1999.29 387.69 L1999.40 391.69 L1999.50 395.69 L1999.59 399.69 L1999.69 403.69 L1999.78 407.69 L1999.86 411.69 L1999.95 415.69 L2000.03 419.69 L2000.12 423.69 L2000.19 427.69 L2000.27 431.69 L2000.35 435.69 L2000.42 439.69 L2000.49 443.69 L2000.56 447.69 L2000.63 451.69 L2000.70 455.69 L2000.76 459.69 L2000.82 463.69 L2000.89 467.69 L2000.95 471.69 L2001.00 475.69 L2001.06 479.69 L2001.12 483.69 L2001.17 487.69 L2001.23 491.69 L2001.28 495.69 L2001.33 499.69 L2001.38 503.69 L2001.43 507.69 L2001.48 511.69 L2001.53 515.69 L2001.57 519.69 L2001.62 523.69 L2001.66 527.69 L2001.71 531.69 L2001.75 535.69 L2001.79 539.69 L2001.83 543.69 L2001.88 547.69 L2001.91 551.69 L2001.95 555.69 L2001.99 559.69 L2002.03 563.69 L2002.07 567.69 L2002.10 571.69 L2002.14 575.69 L2002.17 579.69 L2002.21 583.69 L2002.24 587.69 L2002.28 591.69 L2002.31 595.69 L2002.34 599.69 L2002.37 603.69 L2002.40 607.69 L2002.43 611.69 L2002.46 615.69 L2002.49 619.69 L2002.52 623.69 L2002.55 627.69 L2002.58 631.69 L2002.61 635.69 L2002.63 639.69 L2002.66 643.69 L2002.81 641.50 L2002.97 642.50 L2003.13 643.50 L2003.30 644.50 L2003.48 645.50 L2003.67 646.50 L2003.86 647.50 L2004.07 648.50 L2004.28 649.50 L2004.51 650.50 L2004.75 651.50 L2005.00 652.50 L2005.27 653.50 L2005.55 654.50 L2005.85 655.50 L2006.17 656.50 L2006.51 657.50 L2006.87 658.50 L2007.25 659.50 L2007.66 660.50 L2008.10 661.50 L2008.58 662.50 L2009.09 663.50 L2009.64 664.50 L2010.24 665.50 L2010.90 666.50 L2011.61 667.50 L2012.40 668.50 L2013.26 669.50 L2014.22 670.50 L2015.29 671.50 L2016.49 672.50 L2017.84 673.50 L2019.38 674.50 L2021.14 675.50 L2023.19 676.50 L2025.60 677.50 L2028.46 678.50 L2031.92 679.50 L2036.21 680.50 L2041.63 681.50 L2048.72 682.50 L2050.85 682.75 L2053.15 683.00 L2055.50 687.50' stroke='#0000ff' stroke-width='1' fill='none' shape-rendering='crispEdges'/>
<path d='M1162.90 108.50 L1163.90 109.34 L1164.90 110.14 L1165.90 110.93 L1166.90 111.68 L1167.90 112.41 L1168.90 113.12 L1169.90 113.81 L1170.90 114.47 L1171.90 115.11 L1172.90 115.73 L1173.90 116.33 L1174.90 116.91 L1175.90 117.47 L1176.90 118.01 L1177.90 118.53 L1178.90 119.04 L1179.90 119.53 L1180.90 120.01 L1181.90 120.46 L1182.90 120.91 L1183.90 121.34 L1184.90 121.75 L1185.90 122.15 L1186.90 122.54 L1187.90 122.92 L1188.90 123.28 L1189.90 123.63 L1190.90 123.97 L1191.90 124.30 L1192.90 124.62 L1193.90 124.93 L1194.90 125.22 L1195.90 125.51 L1196.90 125.79 L1197.90 126.06 L1198.90 126.32 L1199.90 126.57 L1200.90 126.81 L1201.90 127.05 L1202.90 127.28 L1203.90 127.50 L1204.90 127.71 L1205.90 127.92 L1206.90 128.12 L1207.90 128.31 L1208.90 128.50 L1209.90 128.68 L1210.90 128.85 L1211.90 129.02 L1212.90 129.18 L1213.90 129.34 L1214.90 129.49 L1215.90 129.64 L1216.90 129.78 L1217.90 129.92 L1218.90 130.06 L1219.90 130.19 L1220.90 130.31 L1221.90 130.43 L1222.90 130.55 L1223.90 130.66 L1224.90 130.77 L1225.90 130.88 L1226.90 130.98 L1227.90 131.08 L1228.90 131.17 L1229.90 131.27 L1230.90 131.36 L1231.90 131.44 L1232.90 131.53 L1233.90 131.61 L1234.90 131.69 L1235.90 131.76 L1236.90 131.84 L1237.90 131.91 L1238.90 131.98 L1239.90 132.04 L1240.90 132.11 L1241.90 132.17 L1242.90 132.23 L1243.90 132.29 L1244.90 132.34 L1245.90 132.40 L1246.90 132.45 L1247.90 132.50 L1248.90 132.55 L1249.90 132.60 L1250.90 132.64 L1251.90 132.69 L1252.90 132.73 L1253.90 132.77 L1254.90 132.81 L1255.90 132.85 L1256.90 132.89 L1257.90 132.93 L1258.90 132.96 L1259.90 132.99 L1260.90 133.03 L1261.90 133.06 L1262.90 133.09 L1263.90 133.12 L1264.90 133.15 L1265.90 133.18 L1266.90 133.20 L1267.90 133.23 L1268.90 133.26 L1269.90 133.28 L1270.90 133.30 L1271.90 133.33 L1272.90 133.35 L1273.90 133.37 L1274.90 133.39 L1275.90 133.41 L1276.90 133.43 L1277.90 133.45 L1278.90 133.47 L1279.90 133.48 L1280.90 133.50 L1281.90 133.52 L1282.90 133.53 L1283.90 133.55 L1284.90 133.56 L1285.90 133.58 L1286.90 133.59 L1287.90 133.60 L1288.90 133.62 L1289.90 133.63 L1290.90 133.64 L1291.90 133.65 L1292.90 133.67 L1293.90 133.68 L1294.90 133.69 L1295.90 133.70 L1296.90 133.71 L1297.90 133.72 L1298.90 133.73 L1299.90 133.73 L1300.90 133.74 L1306.90 133.79 L1312.90 133.83 L1318.90 133.86 L1324.90 133.88 L1330.90 133.91 L1336.90 133.92 L1342.90 133.94 L1348.90 133.95 L1354.90 133.96 L1360.90 133.97 L1366.90 133.97 L1372.90 133.98 L1378.90 133.98 L1384.90 133.98 L1390.90 133.99 L1396.90 133.99 L1402.90 133.99 L1408.90 133.99 L1414.90 133.99 L1420.90 134.00 L1426.90 134.00 L1432.90 134.00 L1438.90 134.00 L1444.90 134.00 L1450.90 134.00 L1456.90 134.00 L1462.90 134.00 L1468.90 134.00 L1474.90 134.00 L1480.90 134.00 L1486.90 134.00 L1492.90 134.00 L1498.90 134.00 L1504.90 134.00 L1510.90 134.00 L1516.90 134.00 L1522.90 134.00 L1528.90 134.00 L1534.90 134.00 L1540.90 134.00 L1546.90 134.00 L1552.90 134.00 L1558.90 134.00 L1564.90 134.00 L1570.90 134.00 L1576.90 134.00 L1582.90 134.00 L1588.90 134.00 L1594.90 134.00 L1600.90 134.00 L1606.90 134.00 L1612.90 134.00 L1618.90 134.00 L1624.90 134.00 L1630.90 134.00 L1636.90 134.00 L1642.90 134.00 L1648.90 134.00 L1654.90 134.00 L1660.90 134.00 L1666.90 134.00 L1672.90 134.00 L1678.90 134.00 L1684.90 134.00 L1690.90 134.00 L1696.90 134.00 L1702.90 134.00 L1708.90 134.00 L1714.90 134.00 L1720.90 134.00 L1726.90 134.00 L1732.90 134.00 L1738.90 134.00 L1744.90 134.00 L1750.90 134.00 L1756.90 134.00 L1762.90 134.00 L1768.90 134.00 L1774.90 134.00 L1780.90 134.00 L1786.90 134.00 L1792.90 134.00 L1798.90 134.00 L1804.90 134.20 L1808.90 134.39 L1812.90 134.58 L1816.90 134.79 L1820.90 135.00 L1824.90 135.22 L1828.90 135.46 L1832.90 135.71 L1836.90 135.96 L1840.90 136.24 L1844.90 136.52 L1848.90 136.82 L1852.90 137.14 L1856.90 137.48 L1860.90 137.83 L1864.90 138.21 L1868.90 138.61 L1872.90 139.04 L1876.90 139.50 L1880.90 139.98 L1884.90 140.51 L1888.90 141.07 L1892.90 141.67 L1896.90 142.32 L1900.90 143.03 L1904.90 143.80 L1908.90 144.64 L1912.90 145.56 L1916.90 146.57 L1920.90 147.69 L1924.90 148.93 L1928.90 150.31 L1932.90 151.88 L1936.90 153.65 L1940.90 155.67 L1944.90 158.00 L1948.90 160.73 L1952.90 163.95 L1956.90 167.82 L1960.90 172.55 L1964.90 178.47 L1968.90 186.08 L1972.90 196.25 L1976.48 208.75 L1979.53 223.47 L1982.12 240.78 L1984.32 261.15 L1986.19 285.10 L1987.78 313.29 L1987.97 317.29 L1988.15 321.29 L1988.32 325.29 L1988.49 329.29 L1988.65 333.29 L1988.80 337.29 L1988.95 341.29 L1989.09 345.29 L1989.23 349.29 L1989.36 353.29 L1989.49 357.29 L1989.61 361.29 L1989.73 365.29 L1989.85 369.29 L1989.96 373.29 L1990.07 377.29 L1990.18 381.29 L1990.28 385.29 L1990.38 389.29 L1990.47 393.29 L1990.56 397.29 L1990.65 401.29 L1990.74 405.29 L1990.83 409.29 L1990.91 413.29 L1990.99 417.29 L1991.07 421.29 L1991.15 425.29 L1991.22 429.29 L1991.29 433.29 L1991.36 437.29 L1991.43 441.29 L1991.50 445.29 L1991.56 449.29 L1991.63 453.29 L1991.69 457.29 L1991.75 461.29 L1991.81 465.29 L1991.87 469.29 L1991.92 473.29 L1991.98 477.29 L1992.03 481.29 L1992.09 485.29 L1992.14 489.29 L1992.19 493.29 L1992.24 497.29 L1992.29 501.29 L1992.33 505.29 L1992.38 509.29 L1992.43 513.29 L1992.47 517.29 L1992.51 521.29 L1992.56 525.29 L1992.60 529.29 L1992.64 533.29 L1992.68 537.29 L1992.72 541.29 L1992.76 545.29 L1992.80 549.29 L1992.83 553.29 L1992.87 557.29 L1992.91 561.29 L1992.94 565.29 L1992.98 569.29 L1993.01 573.29 L1993.04 577.29 L1993.08 581.29 L1993.11 585.29 L1993.14 589.29 L1993.17 593.29 L1993.20 597.29 L1993.23 601.29 L1993.26 605.29 L1993.29 609.29 L1993.32 613.29 L1993.35 617.29 L1993.38 621.29 L1993.40 625.29 L1993.43 629.29 L1993.46 633.29 L1993.48 637.29 L1993.51 641.29 L1993.66 641.50 L1993.81 642.50 L1993.97 643.50 L1994.14 644.50 L1994.32 645.50 L1994.50 646.50 L1994.70 647.50 L1994.90 648.50 L1995.11 649.50 L1995.34 650.50 L1995.57 651.50 L1995.82 652.50 L1996.09 653.50 L1996.37 654.50 L1996.66 655.50 L1996.98 656.50 L1997.31 657.50 L1997.66 658.50 L1998.04 659.50 L1998.45 660.50 L1998.89 661.50 L1999.35 662.50 L1999.86 663.50 L2000.41 664.50 L2001.00 665.50 L2001.64 666.50 L2002.35 667.50 L2003.13 668.50 L2003.98 669.50 L2004.93 670.50 L2005.98 671.50 L2007.16 672.50 L2008.50 673.50 L2010.02 674.50 L2011.76 675.50 L2013.79 676.50 L2016.16 677.50 L2018.99 678.50 L2022.41 679.50 L2026.64 680.50 L2032.00 681.50 L2039.00 682.50 L2041.10 682.75 L2043.38 683.00 L2045.85 683.25 L2048.55 683.50 L2051.51 683.75 L2054.76 684.00 L2055.50 687.50' stroke='#0000ff' stroke-width='1' fill='none' shape-rendering='crispEdges'/>
<path d='M1161.50 109.50 L1162.50 110.34 L1163.50 111.14 L1164.50 111.93 L1165.50 112.68 L1166.50 113.41 L1167.50 114.12 L1168.50 114.81 L1169.50 115.47 L1170.50 116.11 L1171.50 116.73 L1172.50 117.33 L1173.50 117.91 L1174.50 118.47 L1175.50 119.01 L1176.50 119.53 L1177.50 120.04 L1178.50 120.53 L1179.50 121.01 L1180.50 121.46 L1181.50 121.91 L1182.50 122.34 L1183.50 122.75 L1184.50 123.15 L1185.50 123.54 L1186.50 123.92 L1187.50 124.28 L1188.50 124.63 L1189.50 124.97 L1190.50 125.30 L1191.50 125.62 L1192.50 125.93 L1193.50 126.22 L1194.50 126.51 L1195.50 126.79 L1196.50 127.06 L1197.50 127.32 L1198.50 127.57 L1199.50 127.81 L1200.50 128.05 L1201.50 128.28 L1202.50 128.50 L1203.50 128.71 L1204.50 128.92 L1205.50 129.12 L1206.50 129.31 L1207.50 129.50 L1208.50 129.68 L1209.50 129.85 L1210.50 130.02 L1211.50 130.18 L1212.50 130.34 L1213.50 130.49 L1214.50 130.64 L1215.50 130.78 L1216.50 130.92 L1217.50 131.06 L1218.50 131.19 L1219.50 131.31 L1220.50 131.43 L1221.50 131.55 L1222.50 131.66 L1223.50 131.77 L1224.50 131.88 L1225.50 131.98 L1226.50 132.08 L1227.50 132.17 L1228.50 132.27 L1229.50 132.36 L1230.50 132.44 L1231.50 132.53 L1232.50 132.61 L1233.50 132.69 L1234.50 132.76 L1235.50 132.84 L1236.50 132.91 L1237.50 132.98 L1238.50 133.04 L1239.50 133.11 L1240.50 133.17 L1241.50 133.23 L1242.50 133.29 L1243.50 133.34 L1244.50 133.40 L1245.50 133.45 L1246.50 133.50 L1247.50 133.55 L1248.50 133.60 L1249.50 133.64 L1250.50 133.69 L1251.50 133.73 L1252.50 133.77 L1253.50 133.81 L1254.50 133.85 L1255.50 133.89 L1256.50 133.93 L1257.50 133.96 L1258.50 133.99 L1259.50 134.03 L1260.50 134.06 L1261.50 134.09 L1262.50 134.12 L1263.50 134.15 L1264.50 134.18 L1265.50 134.20 L1266.50 134.23 L1267.50 134.26 L1268.50 134.28 L1269.50 134.30 L1270.50 134.33 L1271.50 134.35 L1272.50 134.37 L1273.50 134.39 L1274.50 134.41 L1275.50 134.43 L1276.50 134.45 L1277.50 134.47 L1278.50 134.48 L1279.50 134.50 L1280.50 134.52 L1281.50 134.53 L1282.50 134.55 L1283.50 134.56 L1284.50 134.58 L1285.50 134.59 L1286.50 134.60 L1287.50 134.62 L1288.50 134.63 L1289.50 134.64 L1290.50 134.65 L1291.50 134.67 L1292.50 134.68 L1293.50 134.69 L1294.50 134.70 L1295.50 134.71 L1296.50 134.72 L1297.50 134.73 L1298.50 134.73 L1299.50 134.74 L1300.50 134.75 L1306.50 134.80 L1312.50 134.83 L1318.50 134.86 L1324.50 134.89 L1330.50 134.91 L1336.50 134.93 L1342.50 134.94 L1348.50 134.95 L1354.50 134.96 L1360.50 134.97 L1366.50 134.97 L1372.50 134.98 L1378.50 134.98 L1384.50 134.98 L1390.50 134.99 L1396.50 134.99 L1402.50 134.99 L1408.50 134.99 L1414.50 134.99 L1420.50 135.00 L1426.50 135.00 L1432.50 135.00 L1438.50 135.00 L1444.50 135.00 L1450.50 135.00 L1456.50 135.00 L1462.50 135.00 L1468.50 135.00 L1474.50 135.00 L1480.50 135.00 L1486.50 135.00 L1492.50 135.00 L1498.50 135.00 L1504.50 135.00 L1510.50 135.00 L1516.50 135.00 L1522.50 135.00 L1528.50 135.00 L1534.50 135.00 L1540.50 135.00 L1546.50 135.00 L1552.50 135.00 L1558.50 135.00 L1564.50 135.00 L1570.50 135.00 L1576.50 135.00 L1582.50 135.00 L1588.50 135.00 L1594.50 135.00 L1600.50 135.00 L1606.50 135.00 L1612.50 135.00 L1618.50 135.00 L1624.50 135.00 L1630.50 135.00 L1636.50 135.00 L1642.50 135.00 L1648.50 135.00 L1654.50 135.00 L1660.50 135.00 L1666.50 135.00 L1672.50 135.00 L1678.50 135.00 L1684.50 135.00 L1690.50 135.00 L1696.50 135.00 L1702.50 135.00 L1708.50 135.00 L1714.50 135.00 L1720.50 135.00 L1726.50 135.00 L1732.50 135.00 L1738.50 135.00 L1744.50 135.00 L1750.50 135.00 L1756.50 135.00 L1762.50 135.00 L1768.50 135.00 L1774.50 135.00 L1780.50 135.00 L1786.50 135.00 L1792.50 135.00 L1798.50 135.00 L1804.50 135.18 L1808.50 135.36 L1812.50 135.56 L1816.50 135.76 L1820.50 135.98 L1824.50 136.20 L1828.50 136.43 L1832.50 136.68 L1836.50 136.94 L1840.50 137.21 L1844.50 137.50 L1848.50 137.80 L1852.50 138.12 L1856.50 138.46 L1860.50 138.82 L1864.50 139.21 L1868.50 139.61 L1872.50 140.05 L1876.50 140.52 L1880.50 141.02 L1884.50 141.56 L1888.50 142.13 L1892.50 142.76 L1896.50 143.44 L1900.50 144.18 L1904.50 144.99 L1908.50 145.88 L1912.50 146.85 L1916.50 147.93 L1920.50 149.14 L1924.50 150.48 L1928.50 152.00 L1932.50 153.73 L1936.50 155.71 L1940.50 158.00 L1944.50 160.69 L1948.50 163.88 L1952.50 167.73 L1956.50 172.46 L1960.50 178.44 L1964.50 186.21 L1968.50 196.71 L1971.90 209.07 L1974.79 223.61 L1977.24 240.71 L1979.33 260.84 L1981.10 284.51 L1982.61 312.37 L1982.79 316.37 L1982.97 320.37 L1983.13 324.37 L1983.29 328.37 L1983.44 332.37 L1983.59 336.37 L1983.73 340.37 L1983.87 344.37 L1984.00 348.37 L1984.13 352.37 L1984.25 356.37 L1984.37 360.37 L1984.48 364.37 L1984.59 368.37 L1984.70 372.37 L1984.80 376.37 L1984.90 380.37 L1985.00 384.37 L1985.09 388.37 L1985.19 392.37 L1985.27 396.37 L1985.36 400.37 L1985.44 404.37 L1985.52 408.37 L1985.60 412.37 L1985.68 416.37 L1985.75 420.37 L1985.83 424.37 L1985.90 428.37 L1985.97 432.37 L1986.03 436.37 L1986.10 440.37 L1986.16 444.37 L1986.22 448.37 L1986.29 452.37 L1986.34 456.37 L1986.40 460.37 L1986.46 464.37 L1986.51 468.37 L1986.57 472.37 L1986.62 476.37 L1986.67 480.37 L1986.72 484.37 L1986.77 488.37 L1986.82 492.37 L1986.87 496.37 L1986.91 500.37 L1986.96 504.37 L1987.00 508.37 L1987.04 512.37 L1987.09 516.37 L1987.13 520.37 L1987.17 524.37 L1987.21 528.37 L1987.25 532.37 L1987.28 536.37 L1987.32 540.37 L1987.36 544.37 L1987.39 548.37 L1987.43 552.37 L1987.46 556.37 L1987.50 560.37 L1987.53 564.37 L1987.57 568.37 L1987.60 572.37 L1987.63 576.37 L1987.66 580.37 L1987.69 584.37 L1987.72 588.37 L1987.75 592.37 L1987.78 596.37 L1987.81 600.37 L1987.84 604.37 L1987.86 608.37 L1987.89 612.37 L1987.92 616.37 L1987.94 620.37 L1987.97 624.37 L1987.99 628.37 L1988.02 632.37 L1988.04 636.37 L1988.07 640.37 L1988.09 644.37 L1988.24 641.50 L1988.39 642.50 L1988.55 643.50 L1988.72 644.50 L1988.89 645.50 L1989.07 646.50 L1989.27 647.50 L1989.47 648.50 L1989.68 649.50 L1989.90 650.50 L1990.13 651.50 L1990.38 652.50 L1990.64 653.50 L1990.91 654.50 L1991.21 655.50 L1991.52 656.50 L1991.84 657.50 L1992.20 658.50 L1992.57 659.50 L1992.97 660.50 L1993.40 661.50 L1993.86 662.50 L1994.36 663.50 L1994.90 664.50 L1995.49 665.50 L1996.13 666.50 L1996.82 667.50 L1997.59 668.50 L1998.43 669.50 L1999.37 670.50 L2000.41 671.50 L2001.58 672.50 L2002.89 673.50 L2004.39 674.50 L2006.12 675.50 L2008.11 676.50 L2010.46 677.50 L2013.25 678.50 L2016.63 679.50 L2020.81 680.50 L2026.10 681.50 L2033.01 682.50 L2035.09 682.75 L2037.34 683.00 L2039.78 683.25 L2042.45 683.50 L2045.37 683.75 L2048.58 684.00 L2052.13 684.25 L2055.50 687.50' stroke='#0000ff' stroke-width='1' fill='none' shape-rendering='crispEdges'/>
<path d='M1162.20 111.50 L1163.20 112.43 L1164.20 113.34 L1165.20 114.21 L1166.20 115.06 L1167.20 115.88 L1168.20 116.67 L1169.20 117.43 L1170.20 118.17 L1171.20 118.89 L1172.20 119.58 L1173.20 120.25 L1174.20 120.90 L1175.20 121.52 L1176.20 122.13 L1177.20 122.71 L1178.20 123.28 L1179.20 123.83 L1180.20 124.36 L1181.20 124.87 L1182.20 125.37 L1183.20 125.85 L1184.20 126.31 L1185.20 126.76 L1186.20 127.19 L1187.20 127.61 L1188.20 128.02 L1189.20 128.41 L1190.20 128.79 L1191.20 129.16 L1192.20 129.52 L1193.20 129.86 L1194.20 130.19 L1195.20 130.51 L1196.20 130.82 L1197.20 131.13 L1198.20 131.42 L1199.20 131.70 L1200.20 131.97 L1201.20 132.23 L1202.20 132.49 L1203.20 132.73 L1204.20 132.97 L1205.20 133.20 L1206.20 133.43 L1207.20 133.64 L1208.20 133.85 L1209.20 134.05 L1210.20 134.25 L1211.20 134.43 L1212.20 134.62 L1213.20 134.79 L1214.20 134.96 L1215.20 135.13 L1216.20 135.29 L1217.20 135.44 L1218.20 135.59 L1219.20 135.74 L1220.20 135.88 L1221.20 136.01 L1222.20 136.14 L1223.20 136.27 L1224.20 136.39 L1225.20 136.51 L1226.20 136.62 L1227.20 136.74 L1228.20 136.84 L1229.20 136.95 L1230.20 137.05 L1231.20 137.14 L1232.20 137.24 L1233.20 137.33 L1234.20 137.41 L1235.20 137.50 L1236.20 137.58 L1237.20 137.66 L1238.20 137.74 L1239.20 137.81 L1240.20 137.88 L1241.20 137.95 L1242.20 138.02 L1243.20 138.08 L1244.20 138.15 L1245.20 138.21 L1246.20 138.27 L1247.20 138.32 L1248.20 138.38 L1249.20 138.43 L1250.20 138.48 L1251.20 138.53 L1252.20 138.58 L1253.20 138.63 L1254.20 138.67 L1255.20 138.72 L1256.20 138.76 L1257.20 138.80 L1258.20 138.84 L1259.20 138.88 L1260.20 138.91 L1261.20 138.95 L1262.20 138.98 L1263.20 139.02 L1264.20 139.05 L1265.20 139.08 L1266.20 139.11 L1267.20 139.14 L1268.20 139.17 L1269.20 139.19 L1270.20 139.22 L1271.20 139.25 L1272.20 139.27 L1273.20 139.30 L1274.20 139.32 L1275.20 139.34 L1276.20 139.36 L1277.20 139.38 L1278.20 139.40 L1279.20 139.42 L1280.20 139.44 L1281.20 139.46 L1282.20 139.48 L1283.20 139.50 L1284.20 139.51 L1285.20 139.53 L1286.20 139.54 L1287.20 139.56 L1288.20 139.57 L1289.20 139.59 L1290.20 139.60 L1291.20 139.61 L1292.20 139.63 L1293.20 139.64 L1294.20 139.65 L1295.20 139.66 L1296.20 139.67 L1297.20 139.68 L1298.20 139.69 L1299.20 139.70 L1300.20 139.71 L1301.20 139.72 L1307.20 139.77 L1313.20 139.81 L1319.20 139.85 L1325.20 139.88 L1331.20 139.90 L1337.20 139.92 L1343.20 139.93 L1349.20 139.94 L1355.20 139.95 L1361.20 139.96 L1367.20 139.97 L1373.20 139.97 L1379.20 139.98 L1385.20 139.98 L1391.20 139.99 L1397.20 139.99 L1403.20 139.99 L1409.20 139.99 L1415.20 139.99 L1421.20 139.99 L1427.20 140.00 L1433.20 140.00 L1439.20 140.00 L1445.20 140.00 L1451.20 140.00 L1457.20 140.00 L1463.20 140.00 L1469.20 140.00 L1475.20 140.00 L1481.20 140.00 L1487.20 140.00 L1493.20 140.00 L1499.20 140.00 L1505.20 140.00 L1511.20 140.00 L1517.20 140.00 L1523.20 140.00 L1529.20 140.00 L1535.20 140.00 L1541.20 140.00 L1547.20 140.00 L1553.20 140.00 L1559.20 140.00 L1565.20 140.00 L1571.20 140.00 L1577.20 140.00 L1583.20 140.00 L1589.20 140.00 L1595.20 140.00 L1601.20 140.00 L1607.20 140.00 L1613.20 140.00 L1619.20 140.00 L1625.20 140.00 L1631.20 140.00 L1637.20 140.00 L1643.20 140.00 L1649.20 140.00 L1655.20 140.00 L1661.20 140.00 L1667.20 140.00 L1673.20 140.00 L1679.20 140.00 L1685.20 140.00 L1691.20 140.00 L1697.20 140.00 L1703.20 140.00 L1709.20 140.00 L1715.20 140.00 L1721.20 140.00 L1727.20 140.00 L1733.20 140.00 L1739.20 140.00 L1745.20 140.00 L1751.20 140.00 L1757.20 140.00 L1763.20 140.00 L1769.20 140.00 L1775.20 140.00 L1781.20 140.00 L1787.20 140.00 L1793.20 140.00 L1799.20 140.00 L1805.20 140.21 L1809.20 140.40 L1813.20 140.60 L1817.20 140.81 L1821.20 141.02 L1825.20 141.25 L1829.20 141.49 L1833.20 141.75 L1837.20 142.01 L1841.20 142.30 L1845.20 142.59 L1849.20 142.91 L1853.20 143.24 L1857.20 143.60 L1861.20 143.98 L1865.20 144.38 L1869.20 144.82 L1873.20 145.28 L1877.20 145.78 L1881.20 146.32 L1885.20 146.90 L1889.20 147.53 L1893.20 148.22 L1897.20 148.97 L1901.20 149.79 L1905.20 150.69 L1909.20 151.69 L1913.20 152.80 L1917.20 154.05 L1921.20 155.46 L1925.20 157.05 L1929.20 158.88 L1933.20 160.99 L1937.20 163.47 L1941.20 166.41 L1945.20 169.95 L1949.20 174.29 L1953.20 179.77 L1957.20 186.87 L1961.20 196.44 L1964.64 207.82 L1967.57 221.21 L1970.06 236.96 L1972.17 255.50 L1973.97 277.30 L1975.50 302.95 L1975.70 306.95 L1975.88 310.95 L1976.06 314.95 L1976.24 318.95 L1976.40 322.95 L1976.56 326.95 L1976.72 330.95 L1976.86 334.95 L1977.00 338.95 L1977.14 342.95 L1977.27 346.95 L1977.39 350.95 L1977.52 354.95 L1977.63 358.95 L1977.75 362.95 L1977.85 366.95 L1977.96 370.95 L1978.06 374.95 L1978.16 378.95 L1978.26 382.95 L1978.35 386.95 L1978.44 390.95 L1978.53 394.95 L1978.61 398.95 L1978.69 402.95 L1978.77 406.95 L1978.85 410.95 L1978.92 414.95 L1979.00 418.95 L1979.07 422.95 L1979.14 426.95 L1979.20 430.95 L1979.27 434.95 L1979.33 438.95 L1979.39 442.95 L1979.45 446.95 L1979.51 450.95 L1979.57 454.95 L1979.63 458.95 L1979.68 462.95 L1979.74 466.95 L1979.79 470.95 L1979.84 474.95 L1979.89 478.95 L1979.94 482.95 L1979.98 486.95 L1980.03 490.95 L1980.08 494.95 L1980.12 498.95 L1980.16 502.95 L1980.21 506.95 L1980.25 510.95 L1980.29 514.95 L1980.33 518.95 L1980.37 522.95 L1980.41 526.95 L1980.44 530.95 L1980.48 534.95 L1980.52 538.95 L1980.55 542.95 L1980.59 546.95 L1980.62 550.95 L1980.65 554.95 L1980.69 558.95 L1980.72 562.95 L1980.75 566.95 L1980.78 570.95 L1980.81 574.95 L1980.84 578.95 L1980.87 582.95 L1980.90 586.95 L1980.93 590.95 L1980.96 594.95 L1980.98 598.95 L1981.01 602.95 L1981.04 606.95 L1981.06 610.95 L1981.09 614.95 L1981.11 618.95 L1981.14 622.95 L1981.16 626.95 L1981.19 630.95 L1981.21 634.95 L1981.23 638.95 L1981.26 642.95 L1981.40 641.50 L1981.55 642.50 L1981.71 643.50 L1981.87 644.50 L1982.05 645.50 L1982.23 646.50 L1982.42 647.50 L1982.61 648.50 L1982.82 649.50 L1983.04 650.50 L1983.27 651.50 L1983.51 652.50 L1983.77 653.50 L1984.04 654.50 L1984.33 655.50 L1984.64 656.50 L1984.96 657.50 L1985.31 658.50 L1985.68 659.50 L1986.07 660.50 L1986.50 661.50 L1986.96 662.50 L1987.45 663.50 L1987.98 664.50 L1988.56 665.50 L1989.19 666.50 L1989.88 667.50 L1990.63 668.50 L1991.47 669.50 L1992.39 670.50 L1993.42 671.50 L1994.57 672.50 L1995.87 673.50 L1997.35 674.50 L1999.05 675.50 L2001.03 676.50 L2003.34 677.50 L2006.10 678.50 L2009.44 679.50 L2013.56 680.50 L2018.78 681.50 L2025.61 682.50 L2027.66 682.75 L2029.88 683.00 L2032.29 683.25 L2034.92 683.50 L2037.80 683.75 L2040.98 684.00 L2044.48 684.25 L2048.37 684.50 L2052.72 684.75 L2055.50 687.50' stroke='#0000ff' stroke-width='1' fill='none' shape-rendering='crispEdges'/>
<path d='M1162.90 113.50 L1163.90 114.42 L1164.90 115.31 L1165.90 116.16 L1166.90 117.00 L1167.90 117.80 L1168.90 118.58 L1169.90 119.33 L1170.90 120.05 L1171.90 120.76 L1172.90 121.44 L1173.90 122.09 L1174.90 122.73 L1175.90 123.35 L1176.90 123.94 L1177.90 124.52 L1178.90 125.07 L1179.90 125.61 L1180.90 126.13 L1181.90 126.64 L1182.90 127.12 L1183.90 127.60 L1184.90 128.05 L1185.90 128.49 L1186.90 128.92 L1187.90 129.33 L1188.90 129.73 L1189.90 130.12 L1190.90 130.49 L1191.90 130.85 L1192.90 131.20 L1193.90 131.54 L1194.90 131.86 L1195.90 132.18 L1196.90 132.49 L1197.90 132.78 L1198.90 133.07 L1199.90 133.34 L1200.90 133.61 L1201.90 133.87 L1202.90 134.12 L1203.90 134.36 L1204.90 134.60 L1205.90 134.82 L1206.90 135.04 L1207.90 135.25 L1208.90 135.46 L1209.90 135.66 L1210.90 135.85 L1211.90 136.03 L1212.90 136.21 L1213.90 136.38 L1214.90 136.55 L1215.90 136.71 L1216.90 136.87 L1217.90 137.02 L1218.90 137.17 L1219.90 137.31 L1220.90 137.45 L1221.90 137.58 L1222.90 137.71 L1223.90 137.83 L1224.90 137.96 L1225.90 138.07 L1226.90 138.18 L1227.90 138.29 L1228.90 138.40 L1229.90 138.50 L1230.90 138.60 L1231.90 138.69 L1232.90 138.78 L1233.90 138.87 L1234.90 138.96 L1235.90 139.04 L1236.90 139.12 L1237.90 139.20 L1238.90 139.28 L1239.90 139.35 L1240.90 139.42 L1241.90 139.49 L1242.90 139.55 L1243.90 139.62 L1244.90 139.68 L1245.90 139.74 L1246.90 139.80 L1247.90 139.85 L1248.90 139.91 L1249.90 139.96 L1250.90 140.01 L1251.90 140.06 L1252.90 140.11 L1253.90 140.15 L1254.90 140.20 L1255.90 140.24 L1256.90 140.28 L1257.90 140.32 L1258.90 140.36 L1259.90 140.40 L1260.90 140.43 L1261.90 140.47 L1262.90 140.50 L1263.90 140.53 L1264.90 140.57 L1265.90 140.60 L1266.90 140.63 L1267.90 140.65 L1268.90 140.68 L1269.90 140.71 L1270.90 140.73 L1271.90 140.76 L1272.90 140.78 L1273.90 140.81 L1274.90 140.83 L1275.90 140.85 L1276.90 140.87 L1277.90 140.89 L1278.90 140.91 L1279.90 140.93 L1280.90 140.95 L1281.90 140.97 L1282.90 140.99 L1283.90 141.00 L1284.90 141.02 L1285.90 141.04 L1286.90 141.05 L1287.90 141.07 L1288.90 141.08 L1289.90 141.09 L1290.90 141.11 L1291.90 141.12 L1292.90 141.13 L1293.90 141.14 L1294.90 141.16 L1295.90 141.17 L1296.90 141.18 L1297.90 141.19 L1298.90 141.20 L1299.90 141.21 L1300.90 141.22 L1306.90 141.27 L1312.90 141.31 L1318.90 141.35 L1324.90 141.37 L1330.90 141.40 L1336.90 141.42 L1342.90 141.43 L1348.90 141.44 L1354.90 141.45 L1360.90 141.46 L1366.90 141.47 L1372.90 141.47 L1378.90 141.48 L1384.90 141.48 L1390.90 141.49 L1396.90 141.49 L1402.90 141.49 L1408.90 141.49 L1414.90 141.49 L1420.90 141.49 L1426.90 141.50 L1432.90 141.50 L1438.90 141.50 L1444.90 141.50 L1450.90 141.50 L1456.90 141.50 L1462.90 141.50 L1468.90 141.50 L1474.90 141.50 L1480.90 141.50 L1486.90 141.50 L1492.90 141.50 L1498.90 141.50 L1504.90 141.50 L1510.90 141.50 L1516.90 141.50 L1522.90 141.50 L1528.90 141.50 L1534.90 141.50 L1540.90 141.50 L1546.90 141.50 L1552.90 141.50 L1558.90 141.50 L1564.90 141.50 L1570.90 141.50 L1576.90 141.50 L1582.90 141.50 L1588.90 141.50 L1594.90 141.50 L1600.90 141.50 L1606.90 141.50 L1612.90 141.50 L1618.90 141.50 L1624.90 141.50 L1630.90 141.50 L1636.90 141.50 L1642.90 141.50 L1648.90 141.50 L1654.90 141.50 L1660.90 141.50 L1666.90 141.50 L1672.90 141.50 L1678.90 141.50 L1684.90 141.50 L1690.90 141.50 L1696.90 141.50 L1702.90 141.50 L1708.90 141.50 L1714.90 141.50 L1720.90 141.50 L1726.90 141.50 L1732.90 141.50 L1738.90 141.50 L1744.90 141.50 L1750.90 141.50 L1756.90 141.50 L1762.90 141.50 L1768.90 141.50 L1774.90 141.50 L1780.90 141.50 L1786.90 141.50 L1792.90 141.50 L1798.90 141.50 L1804.90 141.72 L1808.90 141.93 L1812.90 142.16 L1816.90 142.39 L1820.90 142.64 L1824.90 142.90 L1828.90 143.18 L1832.90 143.47 L1836.90 143.79 L1840.90 144.12 L1844.90 144.47 L1848.90 144.85 L1852.90 145.25 L1856.90 145.68 L1860.90 146.15 L1864.90 146.65 L1868.90 147.19 L1872.90 147.78 L1876.90 148.41 L1880.90 149.11 L1884.90 149.88 L1888.90 150.72 L1892.90 151.65 L1896.90 152.69 L1900.90 153.85 L1904.90 155.16 L1908.90 156.65 L1912.90 158.35 L1916.90 160.32 L1920.90 162.63 L1924.90 165.38 L1928.90 168.68 L1932.90 172.75 L1936.90 177.87 L1940.90 184.53 L1944.90 193.51 L1948.32 204.14 L1951.23 216.64 L1953.70 231.35 L1955.81 248.66 L1957.59 269.02 L1959.11 292.97 L1960.40 321.15 L1960.55 325.15 L1960.70 329.15 L1960.84 333.15 L1960.98 337.15 L1961.11 341.15 L1961.23 345.15 L1961.35 349.15 L1961.47 353.15 L1961.58 357.15 L1961.69 361.15 L1961.79 365.15 L1961.89 369.15 L1961.99 373.15 L1962.08 377.15 L1962.17 381.15 L1962.26 385.15 L1962.35 389.15 L1962.43 393.15 L1962.51 397.15 L1962.59 401.15 L1962.66 405.15 L1962.74 409.15 L1962.81 413.15 L1962.88 417.15 L1962.94 421.15 L1963.01 425.15 L1963.07 429.15 L1963.13 433.15 L1963.19 437.15 L1963.25 441.15 L1963.31 445.15 L1963.37 449.15 L1963.42 453.15 L1963.47 457.15 L1963.53 461.15 L1963.58 465.15 L1963.63 469.15 L1963.67 473.15 L1963.72 477.15 L1963.77 481.15 L1963.81 485.15 L1963.86 489.15 L1963.90 493.15 L1963.94 497.15 L1963.98 501.15 L1964.02 505.15 L1964.06 509.15 L1964.10 513.15 L1964.14 517.15 L1964.17 521.15 L1964.21 525.15 L1964.25 529.15 L1964.28 533.15 L1964.31 537.15 L1964.35 541.15 L1964.38 545.15 L1964.41 549.15 L1964.44 553.15 L1964.47 557.15 L1964.50 561.15 L1964.53 565.15 L1964.56 569.15 L1964.59 573.15 L1964.62 577.15 L1964.65 581.15 L1964.68 585.15 L1964.70 589.15 L1964.73 593.15 L1964.75 597.15 L1964.78 601.15 L1964.80 605.15 L1964.83 609.15 L1964.85 613.15 L1964.88 617.15 L1964.90 621.15 L1964.92 625.15 L1964.95 629.15 L1964.97 633.15 L1964.99 637.15 L1965.01 641.15 L1965.15 641.50 L1965.30 642.50 L1965.46 643.50 L1965.62 644.50 L1965.79 645.50 L1965.97 646.50 L1966.15 647.50 L1966.35 648.50 L1966.55 649.50 L1966.77 650.50 L1967.00 651.50 L1967.24 652.50 L1967.49 653.50 L1967.76 654.50 L1968.04 655.50 L1968.35 656.50 L1968.67 657.50 L1969.01 658.50 L1969.38 659.50 L1969.77 660.50 L1970.19 661.50 L1970.64 662.50 L1971.12 663.50 L1971.65 664.50 L1972.22 665.50 L1972.84 666.50 L1973.52 667.50 L1974.27 668.50 L1975.09 669.50 L1976.00 670.50 L1977.01 671.50 L1978.15 672.50 L1979.44 673.50 L1980.90 674.50 L1982.58 675.50 L1984.53 676.50 L1986.81 677.50 L1989.53 678.50 L1992.83 679.50 L1996.90 680.50 L2002.05 681.50 L2008.79 682.50 L2010.82 682.75 L2013.01 683.00 L2015.39 683.25 L2017.99 683.50 L2020.83 683.75 L2023.96 684.00 L2027.42 684.25 L2031.27 684.50 L2035.56 684.75 L2040.39 685.00 L2045.87 685.25 L2052.13 685.50 L2055.50 687.50' stroke='#0000ff' stroke-width='1' fill='none' shape-rendering='crispEdges'/>
<path d='M1161.50 115.50 L1162.50 116.45 L1163.50 117.37 L1164.50 118.26 L1165.50 119.12 L1166.50 119.95 L1167.50 120.76 L1168.50 121.54 L1169.50 122.29 L1170.50 123.02 L1171.50 123.72 L1172.50 124.40 L1173.50 125.06 L1174.50 125.70 L1175.50 126.31 L1176.50 126.91 L1177.50 127.49 L1178.50 128.05 L1179.50 128.58 L1180.50 129.11 L1181.50 129.61 L1182.50 130.10 L1183.50 130.57 L1184.50 131.03 L1185.50 131.47 L1186.50 131.90 L1187.50 132.31 L1188.50 132.71 L1189.50 133.10 L1190.50 133.47 L1191.50 133.83 L1192.50 134.18 L1193.50 134.52 L1194.50 134.85 L1195.50 135.16 L1196.50 135.47 L1197.50 135.77 L1198.50 136.05 L1199.50 136.33 L1200.50 136.60 L1201.50 136.86 L1202.50 137.11 L1203.50 137.35 L1204.50 137.58 L1205.50 137.81 L1206.50 138.03 L1207.50 138.24 L1208.50 138.45 L1209.50 138.65 L1210.50 138.84 L1211.50 139.02 L1212.50 139.20 L1213.50 139.38 L1214.50 139.54 L1215.50 139.71 L1216.50 139.86 L1217.50 140.02 L1218.50 140.16 L1219.50 140.30 L1220.50 140.44 L1221.50 140.58 L1222.50 140.70 L1223.50 140.83 L1224.50 140.95 L1225.50 141.07 L1226.50 141.18 L1227.50 141.29 L1228.50 141.39 L1229.50 141.49 L1230.50 141.59 L1231.50 141.69 L1232.50 141.78 L1233.50 141.87 L1234.50 141.96 L1235.50 142.04 L1236.50 142.12 L1237.50 142.20 L1238.50 142.27 L1239.50 142.35 L1240.50 142.42 L1241.50 142.48 L1242.50 142.55 L1243.50 142.61 L1244.50 142.68 L1245.50 142.74 L1246.50 142.79 L1247.50 142.85 L1248.50 142.90 L1249.50 142.96 L1250.50 143.01 L1251.50 143.06 L1252.50 143.10 L1253.50 143.15 L1254.50 143.19 L1255.50 143.24 L1256.50 143.28 L1257.50 143.32 L1258.50 143.36 L1259.50 143.39 L1260.50 143.43 L1261.50 143.47 L1262.50 143.50 L1263.50 143.53 L1264.50 143.56 L1265.50 143.59 L1266.50 143.62 L1267.50 143.65 L1268.50 143.68 L1269.50 143.71 L1270.50 143.73 L1271.50 143.76 L1272.50 143.78 L1273.50 143.81 L1274.50 143.83 L1275.50 143.85 L1276.50 143.87 L1277.50 143.89 L1278.50 143.91 L1279.50 143.93 L1280.50 143.95 L1281.50 143.97 L1282.50 143.99 L1283.50 144.00 L1284.50 144.02 L1285.50 144.04 L1286.50 144.05 L1287.50 144.07 L1288.50 144.08 L1289.50 144.09 L1290.50 144.11 L1291.50 144.12 L1292.50 144.13 L1293.50 144.14 L1294.50 144.16 L1295.50 144.17 L1296.50 144.18 L1297.50 144.19 L1298.50 144.20 L1299.50 144.21 L1300.50 144.22 L1306.50 144.27 L1312.50 144.31 L1318.50 144.35 L1324.50 144.37 L1330.50 144.40 L1336.50 144.42 L1342.50 144.43 L1348.50 144.44 L1354.50 144.45 L1360.50 144.46 L1366.50 144.47 L1372.50 144.47 L1378.50 144.48 L1384.50 144.48 L1390.50 144.49 L1396.50 144.49 L1402.50 144.49 L1408.50 144.49 L1414.50 144.49 L1420.50 144.49 L1426.50 144.50 L1432.50 144.50 L1438.50 144.50 L1444.50 144.50 L1450.50 144.50 L1456.50 144.50 L1462.50 144.50 L1468.50 144.50 L1474.50 144.50 L1480.50 144.50 L1486.50 144.50 L1492.50 144.50 L1498.50 144.50 L1504.50 144.50 L1510.50 144.50 L1516.50 144.50 L1522.50 144.50 L1528.50 144.50 L1534.50 144.50 L1540.50 144.50 L1546.50 144.50 L1552.50 144.50 L1558.50 144.50 L1564.50 144.50 L1570.50 144.50 L1576.50 144.50 L1582.50 144.50 L1588.50 144.50 L1594.50 144.50 L1600.50 144.50 L1606.50 144.50 L1612.50 144.50 L1618.50 144.50 L1624.50 144.50 L1630.50 144.50 L1636.50 144.50 L1642.50 144.50 L1648.50 144.50 L1654.50 144.50 L1660.50 144.50 L1666.50 144.50 L1672.50 144.50 L1678.50 144.50 L1684.50 144.50 L1690.50 144.50 L1696.50 144.50 L1702.50 144.50 L1708.50 144.50 L1714.50 144.50 L1720.50 144.50 L1726.50 144.50 L1732.50 144.50 L1738.50 144.50 L1744.50 144.50 L1750.50 144.50 L1756.50 144.50 L1762.50 144.50 L1768.50 144.50 L1774.50 144.50 L1780.50 144.50 L1786.50 144.50 L1792.50 144.50 L1798.50 144.50 L1804.50 144.69 L1808.50 144.90 L1812.50 145.11 L1816.50 145.34 L1820.50 145.57 L1824.50 145.83 L1828.50 146.09 L1832.50 146.37 L1836.50 146.67 L1840.50 146.99 L1844.50 147.33 L1848.50 147.70 L1852.50 148.09 L1856.50 148.51 L1860.50 148.96 L1864.50 149.45 L1868.50 149.98 L1872.50 150.55 L1876.50 151.18 L1880.50 151.86 L1884.50 152.62 L1888.50 153.45 L1892.50 154.38 L1896.50 155.42 L1900.50 156.58 L1904.50 157.90 L1908.50 159.41 L1912.50 161.15 L1916.50 163.19 L1920.50 165.59 L1924.50 168.47 L1928.50 171.99 L1932.50 176.40 L1936.50 182.06 L1940.50 189.61 L1944.10 198.94 L1947.16 209.91 L1949.76 222.82 L1951.97 238.00 L1953.85 255.86 L1955.44 276.88 L1956.80 301.61 L1956.98 305.61 L1957.16 309.61 L1957.32 313.61 L1957.48 317.61 L1957.63 321.61 L1957.78 325.61 L1957.92 329.61 L1958.05 333.61 L1958.18 337.61 L1958.30 341.61 L1958.42 345.61 L1958.54 349.61 L1958.65 353.61 L1958.75 357.61 L1958.85 361.61 L1958.95 365.61 L1959.05 369.61 L1959.14 373.61 L1959.23 377.61 L1959.31 381.61 L1959.40 385.61 L1959.48 389.61 L1959.56 393.61 L1959.63 397.61 L1959.70 401.61 L1959.78 405.61 L1959.85 409.61 L1959.91 413.61 L1959.98 417.61 L1960.04 421.61 L1960.10 425.61 L1960.16 429.61 L1960.22 433.61 L1960.28 437.61 L1960.33 441.61 L1960.39 445.61 L1960.44 449.61 L1960.49 453.61 L1960.54 457.61 L1960.59 461.61 L1960.64 465.61 L1960.68 469.61 L1960.73 473.61 L1960.77 477.61 L1960.82 481.61 L1960.86 485.61 L1960.90 489.61 L1960.94 493.61 L1960.98 497.61 L1961.02 501.61 L1961.05 505.61 L1961.09 509.61 L1961.13 513.61 L1961.16 517.61 L1961.20 521.61 L1961.23 525.61 L1961.26 529.61 L1961.30 533.61 L1961.33 537.61 L1961.36 541.61 L1961.39 545.61 L1961.42 549.61 L1961.45 553.61 L1961.48 557.61 L1961.51 561.61 L1961.54 565.61 L1961.56 569.61 L1961.59 573.61 L1961.62 577.61 L1961.64 581.61 L1961.67 585.61 L1961.69 589.61 L1961.72 593.61 L1961.74 597.61 L1961.76 601.61 L1961.79 605.61 L1961.81 609.61 L1961.83 613.61 L1961.86 617.61 L1961.88 621.61 L1961.90 625.61 L1961.92 629.61 L1961.94 633.61 L1961.96 637.61 L1961.98 641.61 L1962.12 641.50 L1962.27 642.50 L1962.42 643.50 L1962.58 644.50 L1962.75 645.50 L1962.92 646.50 L1963.11 647.50 L1963.30 648.50 L1963.50 649.50 L1963.72 650.50 L1963.94 651.50 L1964.18 652.50 L1964.43 653.50 L1964.69 654.50 L1964.98 655.50 L1965.27 656.50 L1965.59 657.50 L1965.93 658.50 L1966.29 659.50 L1966.67 660.50 L1967.09 661.50 L1967.53 662.50 L1968.01 663.50 L1968.53 664.50 L1969.10 665.50 L1969.71 666.50 L1970.38 667.50 L1971.12 668.50 L1971.93 669.50 L1972.83 670.50 L1973.83 671.50 L1974.95 672.50 L1976.22 673.50 L1977.66 674.50 L1979.32 675.50 L1981.24 676.50 L1983.50 677.50 L1986.18 678.50 L1989.44 679.50 L1993.45 680.50 L1998.54 681.50 L2005.19 682.50 L2007.19 682.75 L2009.35 683.00 L2011.70 683.25 L2014.27 683.50 L2017.08 683.75 L2020.17 684.00 L2023.58 684.25 L2027.37 684.50 L2031.61 684.75 L2036.38 685.00 L2041.79 685.25 L2047.97 685.50 L2055.10 685.75 L2055.50 687.50' stroke='#0000ff' stroke-width='1' fill='none' shape-rendering='crispEdges'/>
<path d='M1162.20 116.50 L1163.20 117.47 L1164.20 118.40 L1165.20 119.31 L1166.20 120.18 L1167.20 121.03 L1168.20 121.85 L1169.20 122.64 L1170.20 123.41 L1171.20 124.15 L1172.20 124.86 L1173.20 125.56 L1174.20 126.23 L1175.20 126.87 L1176.20 127.50 L1177.20 128.11 L1178.20 128.69 L1179.20 129.26 L1180.20 129.81 L1181.20 130.34 L1182.20 130.85 L1183.20 131.35 L1184.20 131.83 L1185.20 132.30 L1186.20 132.74 L1187.20 133.18 L1188.20 133.60 L1189.20 134.01 L1190.20 134.40 L1191.20 134.78 L1192.20 135.15 L1193.20 135.50 L1194.20 135.85 L1195.20 136.18 L1196.20 136.50 L1197.20 136.81 L1198.20 137.11 L1199.20 137.41 L1200.20 137.69 L1201.20 137.96 L1202.20 138.22 L1203.20 138.48 L1204.20 138.73 L1205.20 138.96 L1206.20 139.19 L1207.20 139.42 L1208.20 139.63 L1209.20 139.84 L1210.20 140.04 L1211.20 140.24 L1212.20 140.43 L1213.20 140.61 L1214.20 140.79 L1215.20 140.96 L1216.20 141.12 L1217.20 141.28 L1218.20 141.44 L1219.20 141.59 L1220.20 141.73 L1221.20 141.87 L1222.20 142.01 L1223.20 142.14 L1224.20 142.27 L1225.20 142.39 L1226.20 142.51 L1227.20 142.62 L1228.20 142.73 L1229.20 142.84 L1230.20 142.94 L1231.20 143.04 L1232.20 143.14 L1233.20 143.23 L1234.20 143.32 L1235.20 143.41 L1236.20 143.50 L1237.20 143.58 L1238.20 143.66 L1239.20 143.73 L1240.20 143.81 L1241.20 143.88 L1242.20 143.95 L1243.20 144.02 L1244.20 144.08 L1245.20 144.15 L1246.20 144.21 L1247.20 144.26 L1248.20 144.32 L1249.20 144.38 L1250.20 144.43 L1251.20 144.48 L1252.20 144.53 L1253.20 144.58 L1254.20 144.63 L1255.20 144.67 L1256.20 144.71 L1257.20 144.76 L1258.20 144.80 L1259.20 144.84 L1260.20 144.88 L1261.20 144.91 L1262.20 144.95 L1263.20 144.98 L1264.20 145.02 L1265.20 145.05 L1266.20 145.08 L1267.20 145.11 L1268.20 145.14 L1269.20 145.17 L1270.20 145.19 L1271.20 145.22 L1272.20 145.25 L1273.20 145.27 L1274.20 145.29 L1275.20 145.32 L1276.20 145.34 L1277.20 145.36 L1278.20 145.38 L1279.20 145.40 L1280.20 145.42 L1281.20 145.44 L1282.20 145.46 L1283.20 145.48 L1284.20 145.49 L1285.20 145.51 L1286.20 145.53 L1287.20 145.54 L1288.20 145.56 L1289.20 145.57 L1290.20 145.59 L1291.20 145.60 L1292.20 145.61 L1293.20 145.63 L1294.20 145.64 L1295.20 145.65 L1296.20 145.66 L1297.20 145.67 L1298.20 145.68 L1299.20 145.69 L1300.20 145.70 L1301.20 145.71 L1307.20 145.77 L1313.20 145.81 L1319.20 145.84 L1325.20 145.87 L1331.20 145.89 L1337.20 145.91 L1343.20 145.93 L1349.20 145.94 L1355.20 145.95 L1361.20 145.96 L1367.20 145.97 L1373.20 145.97 L1379.20 145.98 L1385.20 145.98 L1391.20 145.99 L1397.20 145.99 L1403.20 145.99 L1409.20 145.99 L1415.20 145.99 L1421.20 145.99 L1427.20 146.00 L1433.20 146.00 L1439.20 146.00 L1445.20 146.00 L1451.20 146.00 L1457.20 146.00 L1463.20 146.00 L1469.20 146.00 L1475.20 146.00 L1481.20 146.00 L1487.20 146.00 L1493.20 146.00 L1499.20 146.00 L1505.20 146.00 L1511.20 146.00 L1517.20 146.00 L1523.20 146.00 L1529.20 146.00 L1535.20 146.00 L1541.20 146.00 L1547.20 146.00 L1553.20 146.00 L1559.20 146.00 L1565.20 146.00 L1571.20 146.00 L1577.20 146.00 L1583.20 146.00 L1589.20 146.00 L1595.20 146.00 L1601.20 146.00 L1607.20 146.00 L1613.20 146.00 L1619.20 146.00 L1625.20 146.00 L1631.20 146.00 L1637.20 146.00 L1643.20 146.00 L1649.20 146.00 L1655.20 146.00 L1661.20 146.00 L1667.20 146.00 L1673.20 146.00 L1679.20 146.00 L1685.20 146.00 L1691.20 146.00 L1697.20 146.00 L1703.20 146.00 L1709.20 146.00 L1715.20 146.00 L1721.20 146.00 L1727.20 146.00 L1733.20 146.00 L1739.20 146.00 L1745.20 146.00 L1751.20 146.00 L1757.20 146.00 L1763.20 146.00 L1769.20 146.00 L1775.20 146.00 L1781.20 146.00 L1787.20 146.00 L1793.20 146.00 L1799.20 146.00 L1805.20 146.21 L1809.20 146.41 L1813.20 146.61 L1817.20 146.82 L1821.20 147.05 L1825.20 147.29 L1829.20 147.54 L1833.20 147.81 L1837.20 148.09 L1841.20 148.40 L1845.20 148.72 L1849.20 149.07 L1853.20 149.44 L1857.20 149.85 L1861.20 150.28 L1865.20 150.75 L1869.20 151.26 L1873.20 151.81 L1877.20 152.42 L1881.20 153.08 L1885.20 153.82 L1889.20 154.63 L1893.20 155.54 L1897.20 156.56 L1901.20 157.71 L1905.20 159.02 L1909.20 160.53 L1913.20 162.28 L1917.20 164.34 L1921.20 166.79 L1925.20 169.77 L1929.20 173.46 L1933.20 178.14 L1937.20 184.29 L1941.03 192.31 L1944.29 201.75 L1947.06 212.85 L1949.41 225.91 L1951.42 241.27 L1953.12 259.35 L1954.56 280.62 L1955.79 305.64 L1955.95 309.64 L1956.11 313.64 L1956.26 317.64 L1956.40 321.64 L1956.54 325.64 L1956.67 329.64 L1956.79 333.64 L1956.91 337.64 L1957.03 341.64 L1957.14 345.64 L1957.24 349.64 L1957.35 353.64 L1957.45 357.64 L1957.54 361.64 L1957.63 365.64 L1957.72 369.64 L1957.81 373.64 L1957.89 377.64 L1957.97 381.64 L1958.05 385.64 L1958.12 389.64 L1958.20 393.64 L1958.27 397.64 L1958.33 401.64 L1958.40 405.64 L1958.47 409.64 L1958.53 413.64 L1958.59 417.64 L1958.65 421.64 L1958.70 425.64 L1958.76 429.64 L1958.81 433.64 L1958.87 437.64 L1958.92 441.64 L1958.97 445.64 L1959.02 449.64 L1959.06 453.64 L1959.11 457.64 L1959.16 461.64 L1959.20 465.64 L1959.24 469.64 L1959.29 473.64 L1959.33 477.64 L1959.37 481.64 L1959.41 485.64 L1959.44 489.64 L1959.48 493.64 L1959.52 497.64 L1959.55 501.64 L1959.59 505.64 L1959.62 509.64 L1959.66 513.64 L1959.69 517.64 L1959.72 521.64 L1959.75 525.64 L1959.78 529.64 L1959.81 533.64 L1959.84 537.64 L1959.87 541.64 L1959.90 545.64 L1959.93 549.64 L1959.95 553.64 L1959.98 557.64 L1960.01 561.64 L1960.03 565.64 L1960.06 569.64 L1960.08 573.64 L1960.11 577.64 L1960.13 581.64 L1960.15 585.64 L1960.18 589.64 L1960.20 593.64 L1960.22 597.64 L1960.24 601.64 L1960.27 605.64 L1960.29 609.64 L1960.31 613.64 L1960.33 617.64 L1960.35 621.64 L1960.37 625.64 L1960.39 629.64 L1960.41 633.64 L1960.43 637.64 L1960.44 641.64 L1960.58 641.50 L1960.73 642.50 L1960.88 643.50 L1961.04 644.50 L1961.20 645.50 L1961.38 646.50 L1961.56 647.50 L1961.75 648.50 L1961.95 649.50 L1962.16 650.50 L1962.38 651.50 L1962.61 652.50 L1962.86 653.50 L1963.12 654.50 L1963.40 655.50 L1963.69 656.50 L1964.01 657.50 L1964.34 658.50 L1964.70 659.50 L1965.08 660.50 L1965.48 661.50 L1965.92 662.50 L1966.40 663.50 L1966.91 664.50 L1967.47 665.50 L1968.07 666.50 L1968.73 667.50 L1969.46 668.50 L1970.26 669.50 L1971.15 670.50 L1972.14 671.50 L1973.24 672.50 L1974.50 673.50 L1975.92 674.50 L1977.56 675.50 L1979.45 676.50 L1981.68 677.50 L1984.33 678.50 L1987.54 679.50 L1991.50 680.50 L1996.52 681.50 L2003.09 682.50 L2005.06 682.75 L2007.19 683.00 L2009.51 683.25 L2012.04 683.50 L2014.81 683.75 L2017.86 684.00 L2021.23 684.25 L2024.98 684.50 L2029.16 684.75 L2033.87 685.00 L2039.20 685.25 L2045.30 685.50 L2052.33 685.75 L2055.50 687.50' stroke='#0000ff' stroke-width='1' fill='none' shape-rendering='crispEdges'/>
<path d='M1162.90 117.50 L1163.90 118.47 L1164.90 119.40 L1165.90 120.31 L1166.90 121.18 L1167.90 122.03 L1168.90 122.85 L1169.90 123.64 L1170.90 124.41 L1171.90 125.15 L1172.90 125.86 L1173.90 126.56 L1174.90 127.23 L1175.90 127.87 L1176.90 128.50 L1177.90 129.11 L1178.90 129.69 L1179.90 130.26 L1180.90 130.81 L1181.90 131.34 L1182.90 131.85 L1183.90 132.35 L1184.90 132.83 L1185.90 133.30 L1186.90 133.74 L1187.90 134.18 L1188.90 134.60 L1189.90 135.01 L1190.90 135.40 L1191.90 135.78 L1192.90 136.15 L1193.90 136.50 L1194.90 136.85 L1195.90 137.18 L1196.90 137.50 L1197.90 137.81 L1198.90 138.11 L1199.90 138.41 L1200.90 138.69 L1201.90 138.96 L1202.90 139.22 L1203.90 139.48 L1204.90 139.73 L1205.90 139.96 L1206.90 140.19 L1207.90 140.42 L1208.90 140.63 L1209.90 140.84 L1210.90 141.04 L1211.90 141.24 L1212.90 141.43 L1213.90 141.61 L1214.90 141.79 L1215.90 141.96 L1216.90 142.12 L1217.90 142.28 L1218.90 142.44 L1219.90 142.59 L1220.90 142.73 L1221.90 142.87 L1222.90 143.01 L1223.90 143.14 L1224.90 143.27 L1225.90 143.39 L1226.90 143.51 L1227.90 143.62 L1228.90 143.73 L1229.90 143.84 L1230.90 143.94 L1231.90 144.04 L1232.90 144.14 L1233.90 144.23 L1234.90 144.32 L1235.90 144.41 L1236.90 144.50 L1237.90 144.58 L1238.90 144.66 L1239.90 144.73 L1240.90 144.81 L1241.90 144.88 L1242.90 144.95 L1243.90 145.02 L1244.90 145.08 L1245.90 145.15 L1246.90 145.21 L1247.90 145.26 L1248.90 145.32 L1249.90 145.38 L1250.90 145.43 L1251.90 145.48 L1252.90 145.53 L1253.90 145.58 L1254.90 145.63 L1255.90 145.67 L1256.90 145.71 L1257.90 145.76 L1258.90 145.80 L1259.90 145.84 L1260.90 145.88 L1261.90 145.91 L1262.90 145.95 L1263.90 145.98 L1264.90 146.02 L1265.90 146.05 L1266.90 146.08 L1267.90 146.11 L1268.90 146.14 L1269.90 146.17 L1270.90 146.19 L1271.90 146.22 L1272.90 146.25 L1273.90 146.27 L1274.90 146.29 L1275.90 146.32 L1276.90 146.34 L1277.90 146.36 L1278.90 146.38 L1279.90 146.40 L1280.90 146.42 L1281.90 146.44 L1282.90 146.46 L1283.90 146.48 L1284.90 146.49 L1285.90 146.51 L1286.90 146.53 L1287.90 146.54 L1288.90 146.56 L1289.90 146.57 L1290.90 146.59 L1291.90 146.60 L1292.90 146.61 L1293.90 146.63 L1294.90 146.64 L1295.90 146.65 L1296.90 146.66 L1297.90 146.67 L1298.90 146.68 L1299.90 146.69 L1300.90 146.70 L1306.90 146.76 L1312.90 146.80 L1318.90 146.84 L1324.90 146.87 L1330.90 146.89 L1336.90 146.91 L1342.90 146.93 L1348.90 146.94 L1354.90 146.95 L1360.90 146.96 L1366.90 146.97 L1372.90 146.97 L1378.90 146.98 L1384.90 146.98 L1390.90 146.99 L1396.90 146.99 L1402.90 146.99 L1408.90 146.99 L1414.90 146.99 L1420.90 146.99 L1426.90 147.00 L1432.90 147.00 L1438.90 147.00 L1444.90 147.00 L1450.90 147.00 L1456.90 147.00 L1462.90 147.00 L1468.90 147.00 L1474.90 147.00 L1480.90 147.00 L1486.90 147.00 L1492.90 147.00 L1498.90 147.00 L1504.90 147.00 L1510.90 147.00 L1516.90 147.00 L1522.90 147.00 L1528.90 147.00 L1534.90 147.00 L1540.90 147.00 L1546.90 147.00 L1552.90 147.00 L1558.90 147.00 L1564.90 147.00 L1570.90 147.00 L1576.90 147.00 L1582.90 147.00 L1588.90 147.00 L1594.90 147.00 L1600.90 147.00 L1606.90 147.00 L1612.90 147.00 L1618.90 147.00 L1624.90 147.00 L1630.90 147.00 L1636.90 147.00 L1642.90 147.00 L1648.90 147.00 L1654.90 147.00 L1660.90 147.00 L1666.90 147.00 L1672.90 147.00 L1678.90 147.00 L1684.90 147.00 L1690.90 147.00 L1696.90 147.00 L1702.90 147.00 L1708.90 147.00 L1714.90 147.00 L1720.90 147.00 L1726.90 147.00 L1732.90 147.00 L1738.90 147.00 L1744.90 147.00 L1750.90 147.00 L1756.90 147.00 L1762.90 147.00 L1768.90 147.00 L1774.90 147.00 L1780.90 147.00 L1786.90 147.00 L1792.90 147.00 L1798.90 147.00 L1804.90 147.18 L1808.90 147.36 L1812.90 147.55 L1816.90 147.74 L1820.90 147.95 L1824.90 148.17 L1828.90 148.40 L1832.90 148.65 L1836.90 148.91 L1840.90 149.19 L1844.90 149.50 L1848.90 149.82 L1852.90 150.16 L1856.90 150.53 L1860.90 150.93 L1864.90 151.37 L1868.90 151.84 L1872.90 152.35 L1876.90 152.92 L1880.90 153.54 L1884.90 154.22 L1888.90 154.98 L1892.90 155.82 L1896.90 156.78 L1900.90 157.85 L1904.90 159.08 L1908.90 160.50 L1912.90 162.15 L1916.90 164.10 L1920.90 166.43 L1924.90 169.27 L1928.90 172.80 L1932.90 177.32 L1936.90 183.32 L1940.59 190.88 L1943.73 199.78 L1946.40 210.25 L1948.66 222.57 L1950.59 237.06 L1952.23 254.11 L1953.62 274.17 L1954.81 297.77 L1955.81 325.53 L1955.93 329.53 L1956.05 333.53 L1956.16 337.53 L1956.26 341.53 L1956.37 345.53 L1956.47 349.53 L1956.56 353.53 L1956.65 357.53 L1956.74 361.53 L1956.82 365.53 L1956.91 369.53 L1956.99 373.53 L1957.06 377.53 L1957.14 381.53 L1957.21 385.53 L1957.28 389.53 L1957.34 393.53 L1957.41 397.53 L1957.47 401.53 L1957.53 405.53 L1957.59 409.53 L1957.65 413.53 L1957.70 417.53 L1957.76 421.53 L1957.81 425.53 L1957.86 429.53 L1957.91 433.53 L1957.96 437.53 L1958.01 441.53 L1958.05 445.53 L1958.10 449.53 L1958.14 453.53 L1958.18 457.53 L1958.23 461.53 L1958.27 465.53 L1958.31 469.53 L1958.34 473.53 L1958.38 477.53 L1958.42 481.53 L1958.45 485.53 L1958.49 489.53 L1958.52 493.53 L1958.56 497.53 L1958.59 501.53 L1958.62 505.53 L1958.65 509.53 L1958.68 513.53 L1958.71 517.53 L1958.74 521.53 L1958.77 525.53 L1958.80 529.53 L1958.83 533.53 L1958.85 537.53 L1958.88 541.53 L1958.91 545.53 L1958.93 549.53 L1958.96 553.53 L1958.98 557.53 L1959.01 561.53 L1959.03 565.53 L1959.05 569.53 L1959.08 573.53 L1959.10 577.53 L1959.12 581.53 L1959.14 585.53 L1959.16 589.53 L1959.18 593.53 L1959.20 597.53 L1959.22 601.53 L1959.24 605.53 L1959.26 609.53 L1959.28 613.53 L1959.30 617.53 L1959.32 621.53 L1959.34 625.53 L1959.35 629.53 L1959.37 633.53 L1959.39 637.53 L1959.41 641.53 L1959.54 641.50 L1959.69 642.50 L1959.84 643.50 L1959.99 644.50 L1960.15 645.50 L1960.33 646.50 L1960.50 647.50 L1960.69 648.50 L1960.89 649.50 L1961.10 650.50 L1961.32 651.50 L1961.55 652.50 L1961.79 653.50 L1962.05 654.50 L1962.32 655.50 L1962.61 656.50 L1962.92 657.50 L1963.25 658.50 L1963.60 659.50 L1963.98 660.50 L1964.38 661.50 L1964.81 662.50 L1965.28 663.50 L1965.79 664.50 L1966.33 665.50 L1966.93 666.50 L1967.58 667.50 L1968.30 668.50 L1969.09 669.50 L1969.97 670.50 L1970.94 671.50 L1972.03 672.50 L1973.27 673.50 L1974.68 674.50 L1976.29 675.50 L1978.16 676.50 L1980.36 677.50 L1982.97 678.50 L1986.14 679.50 L1990.05 680.50 L1995.00 681.50 L2001.48 682.50 L2003.43 682.75 L2005.53 683.00 L2007.82 683.25 L2010.32 683.50 L2013.05 683.75 L2016.06 684.00 L2019.38 684.25 L2023.08 684.50 L2027.20 684.75 L2031.85 685.00 L2037.11 685.25 L2043.13 685.50 L2050.07 685.75 L2055.50 687.50' stroke='#0000ff' stroke-width='1' fill='none' shape-rendering='crispEdges'/>
<path d='M1161.50 118.50 L1162.50 119.47 L1163.50 120.40 L1164.50 121.31 L1165.50 122.18 L1166.50 123.03 L1167.50 123.85 L1168.50 124.64 L1169.50 125.41 L1170.50 126.15 L1171.50 126.86 L1172.50 127.56 L1173.50 128.23 L1174.50 128.87 L1175.50 129.50 L1176.50 130.11 L1177.50 130.69 L1178.50 131.26 L1179.50 131.81 L1180.50 132.34 L1181.50 132.85 L1182.50 133.35 L1183.50 133.83 L1184.50 134.30 L1185.50 134.74 L1186.50 135.18 L1187.50 135.60 L1188.50 136.01 L1189.50 136.40 L1190.50 136.78 L1191.50 137.15 L1192.50 137.50 L1193.50 137.85 L1194.50 138.18 L1195.50 138.50 L1196.50 138.81 L1197.50 139.11 L1198.50 139.41 L1199.50 139.69 L1200.50 139.96 L1201.50 140.22 L1202.50 140.48 L1203.50 140.73 L1204.50 140.96 L1205.50 141.19 L1206.50 141.42 L1207.50 141.63 L1208.50 141.84 L1209.50 142.04 L1210.50 142.24 L1211.50 142.43 L1212.50 142.61 L1213.50 142.79 L1214.50 142.96 L1215.50 143.12 L1216.50 143.28 L1217.50 143.44 L1218.50 143.59 L1219.50 143.73 L1220.50 143.87 L1221.50 144.01 L1222.50 144.14 L1223.50 144.27 L1224.50 144.39 L1225.50 144.51 L1226.50 144.62 L1227.50 144.73 L1228.50 144.84 L1229.50 144.94 L1230.50 145.04 L1231.50 145.14 L1232.50 145.23 L1233.50 145.32 L1234.50 145.41 L1235.50 145.50 L1236.50 145.58 L1237.50 145.66 L1238.50 145.73 L1239.50 145.81 L1240.50 145.88 L1241.50 145.95 L1242.50 146.02 L1243.50 146.08 L1244.50 146.15 L1245.50 146.21 L1246.50 146.26 L1247.50 146.32 L1248.50 146.38 L1249.50 146.43 L1250.50 146.48 L1251.50 146.53 L1252.50 146.58 L1253.50 146.63 L1254.50 146.67 L1255.50 146.71 L1256.50 146.76 L1257.50 146.80 L1258.50 146.84 L1259.50 146.88 L1260.50 146.91 L1261.50 146.95 L1262.50 146.98 L1263.50 147.02 L1264.50 147.05 L1265.50 147.08 L1266.50 147.11 L1267.50 147.14 L1268.50 147.17 L1269.50 147.19 L1270.50 147.22 L1271.50 147.25 L1272.50 147.27 L1273.50 147.29 L1274.50 147.32 L1275.50 147.34 L1276.50 147.36 L1277.50 147.38 L1278.50 147.40 L1279.50 147.42 L1280.50 147.44 L1281.50 147.46 L1282.50 147.48 L1283.50 147.49 L1284.50 147.51 L1285.50 147.53 L1286.50 147.54 L1287.50 147.56 L1288.50 147.57 L1289.50 147.59 L1290.50 147.60 L1291.50 147.61 L1292.50 147.63 L1293.50 147.64 L1294.50 147.65 L1295.50 147.66 L1296.50 147.67 L1297.50 147.68 L1298.50 147.69 L1299.50 147.70 L1300.50 147.71 L1306.50 147.77 L1312.50 147.81 L1318.50 147.84 L1324.50 147.87 L1330.50 147.89 L1336.50 147.91 L1342.50 147.93 L1348.50 147.94 L1354.50 147.95 L1360.50 147.96 L1366.50 147.97 L1372.50 147.97 L1378.50 147.98 L1384.50 147.98 L1390.50 147.99 L1396.50 147.99 L1402.50 147.99 L1408.50 147.99 L1414.50 147.99 L1420.50 147.99 L1426.50 148.00 L1432.50 148.00 L1438.50 148.00 L1444.50 148.00 L1450.50 148.00 L1456.50 148.00 L1462.50 148.00 L1468.50 148.00 L1474.50 148.00 L1480.50 148.00 L1486.50 148.00 L1492.50 148.00 L1498.50 148.00 L1504.50 148.00 L1510.50 148.00 L1516.50 148.00 L1522.50 148.00 L1528.50 148.00 L1534.50 148.00 L1540.50 148.00 L1546.50 148.00 L1552.50 148.00 L1558.50 148.00 L1564.50 148.00 L1570.50 148.00 L1576.50 148.00 L1582.50 148.00 L1588.50 148.00 L1594.50 148.00 L1600.50 148.00 L1606.50 148.00 L1612.50 148.00 L1618.50 148.00 L1624.50 148.00 L1630.50 148.00 L1636.50 148.00 L1642.50 148.00 L1648.50 148.00 L1654.50 148.00 L1660.50 148.00 L1666.50 148.00 L1672.50 148.00 L1678.50 148.00 L1684.50 148.00 L1690.50 148.00 L1696.50 148.00 L1702.50 148.00 L1708.50 148.00 L1714.50 148.00 L1720.50 148.00 L1726.50 148.00 L1732.50 148.00 L1738.50 148.00 L1744.50 148.00 L1750.50 148.00 L1756.50 148.00 L1762.50 148.00 L1768.50 148.00 L1774.50 148.00 L1780.50 148.00 L1786.50 148.00 L1792.50 148.00 L1798.50 148.00 L1804.50 148.17 L1808.50 148.34 L1812.50 148.53 L1816.50 148.72 L1820.50 148.93 L1824.50 149.15 L1828.50 149.38 L1832.50 149.63 L1836.50 149.90 L1840.50 150.19 L1844.50 150.49 L1848.50 150.82 L1852.50 151.18 L1856.50 151.56 L1860.50 151.98 L1864.50 152.44 L1868.50 152.94 L1872.50 153.48 L1876.50 154.09 L1880.50 154.76 L1884.50 155.51 L1888.50 156.35 L1892.50 157.30 L1896.50 158.38 L1900.50 159.62 L1904.50 161.07 L1908.50 162.77 L1912.50 164.80 L1916.50 167.27 L1920.50 170.33 L1924.50 174.23 L1928.50 179.36 L1932.29 185.99 L1935.51 193.78 L1938.25 202.95 L1940.58 213.74 L1942.56 226.44 L1944.24 241.37 L1945.67 258.94 L1946.88 279.61 L1947.91 303.93 L1948.05 307.93 L1948.19 311.93 L1948.32 315.93 L1948.44 319.93 L1948.56 323.93 L1948.67 327.93 L1948.78 331.93 L1948.88 335.93 L1948.98 339.93 L1949.07 343.93 L1949.16 347.93 L1949.25 351.93 L1949.34 355.93 L1949.42 359.93 L1949.49 363.93 L1949.57 367.93 L1949.64 371.93 L1949.71 375.93 L1949.78 379.93 L1949.85 383.93 L1949.91 387.93 L1949.97 391.93 L1950.03 395.93 L1950.09 399.93 L1950.15 403.93 L1950.20 407.93 L1950.25 411.93 L1950.30 415.93 L1950.35 419.93 L1950.40 423.93 L1950.45 427.93 L1950.50 431.93 L1950.54 435.93 L1950.58 439.93 L1950.63 443.93 L1950.67 447.93 L1950.71 451.93 L1950.75 455.93 L1950.78 459.93 L1950.82 463.93 L1950.86 467.93 L1950.89 471.93 L1950.93 475.93 L1950.96 479.93 L1950.99 483.93 L1951.02 487.93 L1951.06 491.93 L1951.09 495.93 L1951.12 499.93 L1951.15 503.93 L1951.17 507.93 L1951.20 511.93 L1951.23 515.93 L1951.26 519.93 L1951.28 523.93 L1951.31 527.93 L1951.33 531.93 L1951.36 535.93 L1951.38 539.93 L1951.41 543.93 L1951.43 547.93 L1951.45 551.93 L1951.47 555.93 L1951.50 559.93 L1951.52 563.93 L1951.54 567.93 L1951.56 571.93 L1951.58 575.93 L1951.60 579.93 L1951.62 583.93 L1951.64 587.93 L1951.66 591.93 L1951.68 595.93 L1951.70 599.93 L1951.71 603.93 L1951.73 607.93 L1951.75 611.93 L1951.76 615.93 L1951.78 619.93 L1951.80 623.93 L1951.81 627.93 L1951.83 631.93 L1951.85 635.93 L1951.86 639.93 L1951.88 643.93 L1952.01 641.50 L1952.15 642.50 L1952.30 643.50 L1952.45 644.50 L1952.61 645.50 L1952.78 646.50 L1952.96 647.50 L1953.15 648.50 L1953.34 649.50 L1953.54 650.50 L1953.76 651.50 L1953.99 652.50 L1954.23 653.50 L1954.48 654.50 L1954.75 655.50 L1955.04 656.50 L1955.34 657.50 L1955.67 658.50 L1956.01 659.50 L1956.38 660.50 L1956.78 661.50 L1957.21 662.50 L1957.67 663.50 L1958.17 664.50 L1958.71 665.50 L1959.30 666.50 L1959.94 667.50 L1960.65 668.50 L1961.43 669.50 L1962.29 670.50 L1963.26 671.50 L1964.33 672.50 L1965.55 673.50 L1966.94 674.50 L1968.53 675.50 L1970.38 676.50 L1972.54 677.50 L1975.12 678.50 L1978.25 679.50 L1982.11 680.50 L1986.99 681.50 L1993.38 682.50 L1995.30 682.75 L1997.38 683.00 L1999.63 683.25 L2002.10 683.50 L2004.79 683.75 L2007.76 684.00 L2011.04 684.25 L2014.69 684.50 L2018.76 684.75 L2023.34 685.00 L2028.53 685.25 L2034.47 685.50 L2041.31 685.75 L2049.30 686.00 L2055.50 687.50' stroke='#0000ff' stroke-width='1' fill='none' shape-rendering='crispEdges'/>
<path d='M1162.20 119.50 L1163.20 120.50 L1164.20 121.47 L1165.20 122.40 L1166.20 123.31 L1167.20 124.18 L1168.20 125.03 L1169.20 125.85 L1170.20 126.64 L1171.20 127.41 L1172.20 128.15 L1173.20 128.86 L1174.20 129.56 L1175.20 130.23 L1176.20 130.87 L1177.20 131.50 L1178.20 132.11 L1179.20 132.69 L1180.20 133.26 L1181.20 133.81 L1182.20 134.34 L1183.20 134.85 L1184.20 135.35 L1185.20 135.83 L1186.20 136.30 L1187.20 136.74 L1188.20 137.18 L1189.20 137.60 L1190.20 138.01 L1191.20 138.40 L1192.20 138.78 L1193.20 139.15 L1194.20 139.50 L1195.20 139.85 L1196.20 140.18 L1197.20 140.50 L1198.20 140.81 L1199.20 141.11 L1200.20 141.41 L1201.20 141.69 L1202.20 141.96 L1203.20 142.22 L1204.20 142.48 L1205.20 142.73 L1206.20 142.96 L1207.20 143.19 L1208.20 143.42 L1209.20 143.63 L1210.20 143.84 L1211.20 144.04 L1212.20 144.24 L1213.20 144.43 L1214.20 144.61 L1215.20 144.79 L1216.20 144.96 L1217.20 145.12 L1218.20 145.28 L1219.20 145.44 L1220.20 145.59 L1221.20 145.73 L1222.20 145.87 L1223.20 146.01 L1224.20 146.14 L1225.20 146.27 L1226.20 146.39 L1227.20 146.51 L1228.20 146.62 L1229.20 146.73 L1230.20 146.84 L1231.20 146.94 L1232.20 147.04 L1233.20 147.14 L1234.20 147.23 L1235.20 147.32 L1236.20 147.41 L1237.20 147.50 L1238.20 147.58 L1239.20 147.66 L1240.20 147.73 L1241.20 147.81 L1242.20 147.88 L1243.20 147.95 L1244.20 148.02 L1245.20 148.08 L1246.20 148.15 L1247.20 148.21 L1248.20 148.26 L1249.20 148.32 L1250.20 148.38 L1251.20 148.43 L1252.20 148.48 L1253.20 148.53 L1254.20 148.58 L1255.20 148.63 L1256.20 148.67 L1257.20 148.71 L1258.20 148.76 L1259.20 148.80 L1260.20 148.84 L1261.20 148.88 L1262.20 148.91 L1263.20 148.95 L1264.20 148.98 L1265.20 149.02 L1266.20 149.05 L1267.20 149.08 L1268.20 149.11 L1269.20 149.14 L1270.20 149.17 L1271.20 149.19 L1272.20 149.22 L1273.20 149.25 L1274.20 149.27 L1275.20 149.29 L1276.20 149.32 L1277.20 149.34 L1278.20 149.36 L1279.20 149.38 L1280.20 149.40 L1281.20 149.42 L1282.20 149.44 L1283.20 149.46 L1284.20 149.48 L1285.20 149.49 L1286.20 149.51 L1287.20 149.53 L1288.20 149.54 L1289.20 149.56 L1290.20 149.57 L1291.20 149.59 L1292.20 149.60 L1293.20 149.61 L1294.20 149.63 L1295.20 149.64 L1296.20 149.65 L1297.20 149.66 L1298.20 149.67 L1299.20 149.68 L1300.20 149.69 L1301.20 149.70 L1307.20 149.76 L1313.20 149.80 L1319.20 149.84 L1325.20 149.87 L1331.20 149.89 L1337.20 149.91 L1343.20 149.93 L1349.20 149.94 L1355.20 149.95 L1361.20 149.96 L1367.20 149.97 L1373.20 149.97 L1379.20 149.98 L1385.20 149.98 L1391.20 149.99 L1397.20 149.99 L1403.20 149.99 L1409.20 149.99 L1415.20 149.99 L1421.20 149.99 L1427.20 150.00 L1433.20 150.00 L1439.20 150.00 L1445.20 150.00 L1451.20 150.00 L1457.20 150.00 L1463.20 150.00 L1469.20 150.00 L1475.20 150.00 L1481.20 150.00 L1487.20 150.00 L1493.20 150.00 L1499.20 150.00 L1505.20 150.00 L1511.20 150.00 L1517.20 150.00 L1523.20 150.00 L1529.20 150.00 L1535.20 150.00 L1541.20 150.00 L1547.20 150.00 L1553.20 150.00 L1559.20 150.00 L1565.20 150.00 L1571.20 150.00 L1577.20 150.00 L1583.20 150.00 L1589.20 150.00 L1595.20 150.00 L1601.20 150.00 L1607.20 150.00 L1613.20 150.00 L1619.20 150.00 L1625.20 150.00 L1631.20 150.00 L1637.20 150.00 L1643.20 150.00 L1649.20 150.00 L1655.20 150.00 L1661.20 150.00 L1667.20 150.00 L1673.20 150.00 L1679.20 150.00 L1685.20 150.00 L1691.20 150.00 L1697.20 150.00 L1703.20 150.00 L1709.20 150.00 L1715.20 150.00 L1721.20 150.00 L1727.20 150.00 L1733.20 150.00 L1739.20 150.00 L1745.20 150.00 L1751.20 150.00 L1757.20 150.00 L1763.20 150.00 L1769.20 150.00 L1775.20 150.00 L1781.20 150.00 L1787.20 150.00 L1793.20 150.00 L1799.20 150.00 L1805.20 150.18 L1809.20 150.34 L1813.20 150.51 L1817.20 150.70 L1821.20 150.89 L1825.20 151.10 L1829.20 151.31 L1833.20 151.55 L1837.20 151.80 L1841.20 152.07 L1845.20 152.36 L1849.20 152.67 L1853.20 153.00 L1857.20 153.37 L1861.20 153.77 L1865.20 154.20 L1869.20 154.68 L1873.20 155.21 L1877.20 155.79 L1881.20 156.44 L1885.20 157.17 L1889.20 157.99 L1893.20 158.93 L1897.20 160.00 L1901.20 161.25 L1905.20 162.71 L1909.20 164.46 L1913.20 166.56 L1917.20 169.17 L1921.20 172.47 L1925.20 176.78 L1929.10 182.49 L1932.42 189.21 L1935.24 197.12 L1937.64 206.42 L1939.68 217.36 L1941.41 230.23 L1942.88 245.38 L1944.13 263.20 L1945.20 284.16 L1946.10 308.82 L1946.22 312.82 L1946.34 316.82 L1946.45 320.82 L1946.56 324.82 L1946.66 328.82 L1946.75 332.82 L1946.85 336.82 L1946.94 340.82 L1947.02 344.82 L1947.10 348.82 L1947.18 352.82 L1947.26 356.82 L1947.33 360.82 L1947.40 364.82 L1947.47 368.82 L1947.54 372.82 L1947.60 376.82 L1947.66 380.82 L1947.72 384.82 L1947.78 388.82 L1947.83 392.82 L1947.89 396.82 L1947.94 400.82 L1947.99 404.82 L1948.04 408.82 L1948.09 412.82 L1948.13 416.82 L1948.18 420.82 L1948.22 424.82 L1948.26 428.82 L1948.30 432.82 L1948.34 436.82 L1948.38 440.82 L1948.42 444.82 L1948.46 448.82 L1948.49 452.82 L1948.53 456.82 L1948.56 460.82 L1948.60 464.82 L1948.63 468.82 L1948.66 472.82 L1948.69 476.82 L1948.72 480.82 L1948.75 484.82 L1948.78 488.82 L1948.81 492.82 L1948.83 496.82 L1948.86 500.82 L1948.89 504.82 L1948.91 508.82 L1948.94 512.82 L1948.96 516.82 L1948.99 520.82 L1949.01 524.82 L1949.03 528.82 L1949.06 532.82 L1949.08 536.82 L1949.10 540.82 L1949.12 544.82 L1949.14 548.82 L1949.16 552.82 L1949.18 556.82 L1949.20 560.82 L1949.22 564.82 L1949.24 568.82 L1949.26 572.82 L1949.28 576.82 L1949.29 580.82 L1949.31 584.82 L1949.33 588.82 L1949.35 592.82 L1949.36 596.82 L1949.38 600.82 L1949.39 604.82 L1949.41 608.82 L1949.43 612.82 L1949.44 616.82 L1949.46 620.82 L1949.47 624.82 L1949.49 628.82 L1949.50 632.82 L1949.51 636.82 L1949.53 640.82 L1949.66 641.50 L1949.80 642.50 L1949.95 643.50 L1950.10 644.50 L1950.26 645.50 L1950.42 646.50 L1950.60 647.50 L1950.78 648.50 L1950.97 649.50 L1951.17 650.50 L1951.39 651.50 L1951.61 652.50 L1951.85 653.50 L1952.10 654.50 L1952.36 655.50 L1952.65 656.50 L1952.95 657.50 L1953.27 658.50 L1953.61 659.50 L1953.97 660.50 L1954.37 661.50 L1954.79 662.50 L1955.24 663.50 L1955.73 664.50 L1956.27 665.50 L1956.85 666.50 L1957.48 667.50 L1958.18 668.50 L1958.95 669.50 L1959.80 670.50 L1960.75 671.50 L1961.81 672.50 L1963.02 673.50 L1964.38 674.50 L1965.95 675.50 L1967.77 676.50 L1969.91 677.50 L1972.46 678.50 L1975.54 679.50 L1979.34 680.50 L1984.16 681.50 L1990.46 682.50 L1992.36 682.75 L1994.40 683.00 L1996.63 683.25 L1999.06 683.50 L2001.72 683.75 L2004.65 684.00 L2007.88 684.25 L2011.47 684.50 L2015.49 684.75 L2020.01 685.00 L2025.13 685.25 L2030.98 685.50 L2037.74 685.75 L2045.62 686.00 L2054.93 686.25 L2055.50 687.50' stroke='#0000ff' stroke-width='1' fill='none' shape-rendering='crispEdges'/>
<path d='M1162.90 120.50 L1163.90 121.52 L1164.90 122.50 L1165.90 123.45 L1166.90 124.37 L1167.90 125.26 L1168.90 126.12 L1169.90 126.95 L1170.90 127.76 L1171.90 128.53 L1172.90 129.29 L1173.90 130.02 L1174.90 130.72 L1175.90 131.40 L1176.90 132.06 L1177.90 132.70 L1178.90 133.31 L1179.90 133.91 L1180.90 134.49 L1181.90 135.04 L1182.90 135.58 L1183.90 136.11 L1184.90 136.61 L1185.90 137.10 L1186.90 137.57 L1187.90 138.03 L1188.90 138.47 L1189.90 138.90 L1190.90 139.31 L1191.90 139.71 L1192.90 140.10 L1193.90 140.47 L1194.90 140.83 L1195.90 141.18 L1196.90 141.52 L1197.90 141.85 L1198.90 142.16 L1199.90 142.47 L1200.90 142.77 L1201.90 143.05 L1202.90 143.33 L1203.90 143.60 L1204.90 143.86 L1205.90 144.11 L1206.90 144.35 L1207.90 144.58 L1208.90 144.81 L1209.90 145.03 L1210.90 145.24 L1211.90 145.45 L1212.90 145.64 L1213.90 145.84 L1214.90 146.02 L1215.90 146.20 L1216.90 146.38 L1217.90 146.54 L1218.90 146.71 L1219.90 146.86 L1220.90 147.02 L1221.90 147.16 L1222.90 147.30 L1223.90 147.44 L1224.90 147.58 L1225.90 147.70 L1226.90 147.83 L1227.90 147.95 L1228.90 148.07 L1229.90 148.18 L1230.90 148.29 L1231.90 148.39 L1232.90 148.49 L1233.90 148.59 L1234.90 148.69 L1235.90 148.78 L1236.90 148.87 L1237.90 148.96 L1238.90 149.04 L1239.90 149.12 L1240.90 149.20 L1241.90 149.27 L1242.90 149.35 L1243.90 149.42 L1244.90 149.48 L1245.90 149.55 L1246.90 149.61 L1247.90 149.68 L1248.90 149.74 L1249.90 149.79 L1250.90 149.85 L1251.90 149.90 L1252.90 149.96 L1253.90 150.01 L1254.90 150.06 L1255.90 150.10 L1256.90 150.15 L1257.90 150.19 L1258.90 150.24 L1259.90 150.28 L1260.90 150.32 L1261.90 150.36 L1262.90 150.39 L1263.90 150.43 L1264.90 150.47 L1265.90 150.50 L1266.90 150.53 L1267.90 150.56 L1268.90 150.59 L1269.90 150.62 L1270.90 150.65 L1271.90 150.68 L1272.90 150.71 L1273.90 150.73 L1274.90 150.76 L1275.90 150.78 L1276.90 150.81 L1277.90 150.83 L1278.90 150.85 L1279.90 150.87 L1280.90 150.89 L1281.90 150.91 L1282.90 150.93 L1283.90 150.95 L1284.90 150.97 L1285.90 150.99 L1286.90 151.00 L1287.90 151.02 L1288.90 151.04 L1289.90 151.05 L1290.90 151.07 L1291.90 151.08 L1292.90 151.09 L1293.90 151.11 L1294.90 151.12 L1295.90 151.13 L1296.90 151.14 L1297.90 151.16 L1298.90 151.17 L1299.90 151.18 L1300.90 151.19 L1306.90 151.24 L1312.90 151.29 L1318.90 151.33 L1324.90 151.36 L1330.90 151.39 L1336.90 151.41 L1342.90 151.42 L1348.90 151.44 L1354.90 151.45 L1360.90 151.46 L1366.90 151.47 L1372.90 151.47 L1378.90 151.48 L1384.90 151.48 L1390.90 151.48 L1396.90 151.49 L1402.90 151.49 L1408.90 151.49 L1414.90 151.49 L1420.90 151.49 L1426.90 151.50 L1432.90 151.50 L1438.90 151.50 L1444.90 151.50 L1450.90 151.50 L1456.90 151.50 L1462.90 151.50 L1468.90 151.50 L1474.90 151.50 L1480.90 151.50 L1486.90 151.50 L1492.90 151.50 L1498.90 151.50 L1504.90 151.50 L1510.90 151.50 L1516.90 151.50 L1522.90 151.50 L1528.90 151.50 L1534.90 151.50 L1540.90 151.50 L1546.90 151.50 L1552.90 151.50 L1558.90 151.50 L1564.90 151.50 L1570.90 151.50 L1576.90 151.50 L1582.90 151.50 L1588.90 151.50 L1594.90 151.50 L1600.90 151.50 L1606.90 151.50 L1612.90 151.50 L1618.90 151.50 L1624.90 151.50 L1630.90 151.50 L1636.90 151.50 L1642.90 151.50 L1648.90 151.50 L1654.90 151.50 L1660.90 151.50 L1666.90 151.50 L1672.90 151.50 L1678.90 151.50 L1684.90 151.50 L1690.90 151.50 L1696.90 151.50 L1702.90 151.50 L1708.90 151.50 L1714.90 151.50 L1720.90 151.50 L1726.90 151.50 L1732.90 151.50 L1738.90 151.50 L1744.90 151.50 L1750.90 151.50 L1756.90 151.50 L1762.90 151.50 L1768.90 151.50 L1774.90 151.50 L1780.90 151.50 L1786.90 151.50 L1792.90 151.50 L1798.90 151.50 L1804.90 151.64 L1808.90 151.78 L1812.90 151.93 L1816.90 152.09 L1820.90 152.25 L1824.90 152.43 L1828.90 152.62 L1832.90 152.82 L1836.90 153.03 L1840.90 153.26 L1844.90 153.51 L1848.90 153.77 L1852.90 154.06 L1856.90 154.37 L1860.90 154.71 L1864.90 155.07 L1868.90 155.48 L1872.90 155.92 L1876.90 156.41 L1880.90 156.96 L1884.90 157.57 L1888.90 158.26 L1892.90 159.05 L1896.90 159.94 L1900.90 160.98 L1904.90 162.19 L1908.90 163.62 L1912.90 165.34 L1916.90 167.45 L1920.90 170.11 L1924.90 173.53 L1928.90 178.13 L1932.41 183.69 L1935.39 190.22 L1937.92 197.91 L1940.07 206.96 L1941.91 217.60 L1943.46 230.12 L1944.78 244.86 L1945.91 262.19 L1946.86 282.57 L1947.68 306.56 L1947.79 310.56 L1947.90 314.56 L1948.00 318.56 L1948.09 322.56 L1948.19 326.56 L1948.28 330.56 L1948.36 334.56 L1948.44 338.56 L1948.52 342.56 L1948.60 346.56 L1948.67 350.56 L1948.74 354.56 L1948.81 358.56 L1948.87 362.56 L1948.93 366.56 L1948.99 370.56 L1949.05 374.56 L1949.10 378.56 L1949.16 382.56 L1949.21 386.56 L1949.26 390.56 L1949.31 394.56 L1949.36 398.56 L1949.40 402.56 L1949.45 406.56 L1949.49 410.56 L1949.53 414.56 L1949.57 418.56 L1949.61 422.56 L1949.65 426.56 L1949.69 430.56 L1949.72 434.56 L1949.76 438.56 L1949.79 442.56 L1949.82 446.56 L1949.86 450.56 L1949.89 454.56 L1949.92 458.56 L1949.95 462.56 L1949.98 466.56 L1950.01 470.56 L1950.03 474.56 L1950.06 478.56 L1950.09 482.56 L1950.11 486.56 L1950.14 490.56 L1950.16 494.56 L1950.19 498.56 L1950.21 502.56 L1950.23 506.56 L1950.26 510.56 L1950.28 514.56 L1950.30 518.56 L1950.32 522.56 L1950.34 526.56 L1950.36 530.56 L1950.38 534.56 L1950.40 538.56 L1950.42 542.56 L1950.44 546.56 L1950.46 550.56 L1950.47 554.56 L1950.49 558.56 L1950.51 562.56 L1950.53 566.56 L1950.54 570.56 L1950.56 574.56 L1950.57 578.56 L1950.59 582.56 L1950.61 586.56 L1950.62 590.56 L1950.64 594.56 L1950.65 598.56 L1950.66 602.56 L1950.68 606.56 L1950.69 610.56 L1950.71 614.56 L1950.72 618.56 L1950.73 622.56 L1950.74 626.56 L1950.76 630.56 L1950.77 634.56 L1950.78 638.56 L1950.79 642.56 L1950.93 641.50 L1951.06 642.50 L1951.21 643.50 L1951.36 644.50 L1951.51 645.50 L1951.68 646.50 L1951.85 647.50 L1952.03 648.50 L1952.22 649.50 L1952.42 650.50 L1952.63 651.50 L1952.85 652.50 L1953.08 653.50 L1953.33 654.50 L1953.59 655.50 L1953.87 656.50 L1954.17 657.50 L1954.48 658.50 L1954.82 659.50 L1955.18 660.50 L1955.57 661.50 L1955.98 662.50 L1956.43 663.50 L1956.91 664.50 L1957.44 665.50 L1958.01 666.50 L1958.64 667.50 L1959.33 668.50 L1960.09 669.50 L1960.93 670.50 L1961.86 671.50 L1962.91 672.50 L1964.10 673.50 L1965.44 674.50 L1966.99 675.50 L1968.79 676.50 L1970.89 677.50 L1973.40 678.50 L1976.44 679.50 L1980.19 680.50 L1984.95 681.50 L1991.16 682.50 L1993.03 682.75 L1995.05 683.00 L1997.24 683.25 L1999.64 683.50 L2002.26 683.75 L2005.15 684.00 L2008.34 684.25 L2011.88 684.50 L2015.84 684.75 L2020.30 685.00 L2025.35 685.25 L2031.12 685.50 L2037.78 685.75 L2045.55 686.00 L2054.73 686.25 L2055.50 687.50' stroke='#0000ff' stroke-width='1' fill='none' shape-rendering='crispEdges'/>
<text x='28.00' y='19.80' font-size='12.6' font-weight='normal' fill='#000' textLength='286.77' lengthAdjust='spacingAndGlyphs' >sec03-04-Minati-Frasca_Double_Scroll_Circuit_MJR.asc</text>
<text x='1122.30' y='19.80' font-size='12.6' font-weight='normal' fill='#9a9ca3' textLength='287.58' lengthAdjust='spacingAndGlyphs' >sec03-04-Minati-Frasca_Double_Scroll_Circuit_MJR.raw</text>
<text transform='translate(123.40,211.80) rotate(-90)' x='0.00' y='0' font-size='43.5' font-weight='bold' fill='#000' textLength='58.70' lengthAdjust='spacingAndGlyphs'>VR</text>
<text x='152.00' y='228.00' font-size='43.5' font-weight='bold' fill='#000' textLength='58.40' lengthAdjust='spacingAndGlyphs' >VR</text>
<text x='152.12' y='372.30' font-size='43.5' font-weight='bold' fill='#000' textLength='449.12' lengthAdjust='spacingAndGlyphs' >PWL(0m 6k 100m 6k)</text>
<text x='223.03' y='550.20' font-size='43.5' font-weight='bold' fill='#000' textLength='30.87' lengthAdjust='spacingAndGlyphs' >R</text>
<text x='144.06' y='657.50' font-size='43.5' font-weight='bold' fill='#000' textLength='187.12' lengthAdjust='spacingAndGlyphs' >R=V(VR)</text>
<text x='531.37' y='550.20' font-size='43.5' font-weight='bold' fill='#000' textLength='49.09' lengthAdjust='spacingAndGlyphs' >L2</text>
<text x='508.57' y='647.30' font-size='43.5' font-weight='bold' fill='#000' textLength='95.03' lengthAdjust='spacingAndGlyphs' >0.1H</text>
<text x='702.41' y='577.30' font-size='43.5' font-weight='bold' fill='#000' textLength='83.95' lengthAdjust='spacingAndGlyphs' >Q2b</text>
<text x='903.20' y='574.50' font-size='43.5' font-weight='bold' fill='#000' textLength='58.10' lengthAdjust='spacingAndGlyphs' >Q2</text>
<text x='904.05' y='639.80' font-size='43.5' font-weight='bold' fill='#000' textLength='159.75' lengthAdjust='spacingAndGlyphs' >2N3904</text>
<text x='730.02' y='718.00' font-size='43.5' font-weight='bold' fill='#000' textLength='57.06' lengthAdjust='spacingAndGlyphs' >Q1</text>
<text x='731.16' y='784.00' font-size='43.5' font-weight='bold' fill='#000' textLength='159.04' lengthAdjust='spacingAndGlyphs' >2N3904</text>
<text x='304.31' y='747.40' font-size='43.5' font-weight='bold' fill='#000' textLength='84.05' lengthAdjust='spacingAndGlyphs' >Q1b</text>
<text x='124.00' y='806.00' font-size='43.5' font-weight='bold' fill='#000' textLength='48.49' lengthAdjust='spacingAndGlyphs' >Vs</text>
<text x='124.00' y='949.60' font-size='43.5' font-weight='bold' fill='#000' textLength='53.01' lengthAdjust='spacingAndGlyphs' >5V</text>
<text x='312.33' y='863.30' font-size='43.5' font-weight='bold' fill='#000' textLength='47.38' lengthAdjust='spacingAndGlyphs' >L1</text>
<text x='265.16' y='936.10' font-size='43.5' font-weight='bold' fill='#000' textLength='95.97' lengthAdjust='spacingAndGlyphs' >0.1H</text>
<text x='356.15' y='1051.00' font-size='43.5' font-weight='bold' fill='#000' textLength='26.81' lengthAdjust='spacingAndGlyphs' >C</text>
<text x='266.35' y='1137.50' font-size='43.5' font-weight='bold' fill='#000' textLength='117.90' lengthAdjust='spacingAndGlyphs' >0.1µF</text>
<text x='152.23' y='1268.00' font-size='43.5' font-weight='bold' fill='#000' textLength='355.84' lengthAdjust='spacingAndGlyphs' >.tran 0 8m 7m 1u</text>
<text x='685.38' y='1244.90' font-size='16' font-weight='bold' fill='#0000c0' textLength='328.20' lengthAdjust='spacingAndGlyphs' >L1 &amp; L2 have 90 ohm series resistance</text>
<text x='685.37' y='1272.90' font-size='16' font-weight='bold' fill='#0000c0' textLength='189.07' lengthAdjust='spacingAndGlyphs' >R should be a 10K pot</text>
<text x='1101.40' y='51.30' font-size='13' font-weight='bold' fill='#c4c4c4' textLength='41.47' lengthAdjust='spacingAndGlyphs' >770mV</text>
<text x='1101.40' y='110.30' font-size='13' font-weight='bold' fill='#c4c4c4' textLength='41.47' lengthAdjust='spacingAndGlyphs' >700mV</text>
<text x='1101.40' y='168.30' font-size='13' font-weight='bold' fill='#c4c4c4' textLength='41.47' lengthAdjust='spacingAndGlyphs' >630mV</text>
<text x='1101.40' y='227.30' font-size='13' font-weight='bold' fill='#c4c4c4' textLength='41.47' lengthAdjust='spacingAndGlyphs' >560mV</text>
<text x='1101.40' y='286.30' font-size='13' font-weight='bold' fill='#c4c4c4' textLength='41.47' lengthAdjust='spacingAndGlyphs' >490mV</text>
<text x='1101.40' y='344.30' font-size='13' font-weight='bold' fill='#c4c4c4' textLength='41.47' lengthAdjust='spacingAndGlyphs' >420mV</text>
<text x='1101.40' y='403.30' font-size='13' font-weight='bold' fill='#c4c4c4' textLength='41.47' lengthAdjust='spacingAndGlyphs' >350mV</text>
<text x='1101.40' y='461.30' font-size='13' font-weight='bold' fill='#c4c4c4' textLength='41.47' lengthAdjust='spacingAndGlyphs' >280mV</text>
<text x='1101.40' y='520.30' font-size='13' font-weight='bold' fill='#c4c4c4' textLength='41.47' lengthAdjust='spacingAndGlyphs' >210mV</text>
<text x='1101.40' y='579.30' font-size='13' font-weight='bold' fill='#c4c4c4' textLength='41.47' lengthAdjust='spacingAndGlyphs' >140mV</text>
<text x='1108.55' y='637.30' font-size='13' font-weight='bold' fill='#c4c4c4' textLength='34.32' lengthAdjust='spacingAndGlyphs' >70mV</text>
<text x='1115.71' y='696.30' font-size='13' font-weight='bold' fill='#c4c4c4' textLength='27.17' lengthAdjust='spacingAndGlyphs' >0mV</text>
<text x='1138.25' y='712.80' font-size='13' font-weight='bold' fill='#c4c4c4' textLength='27.17' lengthAdjust='spacingAndGlyphs' >0mV</text>
<text x='1234.68' y='712.80' font-size='13' font-weight='bold' fill='#c4c4c4' textLength='34.32' lengthAdjust='spacingAndGlyphs' >80mV</text>
<text x='1332.10' y='712.80' font-size='13' font-weight='bold' fill='#c4c4c4' textLength='41.47' lengthAdjust='spacingAndGlyphs' >160mV</text>
<text x='1432.10' y='712.80' font-size='13' font-weight='bold' fill='#c4c4c4' textLength='41.47' lengthAdjust='spacingAndGlyphs' >240mV</text>
<text x='1532.10' y='712.80' font-size='13' font-weight='bold' fill='#c4c4c4' textLength='41.47' lengthAdjust='spacingAndGlyphs' >320mV</text>
<text x='1633.10' y='712.80' font-size='13' font-weight='bold' fill='#c4c4c4' textLength='41.47' lengthAdjust='spacingAndGlyphs' >400mV</text>
<text x='1733.10' y='712.80' font-size='13' font-weight='bold' fill='#c4c4c4' textLength='41.47' lengthAdjust='spacingAndGlyphs' >480mV</text>
<text x='1833.10' y='712.80' font-size='13' font-weight='bold' fill='#c4c4c4' textLength='41.47' lengthAdjust='spacingAndGlyphs' >560mV</text>
<text x='1933.10' y='712.80' font-size='13' font-weight='bold' fill='#c4c4c4' textLength='41.47' lengthAdjust='spacingAndGlyphs' >640mV</text>
<text x='2034.10' y='712.80' font-size='13' font-weight='bold' fill='#c4c4c4' textLength='41.47' lengthAdjust='spacingAndGlyphs' >720mV</text>
<text x='2134.10' y='712.80' font-size='13' font-weight='bold' fill='#c4c4c4' textLength='41.47' lengthAdjust='spacingAndGlyphs' >800mV</text>
<text x='1101.40' y='757.30' font-size='13' font-weight='bold' fill='#c4c4c4' textLength='41.47' lengthAdjust='spacingAndGlyphs' >770mV</text>
<text x='1101.40' y='816.30' font-size='13' font-weight='bold' fill='#c4c4c4' textLength='41.47' lengthAdjust='spacingAndGlyphs' >700mV</text>
<text x='1101.40' y='875.30' font-size='13' font-weight='bold' fill='#c4c4c4' textLength='41.47' lengthAdjust='spacingAndGlyphs' >630mV</text>
<text x='1101.40' y='934.30' font-size='13' font-weight='bold' fill='#c4c4c4' textLength='41.47' lengthAdjust='spacingAndGlyphs' >560mV</text>
<text x='1101.40' y='993.30' font-size='13' font-weight='bold' fill='#c4c4c4' textLength='41.47' lengthAdjust='spacingAndGlyphs' >490mV</text>
<text x='1101.40' y='1052.30' font-size='13' font-weight='bold' fill='#c4c4c4' textLength='41.47' lengthAdjust='spacingAndGlyphs' >420mV</text>
<text x='1101.40' y='1110.30' font-size='13' font-weight='bold' fill='#c4c4c4' textLength='41.47' lengthAdjust='spacingAndGlyphs' >350mV</text>
<text x='1101.40' y='1169.30' font-size='13' font-weight='bold' fill='#c4c4c4' textLength='41.47' lengthAdjust='spacingAndGlyphs' >280mV</text>
<text x='1101.40' y='1228.30' font-size='13' font-weight='bold' fill='#c4c4c4' textLength='41.47' lengthAdjust='spacingAndGlyphs' >210mV</text>
<text x='1101.40' y='1287.30' font-size='13' font-weight='bold' fill='#c4c4c4' textLength='41.47' lengthAdjust='spacingAndGlyphs' >140mV</text>
<text x='1108.55' y='1346.30' font-size='13' font-weight='bold' fill='#c4c4c4' textLength='34.32' lengthAdjust='spacingAndGlyphs' >70mV</text>
<text x='1115.71' y='1405.30' font-size='13' font-weight='bold' fill='#c4c4c4' textLength='27.17' lengthAdjust='spacingAndGlyphs' >0mV</text>
<text x='1133.88' y='1422.00' font-size='13' font-weight='bold' fill='#c4c4c4' textLength='36.47' lengthAdjust='spacingAndGlyphs' >0.0ms</text>
<text x='1233.88' y='1422.00' font-size='13' font-weight='bold' fill='#c4c4c4' textLength='36.47' lengthAdjust='spacingAndGlyphs' >0.1ms</text>
<text x='1334.88' y='1422.00' font-size='13' font-weight='bold' fill='#c4c4c4' textLength='36.47' lengthAdjust='spacingAndGlyphs' >0.2ms</text>
<text x='1434.88' y='1422.00' font-size='13' font-weight='bold' fill='#c4c4c4' textLength='36.47' lengthAdjust='spacingAndGlyphs' >0.3ms</text>
<text x='1534.88' y='1422.00' font-size='13' font-weight='bold' fill='#c4c4c4' textLength='36.47' lengthAdjust='spacingAndGlyphs' >0.4ms</text>
<text x='1635.88' y='1422.00' font-size='13' font-weight='bold' fill='#c4c4c4' textLength='36.47' lengthAdjust='spacingAndGlyphs' >0.5ms</text>
<text x='1735.88' y='1422.00' font-size='13' font-weight='bold' fill='#c4c4c4' textLength='36.47' lengthAdjust='spacingAndGlyphs' >0.6ms</text>
<text x='1835.88' y='1422.00' font-size='13' font-weight='bold' fill='#c4c4c4' textLength='36.47' lengthAdjust='spacingAndGlyphs' >0.7ms</text>
<text x='1935.88' y='1422.00' font-size='13' font-weight='bold' fill='#c4c4c4' textLength='36.47' lengthAdjust='spacingAndGlyphs' >0.8ms</text>
<text x='2036.88' y='1422.00' font-size='13' font-weight='bold' fill='#c4c4c4' textLength='36.47' lengthAdjust='spacingAndGlyphs' >0.9ms</text>
<text x='2136.88' y='1422.00' font-size='13' font-weight='bold' fill='#c4c4c4' textLength='36.47' lengthAdjust='spacingAndGlyphs' >1.0ms</text>
<text x='1633.00' y='42.00' font-size='13' font-weight='bold' fill='#0000ff' textLength='39.72' lengthAdjust='spacingAndGlyphs' >V(q2b)</text>
<text x='1633.00' y='731.60' font-size='13' font-weight='bold' fill='#c4c4c4' textLength='40.23' lengthAdjust='spacingAndGlyphs' >V(q1b)</text>
<text x='1299.20' y='748.30' font-size='13' font-weight='bold' fill='#00ff00' textLength='40.13' lengthAdjust='spacingAndGlyphs' >V(q1b)</text>
<text x='1633.00' y='748.30' font-size='13' font-weight='bold' fill='#0000ff' textLength='39.32' lengthAdjust='spacingAndGlyphs' >V(q2b)</text>
<text x='1953.00' y='748.30' font-size='13' font-weight='bold' fill='#ff0000' textLength='68.03' lengthAdjust='spacingAndGlyphs' >V(vr)/10000</text>
<text x='1639.00' y='1437.60' font-size='13' font-weight='bold' fill='#c4c4c4' textLength='28.04' lengthAdjust='spacingAndGlyphs' >time</text>
</svg></body></html>
